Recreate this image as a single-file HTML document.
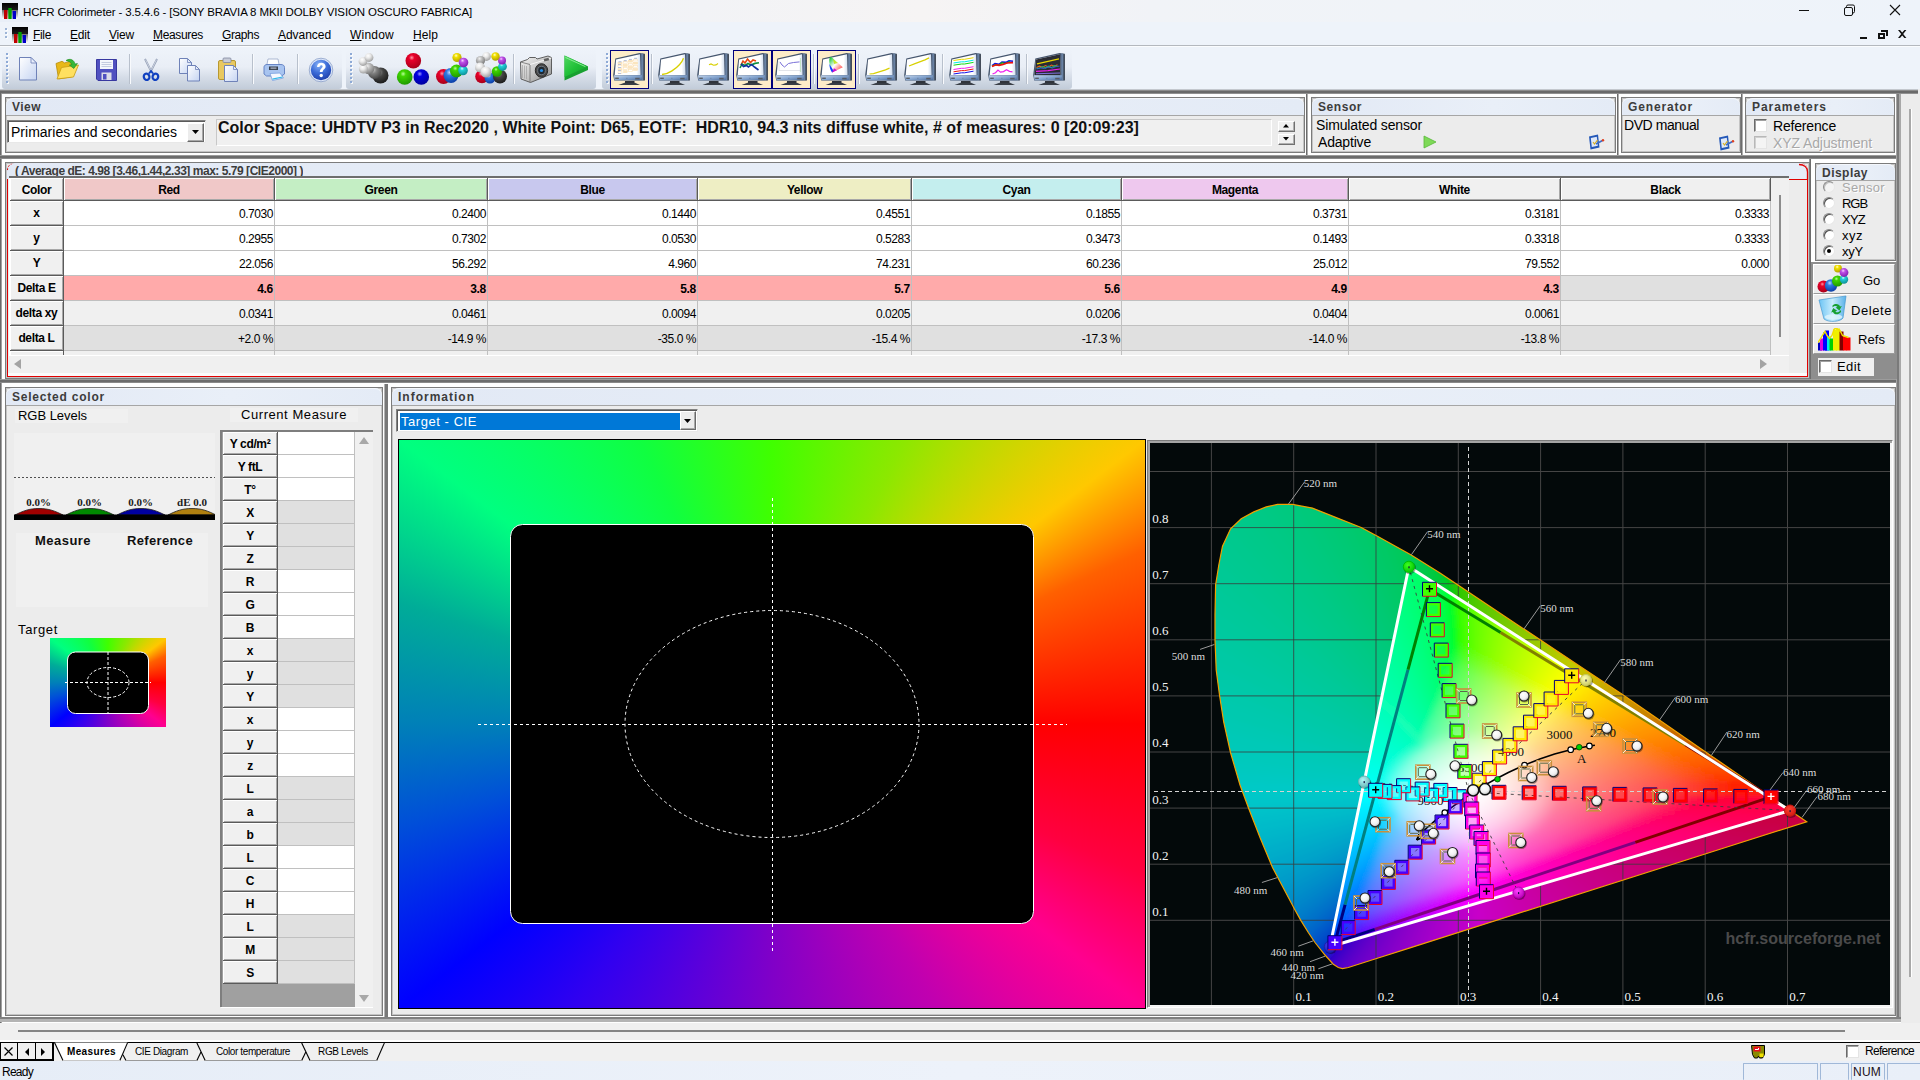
<!DOCTYPE html><html><head><meta charset="utf-8"><title>HCFR Colorimeter</title><style>
*{margin:0;padding:0;box-sizing:border-box}
html,body{width:1920px;height:1080px;overflow:hidden;background:#ececec;font-family:"Liberation Sans",sans-serif;font-size:12px;color:#000}
div,svg{position:absolute}
.t{white-space:nowrap;overflow:visible}
u{text-decoration:underline;text-underline-offset:1px}
</style></head><body><div style="left:0px;top:0px;width:1920px;height:22px;background:linear-gradient(90deg,#e9eff8 0%,#eef2f8 25%,#f6f4f4 48%,#f1f3f7 60%,#eef3fa 100%)"></div>
<svg style="left:2px;top:3px" width="16" height="16" viewBox="0 0 16 16"><defs><linearGradient id="ai2" x1="0" y1="0" x2="0" y2="1"><stop offset="0" stop-color="#000"/><stop offset="1" stop-color="#fff"/></linearGradient></defs><rect width="16" height="16" fill="url(#ai2)"/><rect x="0" y="0" width="16" height="7" fill="#000" opacity=".75"/><rect x="2" y="7" width="3.4" height="9" fill="#c00000"/><rect x="6.3" y="5" width="3.4" height="11" fill="#00a000"/><rect x="10.6" y="8" width="3.4" height="8" fill="#0000c8"/></svg>
<div class="t" style="left:23px;top:4px;height:16px;line-height:16px;font-size:11.5px;color:#000;letter-spacing:-0.136px;">HCFR Colorimeter - 3.5.4.6 - [SONY BRAVIA 8 MKII DOLBY VISION OSCURO FABRICA]</div>
<svg style="left:1790px;top:0" width="130" height="22" viewBox="0 0 130 22"><g stroke="#111" stroke-width="1" fill="none" shape-rendering="crispEdges"><path d="M9 10.5h10"/><rect x="54.5" y="7.5" width="8" height="8" rx="1.5" shape-rendering="auto"/><path d="M56.5 7.5v-1a1.5 1.5 0 0 1 1.5-1.5h5a1.5 1.5 0 0 1 1.5 1.5v5a1.5 1.5 0 0 1-1.5 1.5h-0.5" shape-rendering="auto"/></g><path d="M100 5l10 10M110 5l-10 10" stroke="#111" stroke-width="1.1" fill="none"/></svg>
<div style="left:0px;top:22px;width:1920px;height:24px;background:#eef3fa"></div>
<div style="left:0px;top:45px;width:1920px;height:1px;background:#b4b8be"></div>
<div style="left:0px;top:46px;width:1920px;height:1px;background:#fafcfe"></div>
<svg style="left:5px;top:28px" width="3" height="12"><rect x="0" y="0" width="2" height="2" fill="#9db4d6"/><rect x="1" y="1" width="2" height="2" fill="#fff" opacity=".8"/><rect x="0.5" y="0.5" width="1.5" height="1.5" fill="#9db4d6"/><rect x="0" y="4" width="2" height="2" fill="#9db4d6"/><rect x="1" y="5" width="2" height="2" fill="#fff" opacity=".8"/><rect x="0.5" y="4.5" width="1.5" height="1.5" fill="#9db4d6"/><rect x="0" y="8" width="2" height="2" fill="#9db4d6"/><rect x="1" y="9" width="2" height="2" fill="#fff" opacity=".8"/><rect x="0.5" y="8.5" width="1.5" height="1.5" fill="#9db4d6"/></svg>
<svg style="left:12px;top:27px" width="16" height="16" viewBox="0 0 16 16"><defs><linearGradient id="ai12" x1="0" y1="0" x2="0" y2="1"><stop offset="0" stop-color="#000"/><stop offset="1" stop-color="#fff"/></linearGradient></defs><rect width="16" height="16" fill="url(#ai12)"/><rect x="0" y="0" width="16" height="7" fill="#000" opacity=".75"/><rect x="2" y="7" width="3.4" height="9" fill="#c00000"/><rect x="6.3" y="5" width="3.4" height="11" fill="#00a000"/><rect x="10.6" y="8" width="3.4" height="8" fill="#0000c8"/></svg>
<div class="t" style="left:33px;top:27px;height:16px;line-height:16px;font-size:12px;color:#000;letter-spacing:-0.334px;"><u>F</u>ile</div>
<div class="t" style="left:70px;top:27px;height:16px;line-height:16px;font-size:12px;color:#000;letter-spacing:-0.17px;"><u>E</u>dit</div>
<div class="t" style="left:109px;top:27px;height:16px;line-height:16px;font-size:12px;color:#000;letter-spacing:-0.199px;"><u>V</u>iew</div>
<div class="t" style="left:153px;top:27px;height:16px;line-height:16px;font-size:12px;color:#000;letter-spacing:-0.336px;"><u>M</u>easures</div>
<div class="t" style="left:222px;top:27px;height:16px;line-height:16px;font-size:12px;color:#000;letter-spacing:-0.392px;"><u>G</u>raphs</div>
<div class="t" style="left:278px;top:27px;height:16px;line-height:16px;font-size:12px;color:#000;letter-spacing:-0.047px;"><u>A</u>dvanced</div>
<div class="t" style="left:350px;top:27px;height:16px;line-height:16px;font-size:12px;color:#000;letter-spacing:0.22px;"><u>W</u>indow</div>
<div class="t" style="left:413px;top:27px;height:16px;line-height:16px;font-size:12px;color:#000;letter-spacing:0.08px;"><u>H</u>elp</div>
<svg style="left:1855px;top:26px" width="60" height="18" viewBox="0 0 60 18"><g fill="#111"><rect x="5" y="11" width="7" height="2"/><path d="M26 4h7v6h-2v-4h-5z M23 7h7v6h-7z M25 9v2h3v-2z" fill-rule="evenodd"/><path d="M43 4l2-0 2.2 2.6 2.2-2.6h2l-3.2 4 3.2 4h-2l-2.2-2.6-2.2 2.6h-2l3.2-4z"/></g></svg>
<div style="left:0px;top:47px;width:1920px;height:43px;background:#eef3fa"></div>
<div style="left:2px;top:49px;width:340px;height:40px;background:linear-gradient(180deg,#eef3fa 0%,#e9eef6 45%,#d6dde8 70%,#c2ccd9 100%);border-radius:4px 4px 3px 3px"></div>
<div style="left:346px;top:49px;width:250px;height:40px;background:linear-gradient(180deg,#eef3fa 0%,#e9eef6 45%,#d6dde8 70%,#c2ccd9 100%);border-radius:4px 4px 3px 3px"></div>
<div style="left:602px;top:49px;width:470px;height:40px;background:linear-gradient(180deg,#eef3fa 0%,#e9eef6 45%,#d6dde8 70%,#c2ccd9 100%);border-radius:4px 4px 3px 3px"></div>
<svg style="left:6px;top:53px" width="3" height="32"><rect x="0" y="0" width="2" height="2" fill="#8eaad6"/><rect x="1" y="1" width="2" height="2" fill="#fff" opacity=".8"/><rect x="0.5" y="0.5" width="1.5" height="1.5" fill="#8eaad6"/><rect x="0" y="4" width="2" height="2" fill="#8eaad6"/><rect x="1" y="5" width="2" height="2" fill="#fff" opacity=".8"/><rect x="0.5" y="4.5" width="1.5" height="1.5" fill="#8eaad6"/><rect x="0" y="8" width="2" height="2" fill="#8eaad6"/><rect x="1" y="9" width="2" height="2" fill="#fff" opacity=".8"/><rect x="0.5" y="8.5" width="1.5" height="1.5" fill="#8eaad6"/><rect x="0" y="12" width="2" height="2" fill="#8eaad6"/><rect x="1" y="13" width="2" height="2" fill="#fff" opacity=".8"/><rect x="0.5" y="12.5" width="1.5" height="1.5" fill="#8eaad6"/><rect x="0" y="16" width="2" height="2" fill="#8eaad6"/><rect x="1" y="17" width="2" height="2" fill="#fff" opacity=".8"/><rect x="0.5" y="16.5" width="1.5" height="1.5" fill="#8eaad6"/><rect x="0" y="20" width="2" height="2" fill="#8eaad6"/><rect x="1" y="21" width="2" height="2" fill="#fff" opacity=".8"/><rect x="0.5" y="20.5" width="1.5" height="1.5" fill="#8eaad6"/><rect x="0" y="24" width="2" height="2" fill="#8eaad6"/><rect x="1" y="25" width="2" height="2" fill="#fff" opacity=".8"/><rect x="0.5" y="24.5" width="1.5" height="1.5" fill="#8eaad6"/><rect x="0" y="28" width="2" height="2" fill="#8eaad6"/><rect x="1" y="29" width="2" height="2" fill="#fff" opacity=".8"/><rect x="0.5" y="28.5" width="1.5" height="1.5" fill="#8eaad6"/></svg>
<svg style="left:350px;top:53px" width="3" height="32"><rect x="0" y="0" width="2" height="2" fill="#8eaad6"/><rect x="1" y="1" width="2" height="2" fill="#fff" opacity=".8"/><rect x="0.5" y="0.5" width="1.5" height="1.5" fill="#8eaad6"/><rect x="0" y="4" width="2" height="2" fill="#8eaad6"/><rect x="1" y="5" width="2" height="2" fill="#fff" opacity=".8"/><rect x="0.5" y="4.5" width="1.5" height="1.5" fill="#8eaad6"/><rect x="0" y="8" width="2" height="2" fill="#8eaad6"/><rect x="1" y="9" width="2" height="2" fill="#fff" opacity=".8"/><rect x="0.5" y="8.5" width="1.5" height="1.5" fill="#8eaad6"/><rect x="0" y="12" width="2" height="2" fill="#8eaad6"/><rect x="1" y="13" width="2" height="2" fill="#fff" opacity=".8"/><rect x="0.5" y="12.5" width="1.5" height="1.5" fill="#8eaad6"/><rect x="0" y="16" width="2" height="2" fill="#8eaad6"/><rect x="1" y="17" width="2" height="2" fill="#fff" opacity=".8"/><rect x="0.5" y="16.5" width="1.5" height="1.5" fill="#8eaad6"/><rect x="0" y="20" width="2" height="2" fill="#8eaad6"/><rect x="1" y="21" width="2" height="2" fill="#fff" opacity=".8"/><rect x="0.5" y="20.5" width="1.5" height="1.5" fill="#8eaad6"/><rect x="0" y="24" width="2" height="2" fill="#8eaad6"/><rect x="1" y="25" width="2" height="2" fill="#fff" opacity=".8"/><rect x="0.5" y="24.5" width="1.5" height="1.5" fill="#8eaad6"/><rect x="0" y="28" width="2" height="2" fill="#8eaad6"/><rect x="1" y="29" width="2" height="2" fill="#fff" opacity=".8"/><rect x="0.5" y="28.5" width="1.5" height="1.5" fill="#8eaad6"/></svg>
<svg style="left:606px;top:53px" width="3" height="32"><rect x="0" y="0" width="2" height="2" fill="#8eaad6"/><rect x="1" y="1" width="2" height="2" fill="#fff" opacity=".8"/><rect x="0.5" y="0.5" width="1.5" height="1.5" fill="#8eaad6"/><rect x="0" y="4" width="2" height="2" fill="#8eaad6"/><rect x="1" y="5" width="2" height="2" fill="#fff" opacity=".8"/><rect x="0.5" y="4.5" width="1.5" height="1.5" fill="#8eaad6"/><rect x="0" y="8" width="2" height="2" fill="#8eaad6"/><rect x="1" y="9" width="2" height="2" fill="#fff" opacity=".8"/><rect x="0.5" y="8.5" width="1.5" height="1.5" fill="#8eaad6"/><rect x="0" y="12" width="2" height="2" fill="#8eaad6"/><rect x="1" y="13" width="2" height="2" fill="#fff" opacity=".8"/><rect x="0.5" y="12.5" width="1.5" height="1.5" fill="#8eaad6"/><rect x="0" y="16" width="2" height="2" fill="#8eaad6"/><rect x="1" y="17" width="2" height="2" fill="#fff" opacity=".8"/><rect x="0.5" y="16.5" width="1.5" height="1.5" fill="#8eaad6"/><rect x="0" y="20" width="2" height="2" fill="#8eaad6"/><rect x="1" y="21" width="2" height="2" fill="#fff" opacity=".8"/><rect x="0.5" y="20.5" width="1.5" height="1.5" fill="#8eaad6"/><rect x="0" y="24" width="2" height="2" fill="#8eaad6"/><rect x="1" y="25" width="2" height="2" fill="#fff" opacity=".8"/><rect x="0.5" y="24.5" width="1.5" height="1.5" fill="#8eaad6"/><rect x="0" y="28" width="2" height="2" fill="#8eaad6"/><rect x="1" y="29" width="2" height="2" fill="#fff" opacity=".8"/><rect x="0.5" y="28.5" width="1.5" height="1.5" fill="#8eaad6"/></svg>
<svg width="0" height="0" style="left:0;top:0"><defs>
<linearGradient id="mside" x1="0" x2="1"><stop offset="0" stop-color="#86a6d0"/><stop offset=".45" stop-color="#5a6f8c"/><stop offset="1" stop-color="#2b2f36"/></linearGradient>
<linearGradient id="mbot" x1="0" x2="1" y1="0" y2="1"><stop offset="0" stop-color="#c9d9ee"/><stop offset=".5" stop-color="#86a6d0"/><stop offset="1" stop-color="#4f6d9a"/></linearGradient>
<linearGradient id="mscr" x1="0" x2="1"><stop offset="0" stop-color="#fff"/><stop offset=".85" stop-color="#fff"/><stop offset="1" stop-color="#cfdcee"/></linearGradient>
<radialGradient id="bRed" cx=".4" cy=".3" r=".7"><stop offset="0" stop-color="#ff9aa8"/><stop offset=".25" stop-color="#e8002a"/><stop offset="1" stop-color="#a8001a"/></radialGradient>
<radialGradient id="bGrn" cx=".4" cy=".3" r=".7"><stop offset="0" stop-color="#b8ff9a"/><stop offset=".25" stop-color="#3fd400"/><stop offset="1" stop-color="#1f9a00"/></radialGradient>
<radialGradient id="bBlu" cx=".4" cy=".3" r=".7"><stop offset="0" stop-color="#9a9aff"/><stop offset=".25" stop-color="#0000e0"/><stop offset="1" stop-color="#0000a0"/></radialGradient>
<radialGradient id="bBl2" cx=".4" cy=".3" r=".7"><stop offset="0" stop-color="#bcd8ff"/><stop offset=".3" stop-color="#2f7be0"/><stop offset="1" stop-color="#0a3ea8"/></radialGradient>
<radialGradient id="bYel" cx=".4" cy=".3" r=".7"><stop offset="0" stop-color="#ffffd0"/><stop offset=".3" stop-color="#f2e000"/><stop offset="1" stop-color="#b0a000"/></radialGradient>
<radialGradient id="bMag" cx=".4" cy=".3" r=".7"><stop offset="0" stop-color="#f6d0ff"/><stop offset=".3" stop-color="#c050e8"/><stop offset="1" stop-color="#8020b0"/></radialGradient>
<radialGradient id="bCya" cx=".4" cy=".3" r=".7"><stop offset="0" stop-color="#d0ffff"/><stop offset=".3" stop-color="#20d0d8"/><stop offset="1" stop-color="#109098"/></radialGradient>
<radialGradient id="bW" cx=".4" cy=".3" r=".7"><stop offset="0" stop-color="#fff"/><stop offset=".4" stop-color="#e8e8e8"/><stop offset="1" stop-color="#a0a0a0"/></radialGradient>
<radialGradient id="bG1" cx=".4" cy=".3" r=".7"><stop offset="0" stop-color="#f0f0f0"/><stop offset=".4" stop-color="#b8b8b8"/><stop offset="1" stop-color="#787878"/></radialGradient>
<radialGradient id="bG2" cx=".4" cy=".3" r=".7"><stop offset="0" stop-color="#c8c8c8"/><stop offset=".4" stop-color="#808080"/><stop offset="1" stop-color="#484848"/></radialGradient>
<radialGradient id="bG3" cx=".4" cy=".3" r=".7"><stop offset="0" stop-color="#909090"/><stop offset=".4" stop-color="#444"/><stop offset="1" stop-color="#1c1c1c"/></radialGradient>
<linearGradient id="docg" x1="0" y1="0" x2="1" y2="1"><stop offset="0" stop-color="#fff"/><stop offset="1" stop-color="#c5d4f2"/></linearGradient>
</defs></svg>
<div style="left:610px;top:50px;width:39px;height:39px;background:#fdecc8;border:1px solid #00007c"></div>
<svg style="left:613px;top:52px" width="33" height="34" viewBox="0 0 33 34">
<path d="M5.500 33L11.500 30.800h10.500l5 2.200z" fill="#3a3f47"/><rect x="12" y="29" width="9.5" height="2.2" fill="#30343b"/>
<path d="M2.3 6.6L26.5 0.9 31.8 1.8V28.6H1.2L0.2 23z" fill="#46566e"/>
<path d="M28.6 1.6l3 .6v26h-3z" fill="url(#mside)"/>
<path d="M1 23.2h27.8v5H1.6z" fill="url(#mbot)"/>
<path d="M3.1 7.6L27 2.2l.6 20.9H1.7z" fill="url(#mscr)"/>
<rect x="2.2" y="25.6" width="3.6" height="1.4" fill="#5a6068"/><rect x="22.2" y="25.8" width="4.4" height="1.6" fill="#565c66"/><rect x="13.2" y="25.8" width="1.3" height="1.2" fill="#7088a8"/>
<rect x="5.0" y="10.5" width="4" height="1.8" fill="#fbe6c0" stroke="#fbe0b4" stroke-width=".6"/><rect x="5.0" y="13.6" width="4" height="1.8" fill="#fff" stroke="#fbe0b4" stroke-width=".6"/><rect x="5.0" y="16.7" width="4" height="1.8" fill="#fbe6c0" stroke="#fbe0b4" stroke-width=".6"/><rect x="5.0" y="19.8" width="4" height="1.8" fill="#fff" stroke="#fbe0b4" stroke-width=".6"/><rect x="10.2" y="9.4" width="4" height="1.8" fill="#fff" stroke="#fbe0b4" stroke-width=".6"/><rect x="10.2" y="12.5" width="4" height="1.8" fill="#fbe6c0" stroke="#fbe0b4" stroke-width=".6"/><rect x="10.2" y="15.600000000000001" width="4" height="1.8" fill="#fff" stroke="#fbe0b4" stroke-width=".6"/><rect x="10.2" y="18.700000000000003" width="4" height="1.8" fill="#fbe6c0" stroke="#fbe0b4" stroke-width=".6"/><rect x="15.4" y="8.3" width="4" height="1.8" fill="#fbe6c0" stroke="#fbe0b4" stroke-width=".6"/><rect x="15.4" y="11.4" width="4" height="1.8" fill="#fff" stroke="#fbe0b4" stroke-width=".6"/><rect x="15.4" y="14.5" width="4" height="1.8" fill="#fbe6c0" stroke="#fbe0b4" stroke-width=".6"/><rect x="15.4" y="17.6" width="4" height="1.8" fill="#fff" stroke="#fbe0b4" stroke-width=".6"/><rect x="20.6" y="7.199999999999999" width="4" height="1.8" fill="#fff" stroke="#fbe0b4" stroke-width=".6"/><rect x="20.6" y="10.299999999999999" width="4" height="1.8" fill="#fbe6c0" stroke="#fbe0b4" stroke-width=".6"/><rect x="20.6" y="13.399999999999999" width="4" height="1.8" fill="#fff" stroke="#fbe0b4" stroke-width=".6"/><rect x="20.6" y="16.5" width="4" height="1.8" fill="#fbe6c0" stroke="#fbe0b4" stroke-width=".6"/><rect x="5.5" y="9.2" width="3" height="1.2" fill="#b9c0d6"/><rect x="10.7" y="8.049999999999999" width="3" height="1.2" fill="#b9c0d6"/><rect x="15.9" y="6.8999999999999995" width="3" height="1.2" fill="#b9c0d6"/><rect x="21.1" y="5.75" width="3" height="1.2" fill="#b9c0d6"/><rect x="5" y="12" width="3" height="1" fill="#b9c0d6"/><rect x="5" y="15" width="3" height="1" fill="#b9c0d6"/><rect x="5" y="18" width="3" height="1" fill="#b9c0d6"/><rect x="5" y="21" width="3" height="1" fill="#b9c0d6"/></svg>
<svg style="left:658px;top:52px" width="33" height="34" viewBox="0 0 33 34">
<path d="M5.500 33L11.500 30.800h10.500l5 2.200z" fill="#3a3f47"/><rect x="12" y="29" width="9.5" height="2.2" fill="#30343b"/>
<path d="M2.3 6.6L26.5 0.9 31.8 1.8V28.6H1.2L0.2 23z" fill="#46566e"/>
<path d="M28.6 1.6l3 .6v26h-3z" fill="url(#mside)"/>
<path d="M1 23.2h27.8v5H1.6z" fill="url(#mbot)"/>
<path d="M3.1 7.6L27 2.2l.6 20.9H1.7z" fill="url(#mscr)"/>
<rect x="2.2" y="25.6" width="3.6" height="1.4" fill="#5a6068"/><rect x="22.2" y="25.8" width="4.4" height="1.6" fill="#565c66"/><rect x="13.2" y="25.8" width="1.3" height="1.2" fill="#7088a8"/>
<path d="M4 22.5c3-.3 6.5-1.2 10-3.6 4.5-3 9.5-7 11.5-12.7" stroke="#d8d000" stroke-width="1.3" fill="none"/></svg>
<svg style="left:697px;top:52px" width="33" height="34" viewBox="0 0 33 34">
<path d="M5.500 33L11.500 30.800h10.500l5 2.200z" fill="#3a3f47"/><rect x="12" y="29" width="9.5" height="2.2" fill="#30343b"/>
<path d="M2.3 6.6L26.5 0.9 31.8 1.8V28.6H1.2L0.2 23z" fill="#46566e"/>
<path d="M28.6 1.6l3 .6v26h-3z" fill="url(#mside)"/>
<path d="M1 23.2h27.8v5H1.6z" fill="url(#mbot)"/>
<path d="M3.1 7.6L27 2.2l.6 20.9H1.7z" fill="url(#mscr)"/>
<rect x="2.2" y="25.6" width="3.6" height="1.4" fill="#5a6068"/><rect x="22.2" y="25.8" width="4.4" height="1.6" fill="#565c66"/><rect x="13.2" y="25.8" width="1.3" height="1.2" fill="#7088a8"/>
<path d="M12 12.8l2-.9 2.6 1.3 2.4-.3 2-1.4" stroke="#d8d000" stroke-width="1.1" fill="none"/></svg>
<div style="left:733px;top:50px;width:39px;height:39px;background:#fdecc8;border:1px solid #00007c"></div>
<svg style="left:736px;top:52px" width="33" height="34" viewBox="0 0 33 34">
<path d="M5.500 33L11.500 30.800h10.500l5 2.200z" fill="#3a3f47"/><rect x="12" y="29" width="9.5" height="2.2" fill="#30343b"/>
<path d="M2.3 6.6L26.5 0.9 31.8 1.8V28.6H1.2L0.2 23z" fill="#46566e"/>
<path d="M28.6 1.6l3 .6v26h-3z" fill="url(#mside)"/>
<path d="M1 23.2h27.8v5H1.6z" fill="url(#mbot)"/>
<path d="M3.1 7.6L27 2.2l.6 20.9H1.7z" fill="url(#mscr)"/>
<rect x="2.2" y="25.6" width="3.6" height="1.4" fill="#5a6068"/><rect x="22.2" y="25.8" width="4.4" height="1.6" fill="#565c66"/><rect x="13.2" y="25.8" width="1.3" height="1.2" fill="#7088a8"/>
<path d="M5 13l2-4 2 2 2.5-4 3 3.5 2.5-2.5 3 1" stroke="#e84810" stroke-width="1.6" fill="none"/><path d="M4 16l2-4 3 1.5 3-2 3 1.5 4-1.6 4-.6" stroke="#109040" stroke-width="1.6" fill="none"/><path d="M5 12l2.5 2.5 3-1 2 1.5 3-2.5 3 2.5 4 3" stroke="#1030a0" stroke-width="1.6" fill="none"/></svg>
<div style="left:772px;top:50px;width:39px;height:39px;background:#fdecc8;border:1px solid #00007c"></div>
<svg style="left:775px;top:52px" width="33" height="34" viewBox="0 0 33 34">
<path d="M5.500 33L11.500 30.800h10.500l5 2.200z" fill="#3a3f47"/><rect x="12" y="29" width="9.5" height="2.2" fill="#30343b"/>
<path d="M2.3 6.6L26.5 0.9 31.8 1.8V28.6H1.2L0.2 23z" fill="#46566e"/>
<path d="M28.6 1.6l3 .6v26h-3z" fill="url(#mside)"/>
<path d="M1 23.2h27.8v5H1.6z" fill="url(#mbot)"/>
<path d="M3.1 7.6L27 2.2l.6 20.9H1.7z" fill="url(#mscr)"/>
<rect x="2.2" y="25.6" width="3.6" height="1.4" fill="#5a6068"/><rect x="22.2" y="25.8" width="4.4" height="1.6" fill="#565c66"/><rect x="13.2" y="25.8" width="1.3" height="1.2" fill="#7088a8"/>
<path d="M5 10l2 3 2.5 2 4-3.5 5-1 6-.6" stroke="#7a70d8" stroke-width="1" fill="none"/><path d="M4 18.5h22M4 9v9.5" stroke="#d0d4dc" stroke-width=".6" fill="none"/><path d="M25.5 6v14" stroke="#b8e0b8" stroke-width=".8"/></svg>
<div style="left:817px;top:50px;width:39px;height:39px;background:#fdecc8;border:1px solid #00007c"></div>
<svg style="left:820px;top:52px" width="33" height="34" viewBox="0 0 33 34">
<path d="M5.500 33L11.500 30.800h10.500l5 2.200z" fill="#3a3f47"/><rect x="12" y="29" width="9.5" height="2.2" fill="#30343b"/>
<path d="M2.3 6.6L26.5 0.9 31.8 1.8V28.6H1.2L0.2 23z" fill="#46566e"/>
<path d="M28.6 1.6l3 .6v26h-3z" fill="url(#mside)"/>
<path d="M1 23.2h27.8v5H1.6z" fill="url(#mbot)"/>
<path d="M3.1 7.6L27 2.2l.6 20.9H1.7z" fill="url(#mscr)"/>
<rect x="2.2" y="25.6" width="3.6" height="1.4" fill="#5a6068"/><rect x="22.2" y="25.8" width="4.4" height="1.6" fill="#565c66"/><rect x="13.2" y="25.8" width="1.3" height="1.2" fill="#7088a8"/>
<defs><linearGradient id="cg1" x1="0" y1="0" x2="1" y2="1"><stop offset="0" stop-color="#00c020"/><stop offset=".45" stop-color="#fff"/><stop offset="1" stop-color="#ff1010"/></linearGradient></defs><path d="M9.8 5.6c1.2-.8 2.6 0 3.6 1.2L22.8 15.3 12 20.6C10.4 16 8.2 9 9.8 5.6z" fill="url(#cg1)"/><path d="M9.4 12c0 3 .9 6 2.6 8.6l2-1.2z" fill="#1040ff"/><path d="M12 20.6l5-2.4-3-2z" fill="#d010d0"/><path d="M13 7l5 4-4 1z" fill="#c0e000" opacity=".8"/></svg>
<svg style="left:865px;top:52px" width="33" height="34" viewBox="0 0 33 34">
<path d="M5.500 33L11.500 30.800h10.500l5 2.200z" fill="#3a3f47"/><rect x="12" y="29" width="9.5" height="2.2" fill="#30343b"/>
<path d="M2.3 6.6L26.5 0.9 31.8 1.8V28.6H1.2L0.2 23z" fill="#46566e"/>
<path d="M28.6 1.6l3 .6v26h-3z" fill="url(#mside)"/>
<path d="M1 23.2h27.8v5H1.6z" fill="url(#mbot)"/>
<path d="M3.1 7.6L27 2.2l.6 20.9H1.7z" fill="url(#mscr)"/>
<rect x="2.2" y="25.6" width="3.6" height="1.4" fill="#5a6068"/><rect x="22.2" y="25.8" width="4.4" height="1.6" fill="#565c66"/><rect x="13.2" y="25.8" width="1.3" height="1.2" fill="#7088a8"/>
<path d="M4.5 22l4-.4 12-3.7 4-1.8" stroke="#d8d000" stroke-width="1.2" fill="none"/></svg>
<svg style="left:904px;top:52px" width="33" height="34" viewBox="0 0 33 34">
<path d="M5.500 33L11.500 30.800h10.500l5 2.200z" fill="#3a3f47"/><rect x="12" y="29" width="9.5" height="2.2" fill="#30343b"/>
<path d="M2.3 6.6L26.5 0.9 31.8 1.8V28.6H1.2L0.2 23z" fill="#46566e"/>
<path d="M28.6 1.6l3 .6v26h-3z" fill="url(#mside)"/>
<path d="M1 23.2h27.8v5H1.6z" fill="url(#mbot)"/>
<path d="M3.1 7.6L27 2.2l.6 20.9H1.7z" fill="url(#mscr)"/>
<rect x="2.2" y="25.6" width="3.6" height="1.4" fill="#5a6068"/><rect x="22.2" y="25.8" width="4.4" height="1.6" fill="#565c66"/><rect x="13.2" y="25.8" width="1.3" height="1.2" fill="#7088a8"/>
<path d="M5 14l6-2.4 10-3.7 4-2" stroke="#d8d000" stroke-width="1.2" fill="none"/></svg>
<svg style="left:949px;top:52px" width="33" height="34" viewBox="0 0 33 34">
<path d="M5.500 33L11.500 30.800h10.500l5 2.200z" fill="#3a3f47"/><rect x="12" y="29" width="9.5" height="2.2" fill="#30343b"/>
<path d="M2.3 6.6L26.5 0.9 31.8 1.8V28.6H1.2L0.2 23z" fill="#46566e"/>
<path d="M28.6 1.6l3 .6v26h-3z" fill="url(#mside)"/>
<path d="M1 23.2h27.8v5H1.6z" fill="url(#mbot)"/>
<path d="M3.1 7.6L27 2.2l.6 20.9H1.7z" fill="url(#mscr)"/>
<rect x="2.2" y="25.6" width="3.6" height="1.4" fill="#5a6068"/><rect x="22.2" y="25.8" width="4.4" height="1.6" fill="#565c66"/><rect x="13.2" y="25.8" width="1.3" height="1.2" fill="#7088a8"/>
<path d="M4.5 8.5l8-1.2 h3 l9-1.6" stroke="#e8d800" stroke-width="1" fill="none"/><path d="M4.5 11l8-1.2 h3 l9-1.6" stroke="#00e8e8" stroke-width="1" fill="none"/><path d="M4.5 13.2l8-1.2 h3 l9-1.6" stroke="#10d810" stroke-width="1" fill="none"/><path d="M4.5 17.5l8-1.2 h3 l9-1.6" stroke="#f020f0" stroke-width="1" fill="none"/><path d="M4.5 19.8l8-1.2 h3 l9-1.6" stroke="#f01010" stroke-width="1" fill="none"/><path d="M4.5 22l8-1.2 h3 l9-1.6" stroke="#1010e8" stroke-width="1" fill="none"/></svg>
<svg style="left:988px;top:52px" width="33" height="34" viewBox="0 0 33 34">
<path d="M5.500 33L11.500 30.800h10.500l5 2.200z" fill="#3a3f47"/><rect x="12" y="29" width="9.5" height="2.2" fill="#30343b"/>
<path d="M2.3 6.6L26.5 0.9 31.8 1.8V28.6H1.2L0.2 23z" fill="#46566e"/>
<path d="M28.6 1.6l3 .6v26h-3z" fill="url(#mside)"/>
<path d="M1 23.2h27.8v5H1.6z" fill="url(#mbot)"/>
<path d="M3.1 7.6L27 2.2l.6 20.9H1.7z" fill="url(#mscr)"/>
<rect x="2.2" y="25.6" width="3.6" height="1.4" fill="#5a6068"/><rect x="22.2" y="25.8" width="4.4" height="1.6" fill="#565c66"/><rect x="13.2" y="25.8" width="1.3" height="1.2" fill="#7088a8"/>
<path d="M4 13.6l3-2 4 .8 3-2.4 4 .4 3-1.6 4 .4" stroke="#1010e0" stroke-width="1.6" fill="none"/><path d="M4 14l3-1 4 .2 3-2.4 3 .8 5-2" stroke="#10c010" stroke-width="1.3" fill="none"/><path d="M4 14.4l4-1.6 3 .6 4-1 4-1.4 6-.4" stroke="#f01010" stroke-width="1.6" fill="none"/><path d="M4.5 22l3-1.3 2.5-2.6 2.5 2 3-.5 3-1.8 3 1.6 3 .4" stroke="#f020f0" stroke-width="1.2" fill="none"/></svg>
<svg style="left:1033px;top:52px" width="33" height="34" viewBox="0 0 33 34">
<path d="M5.500 33L11.500 30.800h10.500l5 2.200z" fill="#3a3f47"/><rect x="12" y="29" width="9.5" height="2.2" fill="#30343b"/>
<path d="M2.3 6.6L26.5 0.9 31.8 1.8V28.6H1.2L0.2 23z" fill="#46566e"/>
<path d="M28.6 1.6l3 .6v26h-3z" fill="url(#mside)"/>
<path d="M1 23.2h27.8v5H1.6z" fill="url(#mbot)"/>
<path d="M3.1 7.6L27 2.2l.6 20.9H1.7z" fill="url(#mscr)"/>
<rect x="2.2" y="25.6" width="3.6" height="1.4" fill="#5a6068"/><rect x="22.2" y="25.8" width="4.4" height="1.6" fill="#565c66"/><rect x="13.2" y="25.8" width="1.3" height="1.2" fill="#7088a8"/>
<path d="M3.1 7.6L27 2.2l.6 20.9H1.7z" fill="#2a2c34"/><path d="M4 11.8l22-5" stroke="#e8d800" stroke-width="1.2"/><path d="M3.5 15.6l3-1.4 3 1 3-1.6 3 1.4 3-2 3 1.2 3-1.4" stroke="#e86020" stroke-width="1.1" fill="none"/><path d="M3.5 16.4l3-.4 3-1.4 3 1.2 3-1.6 3 1.4 3-2 3 .6" stroke="#20b060" stroke-width="1.1" fill="none"/><path d="M3.5 17l4-1 4 .6 4-1.6 4 1 4-1.6 3-.2" stroke="#3060e0" stroke-width=".9" fill="none"/><path d="M3 19.4l12-.8 12-1.6" stroke="#f020f0" stroke-width="1.1"/><path d="M3 21.8l24-.8" stroke="#8070e0" stroke-width="1.1"/></svg>
<div style="left:129px;top:54px;width:1px;height:30px;background:#b8c0cc"></div>
<div style="left:130px;top:54px;width:1px;height:30px;background:#f8fafd"></div>
<div style="left:252px;top:54px;width:1px;height:30px;background:#b8c0cc"></div>
<div style="left:253px;top:54px;width:1px;height:30px;background:#f8fafd"></div>
<div style="left:297px;top:54px;width:1px;height:30px;background:#b8c0cc"></div>
<div style="left:298px;top:54px;width:1px;height:30px;background:#f8fafd"></div>
<div style="left:513px;top:54px;width:1px;height:30px;background:#b8c0cc"></div>
<div style="left:514px;top:54px;width:1px;height:30px;background:#f8fafd"></div>
<div style="left:651px;top:54px;width:1px;height:30px;background:#b8c0cc"></div>
<div style="left:652px;top:54px;width:1px;height:30px;background:#f8fafd"></div>
<div style="left:813px;top:54px;width:1px;height:30px;background:#b8c0cc"></div>
<div style="left:814px;top:54px;width:1px;height:30px;background:#f8fafd"></div>
<div style="left:858px;top:54px;width:1px;height:30px;background:#b8c0cc"></div>
<div style="left:859px;top:54px;width:1px;height:30px;background:#f8fafd"></div>
<div style="left:942px;top:54px;width:1px;height:30px;background:#b8c0cc"></div>
<div style="left:943px;top:54px;width:1px;height:30px;background:#f8fafd"></div>
<div style="left:1026px;top:54px;width:1px;height:30px;background:#b8c0cc"></div>
<div style="left:1027px;top:54px;width:1px;height:30px;background:#f8fafd"></div>
<svg style="left:18px;top:56px" width="20" height="26" viewBox="0 0 20 26"><path d="M1.5 1.5h11.5l5.5 5.5v17h-17z" fill="url(#docg)" stroke="#6f82b8" stroke-width="1"/><path d="M13 1.5v5.5h5.5z" fill="#e8eefc" stroke="#6f82b8" stroke-width=".8"/></svg>
<svg style="left:54px;top:57px" width="27" height="25" viewBox="0 0 27 25"><path d="M2 6.5l6-2.2 2.6 1.6 7-2v16l-13 2z" fill="#e8b818" stroke="#b88c08" stroke-width=".8"/><path d="M3 22L7.5 10.5l17-2.5L19.5 20z" fill="#ffe060" stroke="#c89c10" stroke-width=".8"/><path d="M12 3.5c4-2.6 8.2-.6 9 3.6l2.4-.6-3.6 5-4.4-3.4 2.4-.5c-.8-2.2-2.8-3.4-5.8-4.100z" fill="#38b838" stroke="#1c8a1c" stroke-width=".6"/></svg>
<svg style="left:95px;top:58px" width="23" height="24" viewBox="0 0 23 24"><path d="M1.5 1.5h20v21h-18.500l-1.500-1.500z" fill="#5050c0" stroke="#3838a0" stroke-width="1"/><rect x="5" y="2" width="13" height="9" fill="#f4f6fc"/><path d="M6.500 4.500h10M6.500 6.500h10M6.500 8.500h10" stroke="#b8c0d8" stroke-width=".8"/><rect x="6.500" y="14.500" width="10" height="7.500" fill="#dcdce8"/><rect x="8" y="16" width="3.500" height="5.500" fill="#5050c0"/></svg>
<svg style="left:142px;top:58px" width="18" height="24" viewBox="0 0 18 24"><path d="M3 1l6.500 13M15 1L8.500 14" stroke="#8c98b0" stroke-width="1.800" fill="none"/><path d="M3.400 1.500l5.400 11M14.600 1.500L9.200 12.500" stroke="#e8ecf4" stroke-width=".7" fill="none"/><ellipse cx="4.600" cy="18.800" rx="2.800" ry="3.200" fill="none" stroke="#1040c0" stroke-width="2.200" transform="rotate(-18 4.600 18.800)"/><ellipse cx="13.400" cy="18.800" rx="2.800" ry="3.200" fill="none" stroke="#1040c0" stroke-width="2.200" transform="rotate(18 13.400 18.800)"/><path d="M7 15.500l2-2.500 2 2.500" stroke="#1040c0" stroke-width="2" fill="none"/></svg>
<svg style="left:178px;top:57px" width="24" height="26" viewBox="0 0 24 26"><path d="M1.500 1.500h8l4 4v11h-12z" fill="url(#docg)" stroke="#6f82b8"/><path d="M9.500 1.500v4h4" fill="none" stroke="#6f82b8" stroke-width=".8"/><path d="M9.500 8.500h8l4 4v11.500h-12z" fill="url(#docg)" stroke="#6f82b8"/><path d="M17.500 8.500v4h4" fill="none" stroke="#6f82b8" stroke-width=".8"/></svg>
<svg style="left:217px;top:57px" width="23" height="26" viewBox="0 0 23 26"><rect x="1.500" y="3.500" width="17" height="19" rx="1.500" fill="#e8c860" stroke="#b89830"/><rect x="6" y="1" width="8" height="4.500" rx="1" fill="#c8ccd8" stroke="#8088a0" stroke-width=".8"/><path d="M7.500 8.500h9l4 4v12h-13z" fill="url(#docg)" stroke="#6f82b8"/><path d="M16.500 8.500v4h4" fill="none" stroke="#6f82b8" stroke-width=".8"/></svg>
<svg style="left:262px;top:58px" width="25" height="24" viewBox="0 0 25 24"><path d="M6 1h10l1.500 8h-13z" fill="#fff" stroke="#9aa8c8" stroke-width=".8"/><path d="M2 9c0-1.500 1.500-2.500 3-2.500h14c2 0 3.500 1 3.500 3v6.500l-3 2h-15l-2.500-2z" fill="#a8c4f0" stroke="#5c7cc0" stroke-width=".9"/><path d="M7 8.500h9v3.500h-9z" fill="#38404c"/><path d="M8.500 9.300h6v1.800h-6z" fill="#9098a8"/><path d="M8 15.500l10-.5 3.500 5-11 2.500z" fill="#f4f8ff" stroke="#78a0e0" stroke-width=".8"/><path d="M10.500 21.200l10-2.200" stroke="#30b8e8" stroke-width="1.200"/></svg>
<svg style="left:308px;top:57px" width="26" height="26" viewBox="0 0 26 26"><defs><radialGradient id="hg" cx=".4" cy=".25" r=".8"><stop offset="0" stop-color="#8ab4f8"/><stop offset=".5" stop-color="#3c6cd8"/><stop offset="1" stop-color="#1c3ca8"/></radialGradient></defs><circle cx="13" cy="13" r="11.800" fill="#dce6f8" stroke="#8ca0c8" stroke-width=".8"/><circle cx="13" cy="13" r="10.200" fill="url(#hg)"/><path d="M9 10c0-2.800 2-4.300 4.300-4.300 2.500 0 4.300 1.500 4.300 3.800 0 2.600-3 3-3 5.500h-2.800c0-3.300 2.800-3.800 2.800-5.500 0-.8-.6-1.300-1.400-1.300-1 0-1.600.7-1.600 1.800z" fill="#fff"/><circle cx="13.200" cy="18.500" r="1.700" fill="#fff"/></svg>
<svg style="left:356px;top:51px" width="36" height="36" viewBox="0 0 36 36"><circle cx="24.5" cy="24.5" r="8" fill="url(#bG3)"/><circle cx="18.5" cy="21.5" r="6.5" fill="url(#bG2)"/><circle cx="12.5" cy="17.5" r="5.8" fill="url(#bG1)"/><circle cx="7.5" cy="18" r="4.6" fill="url(#bW)"/><circle cx="7" cy="10.5" r="4.4" fill="url(#bW)"/><circle cx="13" cy="6.5" r="4.4" fill="url(#bW)"/></svg>
<svg style="left:395px;top:51px" width="36" height="36" viewBox="0 0 36 36"><circle cx="18.3" cy="9.8" r="7.8" fill="url(#bRed)"/><circle cx="9.7" cy="26" r="7.8" fill="url(#bGrn)"/><circle cx="26.3" cy="26" r="7.8" fill="url(#bBlu)"/></svg>
<svg style="left:435px;top:51px" width="36" height="36" viewBox="0 0 36 36"><circle cx="8.5" cy="25.5" r="7.5" fill="url(#bRed)"/><circle cx="16" cy="24.5" r="7.5" fill="url(#bBl2)"/><circle cx="21.5" cy="20" r="6.5" fill="url(#bGrn)"/><circle cx="28" cy="19.5" r="4.8" fill="url(#bCya)"/><circle cx="22" cy="6.5" r="4.6" fill="url(#bYel)"/><circle cx="28.5" cy="11.5" r="4.8" fill="url(#bMag)"/></svg>
<svg style="left:474px;top:51px" width="36" height="36" viewBox="0 0 36 36"><circle cx="8" cy="25.5" r="6.8" fill="url(#bRed)"/><circle cx="16" cy="27" r="5.5" fill="url(#bBl2)"/><circle cx="26" cy="25.5" r="7" fill="url(#bG3)"/><circle cx="23" cy="20.5" r="5.2" fill="url(#bGrn)"/><circle cx="28.5" cy="15.5" r="4.4" fill="url(#bCya)"/><circle cx="28" cy="9.5" r="4" fill="url(#bMag)"/><circle cx="21.5" cy="5.5" r="4.2" fill="url(#bYel)"/><circle cx="12.5" cy="5.5" r="4.4" fill="url(#bW)"/><circle cx="6.5" cy="9.5" r="4.6" fill="url(#bG1)"/><circle cx="6" cy="16.5" r="5" fill="url(#bW)"/><circle cx="12" cy="21" r="5.6" fill="url(#bW)"/></svg>
<svg style="left:519px;top:53px" width="34" height="31" viewBox="0 0 34 31"><defs><linearGradient id="cam" x1="0" y1="0" x2="1" y2="1"><stop offset="0" stop-color="#f4f4f4"/><stop offset=".5" stop-color="#c8c8c8"/><stop offset="1" stop-color="#888"/></linearGradient></defs><path d="M1.500 9l7-2.500 2-2h6l1.500 1.500 11-3 3.500 1.500v16.500l-21 8.500-9.500-3.500z" fill="url(#cam)" stroke="#505050" stroke-width=".9"/><path d="M1.500 9l9.500 2.500v17.500" fill="none" stroke="#707070" stroke-width=".8"/><path d="M3.500 12v13M5.500 12.500v13M7.500 13v13" stroke="#a0a0a0" stroke-width=".7"/><path d="M11 11.500l21.500-6.500" stroke="#fff" stroke-width=".8"/><ellipse cx="22.500" cy="17.500" rx="6.200" ry="6.800" fill="#484848" stroke="#282828"/><ellipse cx="22.500" cy="17.500" rx="3.800" ry="4.200" fill="#202830" stroke="#808890" stroke-width=".8"/><circle cx="22.500" cy="17.500" r="1.600" fill="#2890e8"/><rect x="25" y="5.500" width="5" height="2.500" fill="#606060" transform="rotate(-15 27 7)"/></svg>
<svg style="left:563px;top:54px" width="27" height="28" viewBox="0 0 27 28"><defs><linearGradient id="pl" x1="0" y1="0" x2="1" y2="1"><stop offset="0" stop-color="#50d860"/><stop offset=".5" stop-color="#20c038"/><stop offset="1" stop-color="#109828"/></linearGradient></defs><path d="M1.500 1.500l23.500 11v3.500l-23.500 10.500z" fill="#18a030"/><path d="M1.500 1.500l23.500 11-23.500 10.500z" fill="url(#pl)"/><path d="M2.500 3.500l20 9.200" stroke="#a0f0a8" stroke-width="1" opacity=".8"/></svg>
<div style="left:0px;top:90px;width:1920px;height:952px;background:#fff"></div>
<div style="left:1901px;top:89px;width:19px;height:953px;background:#ececec"></div>
<div style="left:1909px;top:109px;width:2px;height:868px;background:#a8a8a8"></div>
<div style="left:1911px;top:109px;width:1px;height:868px;background:#fff"></div>
<div style="left:0px;top:89px;width:1918px;height:1px;background:#c4c8ce"></div>
<div style="left:0px;top:90px;width:1918px;height:1px;background:#8c8c8c"></div>
<div style="left:0px;top:91px;width:1918px;height:2px;background:#6a6a6a"></div>
<div style="left:0px;top:93px;width:1918px;height:1px;background:#909090"></div>
<div style="left:0px;top:91px;width:1px;height:951px;background:#6a6a6a"></div>
<div style="left:1px;top:94px;width:1px;height:948px;background:#a0a0a0"></div>
<div style="left:0px;top:155px;width:1901px;height:1px;background:#9c9c9c"></div>
<div style="left:0px;top:156px;width:1901px;height:2px;background:#6c6c6c"></div>
<div style="left:0px;top:158px;width:1901px;height:1px;background:#8a8a8a"></div>
<div style="left:0px;top:379px;width:1901px;height:1px;background:#9c9c9c"></div>
<div style="left:0px;top:380px;width:1901px;height:2px;background:#6c6c6c"></div>
<div style="left:0px;top:382px;width:1901px;height:1px;background:#8a8a8a"></div>
<div style="left:1896px;top:94px;width:1px;height:928px;background:#a4a4a4"></div>
<div style="left:1897px;top:94px;width:2px;height:928px;background:#7a7a7a"></div>
<div style="left:1899px;top:94px;width:2px;height:928px;background:#a8a8a8"></div>
<div style="left:1306px;top:94px;width:1px;height:61px;background:#6c6c6c"></div>
<div style="left:1307px;top:94px;width:1px;height:61px;background:#b0b0b0"></div>
<div style="left:1617px;top:94px;width:1px;height:61px;background:#6c6c6c"></div>
<div style="left:1618px;top:94px;width:1px;height:61px;background:#b0b0b0"></div>
<div style="left:1741px;top:94px;width:1px;height:61px;background:#6c6c6c"></div>
<div style="left:1742px;top:94px;width:1px;height:61px;background:#b0b0b0"></div>
<div style="left:5px;top:97px;width:1300px;height:56px;background:#ececec;border:1px solid #7c7c7c;box-shadow:inset 0 0 0 1px #c4c4c4"></div>
<div style="left:6px;top:98px;width:1298px;height:17px;background:linear-gradient(90deg,#e2e9f5,#e9eff8 60%,#e4ebf6);border-radius:7px 7px 0 0;box-shadow:inset 0 1px 0 #f4f7fc"></div>
<div style="left:6px;top:115px;width:1298px;height:1px;background:#a6a6a6"></div>
<div class="t" style="left:12px;top:100px;height:15px;line-height:15px;font-size:12px;color:#3c3c3c;font-weight:bold;letter-spacing:0.468px;">View</div>
<div style="left:7px;top:120px;width:199px;height:23px;background:#fff;border:1px solid #828282;border-right-color:#e8e8e8;border-bottom-color:#e8e8e8;box-shadow:inset 1px 1px 0 #5a5a5a"></div>
<div class="t" style="left:11px;top:124px;height:16px;line-height:16px;font-size:14px;color:#000;letter-spacing:0.01px;">Primaries and secondaries</div>
<div style="left:187px;top:123px;width:17px;height:19px;background:#ececec;border:1px solid #fff;border-right-color:#6a6a6a;border-bottom-color:#6a6a6a;box-shadow:inset -1px -1px 0 #a8a8a8"></div>
<svg style="left:192px;top:130px" width="8" height="4"><path d="M0 0h7l-3.500 4z" fill="#000"/></svg>
<div style="left:216px;top:119px;width:1056px;height:27px;background:#f0f0f0;border:1px solid #c8c8c8;border-right-color:#fff;border-bottom-color:#fff"></div>
<div class="t" style="left:218px;top:119px;height:18px;line-height:18px;font-size:16px;color:#101010;font-weight:bold;letter-spacing:0.021px;">Color Space: UHDTV P3 in Rec2020 , White Point: D65, EOTF:  HDR10, 94.3 nits diffuse white, # of measures: 0 [20:09:23]</div>
<div style="left:1278px;top:121px;width:17px;height:11px;background:#f0f0f0;border:1px solid #fff;border-right-color:#707070;border-bottom-color:#707070;box-shadow:inset -1px -1px 0 #b0b0b0"></div>
<svg style="left:1283px;top:124px" width="6" height="4"><path d="M0 3.500h6l-3-3.500z" fill="#000"/></svg>
<div style="left:1278px;top:134px;width:17px;height:11px;background:#f0f0f0;border:1px solid #fff;border-right-color:#707070;border-bottom-color:#707070;box-shadow:inset -1px -1px 0 #b0b0b0"></div>
<svg style="left:1283px;top:137px" width="6" height="4"><path d="M0 0h6l-3 3.500z" fill="#000"/></svg>
<div style="left:1311px;top:97px;width:305px;height:56px;background:#ececec;border:1px solid #7c7c7c;box-shadow:inset 0 0 0 1px #c4c4c4"></div>
<div style="left:1312px;top:98px;width:303px;height:17px;background:linear-gradient(90deg,#e2e9f5,#e9eff8 60%,#e4ebf6);border-radius:7px 7px 0 0;box-shadow:inset 0 1px 0 #f4f7fc"></div>
<div style="left:1312px;top:115px;width:303px;height:1px;background:#a6a6a6"></div>
<div class="t" style="left:1318px;top:100px;height:15px;line-height:15px;font-size:12px;color:#3c3c3c;font-weight:bold;letter-spacing:0.553px;">Sensor</div>
<div class="t" style="left:1316px;top:117px;height:16px;line-height:16px;font-size:14px;color:#000;letter-spacing:-0.136px;">Simulated sensor</div>
<div class="t" style="left:1318px;top:134px;height:16px;line-height:16px;font-size:14px;color:#000;letter-spacing:-0.186px;">Adaptive</div>
<svg style="left:1423px;top:135px" width="14" height="14"><path d="M1 1l12 6-12 6z" fill="#7ed957" stroke="#58b838" stroke-width=".8"/></svg>
<svg style="left:1587px;top:133px" width="18" height="18" viewBox="0 0 18 18"><path d="M2 3.500l9-2 1.500 13-9 2z" fill="#2458b8"/><path d="M3.800 5l6-1.300 1 9-6 1.300z" fill="#dfe8f8"/><path d="M6 9l1.500 2 3-4" stroke="#d8b020" stroke-width="1.200" fill="none"/><path d="M9 11l6.500-3.500" stroke="#3c6cc8" stroke-width="1.600"/><circle cx="16" cy="7.300" r="1.200" fill="#e04020"/></svg>
<div style="left:1621px;top:97px;width:120px;height:56px;background:#ececec;border:1px solid #7c7c7c;box-shadow:inset 0 0 0 1px #c4c4c4"></div>
<div style="left:1622px;top:98px;width:118px;height:17px;background:linear-gradient(90deg,#e2e9f5,#e9eff8 60%,#e4ebf6);border-radius:7px 7px 0 0;box-shadow:inset 0 1px 0 #f4f7fc"></div>
<div style="left:1622px;top:115px;width:118px;height:1px;background:#a6a6a6"></div>
<div class="t" style="left:1628px;top:100px;height:15px;line-height:15px;font-size:12px;color:#3c3c3c;font-weight:bold;letter-spacing:0.85px;">Generator</div>
<div class="t" style="left:1624px;top:117px;height:16px;line-height:16px;font-size:14px;color:#000;letter-spacing:-0.437px;">DVD manual</div>
<svg style="left:1717px;top:134px" width="18" height="18" viewBox="0 0 18 18"><path d="M2 3.500l9-2 1.500 13-9 2z" fill="#2458b8"/><path d="M3.800 5l6-1.300 1 9-6 1.300z" fill="#dfe8f8"/><path d="M6 9l1.500 2 3-4" stroke="#d8b020" stroke-width="1.200" fill="none"/><path d="M9 11l6.500-3.500" stroke="#3c6cc8" stroke-width="1.600"/><circle cx="16" cy="7.300" r="1.200" fill="#e04020"/></svg>
<div style="left:1745px;top:97px;width:150px;height:56px;background:#ececec;border:1px solid #7c7c7c;box-shadow:inset 0 0 0 1px #c4c4c4"></div>
<div style="left:1746px;top:98px;width:148px;height:17px;background:linear-gradient(90deg,#e2e9f5,#e9eff8 60%,#e4ebf6);border-radius:7px 7px 0 0;box-shadow:inset 0 1px 0 #f4f7fc"></div>
<div style="left:1746px;top:115px;width:148px;height:1px;background:#a6a6a6"></div>
<div class="t" style="left:1752px;top:100px;height:15px;line-height:15px;font-size:12px;color:#3c3c3c;font-weight:bold;letter-spacing:0.962px;">Parameters</div>
<div style="left:1754px;top:119px;width:13px;height:13px;background:#fff;border:1px solid #6a6a6a;border-right-color:#e4e4e4;border-bottom-color:#e4e4e4;box-shadow:inset 1px 1px 0 #a0a0a0"></div>
<div class="t" style="left:1773px;top:118px;height:16px;line-height:16px;font-size:14px;color:#000;letter-spacing:-0.177px;">Reference</div>
<div style="left:1754px;top:136px;width:13px;height:13px;background:#f4f4f4;border:1px solid #b8b8b8;border-right-color:#e4e4e4;border-bottom-color:#e4e4e4;box-shadow:inset 1px 1px 0 #d0d0d0"></div>
<div class="t" style="left:1773px;top:135px;height:16px;line-height:16px;font-size:14px;color:#a8a8a8;letter-spacing:-0.099px;text-shadow:1px 1px 0 #fff;">XYZ Adjustment</div>
<div style="left:1809px;top:159px;width:1px;height:220px;background:#9c9c9c"></div>
<div style="left:1810px;top:159px;width:1px;height:220px;background:#6c6c6c"></div>
<div style="left:5px;top:162px;width:1805px;height:217px;background:#ececec;border:1px solid #7c7c7c;box-shadow:inset 0 0 0 1px #c4c4c4"></div>
<div style="left:7px;top:163px;width:1801px;height:214px;border:1px solid #e00000;border-top-width:0;border-radius:8px 8px 0 0"></div>
<div style="left:7px;top:163px;width:1801px;height:16px;background:linear-gradient(90deg,#e2e9f5,#e9eff8 60%,#e6ecf7);border-radius:8px 8px 0 0"></div>
<div style="left:1789px;top:179px;width:18px;height:1px;background:#e00000"></div>
<svg style="left:1796px;top:162px" width="13" height="18"><path d="M3 2.500C8 2.500 11.500 5 11.500 10V18" stroke="#e00000" stroke-width="1.300" fill="none"/></svg>
<svg style="left:5px;top:162px" width="8" height="10"><path d="M2.500 8C2.500 5 4 3 6.500 2.500" stroke="#e00000" stroke-width="1" fill="none" stroke-dasharray="1.500 2"/></svg>
<div style="left:8px;top:373px;width:1799px;height:3px;background:#fbfbfb"></div>
<div class="t" style="left:15px;top:164px;height:15px;line-height:15px;font-size:12px;color:#3c3c3c;font-weight:bold;letter-spacing:-0.467px;clip-path:inset(0 0 2.5px 0);">( Average dE: 4.98 [3.46,1.44,2.33] max: 5.79 [CIE2000] )</div>
<div style="left:9px;top:176px;width:1780px;height:2px;background:#6e6e6e"></div>
<div style="left:9px;top:178px;width:1px;height:178px;background:#fff"></div>
<div style="left:10px;top:178px;width:1779px;height:178px;background:#f0f0f0"></div>
<div style="left:10px;top:178px;width:54px;height:23px;background:#f0f0f0;border-right:1px solid #5a5a5a;border-bottom:1px solid #5a5a5a;box-shadow:inset 1px 1px 0 #fff,inset -1px -1px 0 #a8a8a8;"></div>
<div class="t" style="left:10px;top:182px;height:16px;line-height:16px;font-size:12px;color:#000;font-weight:bold;width:53px;text-align:center;letter-spacing:-0.35px;">Color</div>
<div style="left:64px;top:178px;width:211px;height:23px;background:#f0c8c8;border-right:1px solid #5a5a5a;border-bottom:1px solid #5a5a5a;box-shadow:inset 1px 1px 0 #fff,inset -1px -1px 0 #a8a8a8;"></div>
<div class="t" style="left:64px;top:182px;height:16px;line-height:16px;font-size:12px;color:#000;font-weight:bold;width:210px;text-align:center;letter-spacing:-0.35px;">Red</div>
<div style="left:275px;top:178px;width:213px;height:23px;background:#c4eec4;border-right:1px solid #5a5a5a;border-bottom:1px solid #5a5a5a;box-shadow:inset 1px 1px 0 #fff,inset -1px -1px 0 #a8a8a8;"></div>
<div class="t" style="left:275px;top:182px;height:16px;line-height:16px;font-size:12px;color:#000;font-weight:bold;width:212px;text-align:center;letter-spacing:-0.35px;">Green</div>
<div style="left:488px;top:178px;width:210px;height:23px;background:#c8c8ee;border-right:1px solid #5a5a5a;border-bottom:1px solid #5a5a5a;box-shadow:inset 1px 1px 0 #fff,inset -1px -1px 0 #a8a8a8;"></div>
<div class="t" style="left:488px;top:182px;height:16px;line-height:16px;font-size:12px;color:#000;font-weight:bold;width:209px;text-align:center;letter-spacing:-0.35px;">Blue</div>
<div style="left:698px;top:178px;width:214px;height:23px;background:#eeeec4;border-right:1px solid #5a5a5a;border-bottom:1px solid #5a5a5a;box-shadow:inset 1px 1px 0 #fff,inset -1px -1px 0 #a8a8a8;"></div>
<div class="t" style="left:698px;top:182px;height:16px;line-height:16px;font-size:12px;color:#000;font-weight:bold;width:213px;text-align:center;letter-spacing:-0.35px;">Yellow</div>
<div style="left:912px;top:178px;width:210px;height:23px;background:#c4eeee;border-right:1px solid #5a5a5a;border-bottom:1px solid #5a5a5a;box-shadow:inset 1px 1px 0 #fff,inset -1px -1px 0 #a8a8a8;"></div>
<div class="t" style="left:912px;top:182px;height:16px;line-height:16px;font-size:12px;color:#000;font-weight:bold;width:209px;text-align:center;letter-spacing:-0.35px;">Cyan</div>
<div style="left:1122px;top:178px;width:227px;height:23px;background:#eec8ee;border-right:1px solid #5a5a5a;border-bottom:1px solid #5a5a5a;box-shadow:inset 1px 1px 0 #fff,inset -1px -1px 0 #a8a8a8;"></div>
<div class="t" style="left:1122px;top:182px;height:16px;line-height:16px;font-size:12px;color:#000;font-weight:bold;width:226px;text-align:center;letter-spacing:-0.35px;">Magenta</div>
<div style="left:1349px;top:178px;width:212px;height:23px;background:#f0f0f0;border-right:1px solid #5a5a5a;border-bottom:1px solid #5a5a5a;box-shadow:inset 1px 1px 0 #fff,inset -1px -1px 0 #a8a8a8;"></div>
<div class="t" style="left:1349px;top:182px;height:16px;line-height:16px;font-size:12px;color:#000;font-weight:bold;width:211px;text-align:center;letter-spacing:-0.35px;">White</div>
<div style="left:1561px;top:178px;width:210px;height:23px;background:#f0f0f0;border-right:1px solid #5a5a5a;border-bottom:1px solid #5a5a5a;box-shadow:inset 1px 1px 0 #fff,inset -1px -1px 0 #a8a8a8;"></div>
<div class="t" style="left:1561px;top:182px;height:16px;line-height:16px;font-size:12px;color:#000;font-weight:bold;width:209px;text-align:center;letter-spacing:-0.35px;">Black</div>
<div style="left:10px;top:201px;width:54px;height:25px;background:#f0f0f0;border-right:1px solid #5a5a5a;border-bottom:1px solid #5a5a5a;box-shadow:inset 1px 1px 0 #fff,inset -1px -1px 0 #a8a8a8;"></div>
<div class="t" style="left:10px;top:205px;height:16px;line-height:16px;font-size:12px;color:#000;font-weight:bold;width:53px;text-align:center;letter-spacing:-0.35px;">x</div>
<div style="left:64px;top:201px;width:211px;height:25px;background:#fff;border-right:1px solid #c0c0c0;border-bottom:1px solid #c0c0c0"></div>
<div class="t" style="left:64px;top:206px;height:16px;line-height:16px;font-size:12px;color:#000;width:209px;text-align:right;letter-spacing:-0.45px;">0.7030</div>
<div style="left:275px;top:201px;width:213px;height:25px;background:#fff;border-right:1px solid #c0c0c0;border-bottom:1px solid #c0c0c0"></div>
<div class="t" style="left:275px;top:206px;height:16px;line-height:16px;font-size:12px;color:#000;width:211px;text-align:right;letter-spacing:-0.45px;">0.2400</div>
<div style="left:488px;top:201px;width:210px;height:25px;background:#fff;border-right:1px solid #c0c0c0;border-bottom:1px solid #c0c0c0"></div>
<div class="t" style="left:488px;top:206px;height:16px;line-height:16px;font-size:12px;color:#000;width:208px;text-align:right;letter-spacing:-0.45px;">0.1440</div>
<div style="left:698px;top:201px;width:214px;height:25px;background:#fff;border-right:1px solid #c0c0c0;border-bottom:1px solid #c0c0c0"></div>
<div class="t" style="left:698px;top:206px;height:16px;line-height:16px;font-size:12px;color:#000;width:212px;text-align:right;letter-spacing:-0.45px;">0.4551</div>
<div style="left:912px;top:201px;width:210px;height:25px;background:#fff;border-right:1px solid #c0c0c0;border-bottom:1px solid #c0c0c0"></div>
<div class="t" style="left:912px;top:206px;height:16px;line-height:16px;font-size:12px;color:#000;width:208px;text-align:right;letter-spacing:-0.45px;">0.1855</div>
<div style="left:1122px;top:201px;width:227px;height:25px;background:#fff;border-right:1px solid #c0c0c0;border-bottom:1px solid #c0c0c0"></div>
<div class="t" style="left:1122px;top:206px;height:16px;line-height:16px;font-size:12px;color:#000;width:225px;text-align:right;letter-spacing:-0.45px;">0.3731</div>
<div style="left:1349px;top:201px;width:212px;height:25px;background:#fff;border-right:1px solid #c0c0c0;border-bottom:1px solid #c0c0c0"></div>
<div class="t" style="left:1349px;top:206px;height:16px;line-height:16px;font-size:12px;color:#000;width:210px;text-align:right;letter-spacing:-0.45px;">0.3181</div>
<div style="left:1561px;top:201px;width:210px;height:25px;background:#fff;border-right:1px solid #c0c0c0;border-bottom:1px solid #c0c0c0"></div>
<div class="t" style="left:1561px;top:206px;height:16px;line-height:16px;font-size:12px;color:#000;width:208px;text-align:right;letter-spacing:-0.45px;">0.3333</div>
<div style="left:10px;top:226px;width:54px;height:25px;background:#f0f0f0;border-right:1px solid #5a5a5a;border-bottom:1px solid #5a5a5a;box-shadow:inset 1px 1px 0 #fff,inset -1px -1px 0 #a8a8a8;"></div>
<div class="t" style="left:10px;top:230px;height:16px;line-height:16px;font-size:12px;color:#000;font-weight:bold;width:53px;text-align:center;letter-spacing:-0.35px;">y</div>
<div style="left:64px;top:226px;width:211px;height:25px;background:#fff;border-right:1px solid #c0c0c0;border-bottom:1px solid #c0c0c0"></div>
<div class="t" style="left:64px;top:231px;height:16px;line-height:16px;font-size:12px;color:#000;width:209px;text-align:right;letter-spacing:-0.45px;">0.2955</div>
<div style="left:275px;top:226px;width:213px;height:25px;background:#fff;border-right:1px solid #c0c0c0;border-bottom:1px solid #c0c0c0"></div>
<div class="t" style="left:275px;top:231px;height:16px;line-height:16px;font-size:12px;color:#000;width:211px;text-align:right;letter-spacing:-0.45px;">0.7302</div>
<div style="left:488px;top:226px;width:210px;height:25px;background:#fff;border-right:1px solid #c0c0c0;border-bottom:1px solid #c0c0c0"></div>
<div class="t" style="left:488px;top:231px;height:16px;line-height:16px;font-size:12px;color:#000;width:208px;text-align:right;letter-spacing:-0.45px;">0.0530</div>
<div style="left:698px;top:226px;width:214px;height:25px;background:#fff;border-right:1px solid #c0c0c0;border-bottom:1px solid #c0c0c0"></div>
<div class="t" style="left:698px;top:231px;height:16px;line-height:16px;font-size:12px;color:#000;width:212px;text-align:right;letter-spacing:-0.45px;">0.5283</div>
<div style="left:912px;top:226px;width:210px;height:25px;background:#fff;border-right:1px solid #c0c0c0;border-bottom:1px solid #c0c0c0"></div>
<div class="t" style="left:912px;top:231px;height:16px;line-height:16px;font-size:12px;color:#000;width:208px;text-align:right;letter-spacing:-0.45px;">0.3473</div>
<div style="left:1122px;top:226px;width:227px;height:25px;background:#fff;border-right:1px solid #c0c0c0;border-bottom:1px solid #c0c0c0"></div>
<div class="t" style="left:1122px;top:231px;height:16px;line-height:16px;font-size:12px;color:#000;width:225px;text-align:right;letter-spacing:-0.45px;">0.1493</div>
<div style="left:1349px;top:226px;width:212px;height:25px;background:#fff;border-right:1px solid #c0c0c0;border-bottom:1px solid #c0c0c0"></div>
<div class="t" style="left:1349px;top:231px;height:16px;line-height:16px;font-size:12px;color:#000;width:210px;text-align:right;letter-spacing:-0.45px;">0.3318</div>
<div style="left:1561px;top:226px;width:210px;height:25px;background:#fff;border-right:1px solid #c0c0c0;border-bottom:1px solid #c0c0c0"></div>
<div class="t" style="left:1561px;top:231px;height:16px;line-height:16px;font-size:12px;color:#000;width:208px;text-align:right;letter-spacing:-0.45px;">0.3333</div>
<div style="left:10px;top:251px;width:54px;height:25px;background:#f0f0f0;border-right:1px solid #5a5a5a;border-bottom:1px solid #5a5a5a;box-shadow:inset 1px 1px 0 #fff,inset -1px -1px 0 #a8a8a8;"></div>
<div class="t" style="left:10px;top:255px;height:16px;line-height:16px;font-size:12px;color:#000;font-weight:bold;width:53px;text-align:center;letter-spacing:-0.35px;">Y</div>
<div style="left:64px;top:251px;width:211px;height:25px;background:#fff;border-right:1px solid #c0c0c0;border-bottom:1px solid #c0c0c0"></div>
<div class="t" style="left:64px;top:256px;height:16px;line-height:16px;font-size:12px;color:#000;width:209px;text-align:right;letter-spacing:-0.45px;">22.056</div>
<div style="left:275px;top:251px;width:213px;height:25px;background:#fff;border-right:1px solid #c0c0c0;border-bottom:1px solid #c0c0c0"></div>
<div class="t" style="left:275px;top:256px;height:16px;line-height:16px;font-size:12px;color:#000;width:211px;text-align:right;letter-spacing:-0.45px;">56.292</div>
<div style="left:488px;top:251px;width:210px;height:25px;background:#fff;border-right:1px solid #c0c0c0;border-bottom:1px solid #c0c0c0"></div>
<div class="t" style="left:488px;top:256px;height:16px;line-height:16px;font-size:12px;color:#000;width:208px;text-align:right;letter-spacing:-0.45px;">4.960</div>
<div style="left:698px;top:251px;width:214px;height:25px;background:#fff;border-right:1px solid #c0c0c0;border-bottom:1px solid #c0c0c0"></div>
<div class="t" style="left:698px;top:256px;height:16px;line-height:16px;font-size:12px;color:#000;width:212px;text-align:right;letter-spacing:-0.45px;">74.231</div>
<div style="left:912px;top:251px;width:210px;height:25px;background:#fff;border-right:1px solid #c0c0c0;border-bottom:1px solid #c0c0c0"></div>
<div class="t" style="left:912px;top:256px;height:16px;line-height:16px;font-size:12px;color:#000;width:208px;text-align:right;letter-spacing:-0.45px;">60.236</div>
<div style="left:1122px;top:251px;width:227px;height:25px;background:#fff;border-right:1px solid #c0c0c0;border-bottom:1px solid #c0c0c0"></div>
<div class="t" style="left:1122px;top:256px;height:16px;line-height:16px;font-size:12px;color:#000;width:225px;text-align:right;letter-spacing:-0.45px;">25.012</div>
<div style="left:1349px;top:251px;width:212px;height:25px;background:#fff;border-right:1px solid #c0c0c0;border-bottom:1px solid #c0c0c0"></div>
<div class="t" style="left:1349px;top:256px;height:16px;line-height:16px;font-size:12px;color:#000;width:210px;text-align:right;letter-spacing:-0.45px;">79.552</div>
<div style="left:1561px;top:251px;width:210px;height:25px;background:#fff;border-right:1px solid #c0c0c0;border-bottom:1px solid #c0c0c0"></div>
<div class="t" style="left:1561px;top:256px;height:16px;line-height:16px;font-size:12px;color:#000;width:208px;text-align:right;letter-spacing:-0.45px;">0.000</div>
<div style="left:10px;top:276px;width:54px;height:25px;background:#f0f0f0;border-right:1px solid #5a5a5a;border-bottom:1px solid #5a5a5a;box-shadow:inset 1px 1px 0 #fff,inset -1px -1px 0 #a8a8a8;"></div>
<div class="t" style="left:10px;top:280px;height:16px;line-height:16px;font-size:12px;color:#000;font-weight:bold;width:53px;text-align:center;letter-spacing:-0.35px;">Delta E</div>
<div style="left:64px;top:276px;width:211px;height:25px;background:#ffaaaa;border-right:1px solid #c0c0c0;border-bottom:1px solid #c0c0c0"></div>
<div class="t" style="left:64px;top:281px;height:16px;line-height:16px;font-size:12px;color:#000;font-weight:bold;width:209px;text-align:right;letter-spacing:-0.3px;">4.6</div>
<div style="left:275px;top:276px;width:213px;height:25px;background:#ffaaaa;border-right:1px solid #c0c0c0;border-bottom:1px solid #c0c0c0"></div>
<div class="t" style="left:275px;top:281px;height:16px;line-height:16px;font-size:12px;color:#000;font-weight:bold;width:211px;text-align:right;letter-spacing:-0.3px;">3.8</div>
<div style="left:488px;top:276px;width:210px;height:25px;background:#ffaaaa;border-right:1px solid #c0c0c0;border-bottom:1px solid #c0c0c0"></div>
<div class="t" style="left:488px;top:281px;height:16px;line-height:16px;font-size:12px;color:#000;font-weight:bold;width:208px;text-align:right;letter-spacing:-0.3px;">5.8</div>
<div style="left:698px;top:276px;width:214px;height:25px;background:#ffaaaa;border-right:1px solid #c0c0c0;border-bottom:1px solid #c0c0c0"></div>
<div class="t" style="left:698px;top:281px;height:16px;line-height:16px;font-size:12px;color:#000;font-weight:bold;width:212px;text-align:right;letter-spacing:-0.3px;">5.7</div>
<div style="left:912px;top:276px;width:210px;height:25px;background:#ffaaaa;border-right:1px solid #c0c0c0;border-bottom:1px solid #c0c0c0"></div>
<div class="t" style="left:912px;top:281px;height:16px;line-height:16px;font-size:12px;color:#000;font-weight:bold;width:208px;text-align:right;letter-spacing:-0.3px;">5.6</div>
<div style="left:1122px;top:276px;width:227px;height:25px;background:#ffaaaa;border-right:1px solid #c0c0c0;border-bottom:1px solid #c0c0c0"></div>
<div class="t" style="left:1122px;top:281px;height:16px;line-height:16px;font-size:12px;color:#000;font-weight:bold;width:225px;text-align:right;letter-spacing:-0.3px;">4.9</div>
<div style="left:1349px;top:276px;width:212px;height:25px;background:#ffaaaa;border-right:1px solid #c0c0c0;border-bottom:1px solid #c0c0c0"></div>
<div class="t" style="left:1349px;top:281px;height:16px;line-height:16px;font-size:12px;color:#000;font-weight:bold;width:210px;text-align:right;letter-spacing:-0.3px;">4.3</div>
<div style="left:1561px;top:276px;width:210px;height:25px;background:#e0e0e0;border-right:1px solid #c0c0c0;border-bottom:1px solid #c0c0c0"></div>
<div style="left:10px;top:301px;width:54px;height:25px;background:#f0f0f0;border-right:1px solid #5a5a5a;border-bottom:1px solid #5a5a5a;box-shadow:inset 1px 1px 0 #fff,inset -1px -1px 0 #a8a8a8;"></div>
<div class="t" style="left:10px;top:305px;height:16px;line-height:16px;font-size:12px;color:#000;font-weight:bold;width:53px;text-align:center;letter-spacing:-0.35px;">delta xy</div>
<div style="left:64px;top:301px;width:211px;height:25px;background:#f0f0f0;border-right:1px solid #c0c0c0;border-bottom:1px solid #c0c0c0"></div>
<div class="t" style="left:64px;top:306px;height:16px;line-height:16px;font-size:12px;color:#000;width:209px;text-align:right;letter-spacing:-0.45px;">0.0341</div>
<div style="left:275px;top:301px;width:213px;height:25px;background:#f0f0f0;border-right:1px solid #c0c0c0;border-bottom:1px solid #c0c0c0"></div>
<div class="t" style="left:275px;top:306px;height:16px;line-height:16px;font-size:12px;color:#000;width:211px;text-align:right;letter-spacing:-0.45px;">0.0461</div>
<div style="left:488px;top:301px;width:210px;height:25px;background:#f0f0f0;border-right:1px solid #c0c0c0;border-bottom:1px solid #c0c0c0"></div>
<div class="t" style="left:488px;top:306px;height:16px;line-height:16px;font-size:12px;color:#000;width:208px;text-align:right;letter-spacing:-0.45px;">0.0094</div>
<div style="left:698px;top:301px;width:214px;height:25px;background:#f0f0f0;border-right:1px solid #c0c0c0;border-bottom:1px solid #c0c0c0"></div>
<div class="t" style="left:698px;top:306px;height:16px;line-height:16px;font-size:12px;color:#000;width:212px;text-align:right;letter-spacing:-0.45px;">0.0205</div>
<div style="left:912px;top:301px;width:210px;height:25px;background:#f0f0f0;border-right:1px solid #c0c0c0;border-bottom:1px solid #c0c0c0"></div>
<div class="t" style="left:912px;top:306px;height:16px;line-height:16px;font-size:12px;color:#000;width:208px;text-align:right;letter-spacing:-0.45px;">0.0206</div>
<div style="left:1122px;top:301px;width:227px;height:25px;background:#f0f0f0;border-right:1px solid #c0c0c0;border-bottom:1px solid #c0c0c0"></div>
<div class="t" style="left:1122px;top:306px;height:16px;line-height:16px;font-size:12px;color:#000;width:225px;text-align:right;letter-spacing:-0.45px;">0.0404</div>
<div style="left:1349px;top:301px;width:212px;height:25px;background:#f0f0f0;border-right:1px solid #c0c0c0;border-bottom:1px solid #c0c0c0"></div>
<div class="t" style="left:1349px;top:306px;height:16px;line-height:16px;font-size:12px;color:#000;width:210px;text-align:right;letter-spacing:-0.45px;">0.0061</div>
<div style="left:1561px;top:301px;width:210px;height:25px;background:#f0f0f0;border-right:1px solid #c0c0c0;border-bottom:1px solid #c0c0c0"></div>
<div style="left:10px;top:326px;width:54px;height:25px;background:#f0f0f0;border-right:1px solid #5a5a5a;border-bottom:1px solid #5a5a5a;box-shadow:inset 1px 1px 0 #fff,inset -1px -1px 0 #a8a8a8;"></div>
<div class="t" style="left:10px;top:330px;height:16px;line-height:16px;font-size:12px;color:#000;font-weight:bold;width:53px;text-align:center;letter-spacing:-0.35px;">delta L</div>
<div style="left:64px;top:326px;width:211px;height:25px;background:#e0e0e0;border-right:1px solid #c0c0c0;border-bottom:1px solid #c0c0c0"></div>
<div class="t" style="left:64px;top:331px;height:16px;line-height:16px;font-size:12px;color:#000;width:209px;text-align:right;letter-spacing:-0.45px;">+2.0 %</div>
<div style="left:275px;top:326px;width:213px;height:25px;background:#e0e0e0;border-right:1px solid #c0c0c0;border-bottom:1px solid #c0c0c0"></div>
<div class="t" style="left:275px;top:331px;height:16px;line-height:16px;font-size:12px;color:#000;width:211px;text-align:right;letter-spacing:-0.45px;">-14.9 %</div>
<div style="left:488px;top:326px;width:210px;height:25px;background:#e0e0e0;border-right:1px solid #c0c0c0;border-bottom:1px solid #c0c0c0"></div>
<div class="t" style="left:488px;top:331px;height:16px;line-height:16px;font-size:12px;color:#000;width:208px;text-align:right;letter-spacing:-0.45px;">-35.0 %</div>
<div style="left:698px;top:326px;width:214px;height:25px;background:#e0e0e0;border-right:1px solid #c0c0c0;border-bottom:1px solid #c0c0c0"></div>
<div class="t" style="left:698px;top:331px;height:16px;line-height:16px;font-size:12px;color:#000;width:212px;text-align:right;letter-spacing:-0.45px;">-15.4 %</div>
<div style="left:912px;top:326px;width:210px;height:25px;background:#e0e0e0;border-right:1px solid #c0c0c0;border-bottom:1px solid #c0c0c0"></div>
<div class="t" style="left:912px;top:331px;height:16px;line-height:16px;font-size:12px;color:#000;width:208px;text-align:right;letter-spacing:-0.45px;">-17.3 %</div>
<div style="left:1122px;top:326px;width:227px;height:25px;background:#e0e0e0;border-right:1px solid #c0c0c0;border-bottom:1px solid #c0c0c0"></div>
<div class="t" style="left:1122px;top:331px;height:16px;line-height:16px;font-size:12px;color:#000;width:225px;text-align:right;letter-spacing:-0.45px;">-14.0 %</div>
<div style="left:1349px;top:326px;width:212px;height:25px;background:#e0e0e0;border-right:1px solid #c0c0c0;border-bottom:1px solid #c0c0c0"></div>
<div class="t" style="left:1349px;top:331px;height:16px;line-height:16px;font-size:12px;color:#000;width:210px;text-align:right;letter-spacing:-0.45px;">-13.8 %</div>
<div style="left:1561px;top:326px;width:210px;height:25px;background:#e0e0e0;border-right:1px solid #c0c0c0;border-bottom:1px solid #c0c0c0"></div>
<div style="left:10px;top:351px;width:54px;height:5px;background:#f0f0f0;border-right:1px solid #5a5a5a;box-shadow:inset 1px 1px 0 #fff"></div>
<div style="left:64px;top:351px;width:211px;height:5px;background:#f0f0f0;border-right:1px solid #c0c0c0"></div>
<div style="left:275px;top:351px;width:213px;height:5px;background:#f0f0f0;border-right:1px solid #c0c0c0"></div>
<div style="left:488px;top:351px;width:210px;height:5px;background:#f0f0f0;border-right:1px solid #c0c0c0"></div>
<div style="left:698px;top:351px;width:214px;height:5px;background:#f0f0f0;border-right:1px solid #c0c0c0"></div>
<div style="left:912px;top:351px;width:210px;height:5px;background:#f0f0f0;border-right:1px solid #c0c0c0"></div>
<div style="left:1122px;top:351px;width:227px;height:5px;background:#f0f0f0;border-right:1px solid #c0c0c0"></div>
<div style="left:1349px;top:351px;width:212px;height:5px;background:#f0f0f0;border-right:1px solid #c0c0c0"></div>
<div style="left:1561px;top:351px;width:210px;height:5px;background:#f0f0f0;border-right:1px solid #c0c0c0"></div>
<div style="left:1771px;top:178px;width:18px;height:178px;background:#f0f0f0"></div>
<div style="left:1779px;top:195px;width:2px;height:142px;background:#8c8c8c"></div>
<div style="left:10px;top:355px;width:1779px;height:1px;background:#fff"></div>
<div style="left:10px;top:356px;width:1779px;height:17px;background:#f0f0f0"></div>
<svg style="left:14px;top:359px" width="8" height="10"><path d="M7 0v10l-7-5z" fill="#a3a3a3"/></svg>
<svg style="left:1760px;top:359px" width="8" height="10"><path d="M0 0v10l7-5z" fill="#a3a3a3"/></svg>
<div style="left:1815px;top:163px;width:81px;height:98px;background:#ececec;border:1px solid #7c7c7c;box-shadow:inset 0 0 0 1px #c4c4c4"></div>
<div style="left:1816px;top:164px;width:79px;height:16px;background:linear-gradient(90deg,#e2e9f5,#e9eff8 60%,#e4ebf6);border-radius:7px 7px 0 0;box-shadow:inset 0 1px 0 #f4f7fc"></div>
<div style="left:1816px;top:180px;width:79px;height:1px;background:#a6a6a6"></div>
<div class="t" style="left:1822px;top:166px;height:15px;line-height:15px;font-size:12px;color:#3c3c3c;font-weight:bold;letter-spacing:0.473px;">Display</div>
<div style="left:1823px;top:181px;width:12px;height:12px;border-radius:50%;background:#f4f4f4;border:1px solid #8a8a8a;border-right-color:#e8e8e8;border-bottom-color:#e8e8e8;box-shadow:inset 1px 1px 0 #c0c0c0"></div>
<div class="t" style="left:1842px;top:180px;height:16px;line-height:16px;font-size:13px;color:#a8a8a8;letter-spacing:0.301px;text-shadow:1px 1px 0 #fff;">Sensor</div>
<div style="left:1823px;top:197px;width:12px;height:12px;border-radius:50%;background:#fff;border:1px solid #8a8a8a;border-right-color:#e8e8e8;border-bottom-color:#e8e8e8;box-shadow:inset 1px 1px 0 #505050"></div>
<div class="t" style="left:1842px;top:196px;height:16px;line-height:16px;font-size:13px;color:#000;letter-spacing:-1.057px;">RGB</div>
<div style="left:1823px;top:213px;width:12px;height:12px;border-radius:50%;background:#fff;border:1px solid #8a8a8a;border-right-color:#e8e8e8;border-bottom-color:#e8e8e8;box-shadow:inset 1px 1px 0 #505050"></div>
<div class="t" style="left:1842px;top:212px;height:16px;line-height:16px;font-size:13px;color:#000;letter-spacing:-0.761px;">XYZ</div>
<div style="left:1823px;top:229px;width:12px;height:12px;border-radius:50%;background:#fff;border:1px solid #8a8a8a;border-right-color:#e8e8e8;border-bottom-color:#e8e8e8;box-shadow:inset 1px 1px 0 #505050"></div>
<div class="t" style="left:1842px;top:228px;height:16px;line-height:16px;font-size:13px;color:#000;letter-spacing:0.5px;">xyz</div>
<div style="left:1823px;top:245px;width:12px;height:12px;border-radius:50%;background:#fff;border:1px solid #8a8a8a;border-right-color:#e8e8e8;border-bottom-color:#e8e8e8;box-shadow:inset 1px 1px 0 #505050"></div>
<div style="left:1827px;top:249px;width:4px;height:4px;border-radius:50%;background:#000"></div>
<div class="t" style="left:1842px;top:244px;height:16px;line-height:16px;font-size:13px;color:#000;letter-spacing:-0.224px;">xyY</div>
<div style="left:1811px;top:262px;width:86px;height:117px;background:#8e8e8e"></div>
<div style="left:1813px;top:264px;width:82px;height:30px;background:#ececec;border:1px solid #fff;border-right-color:#9a9a9a;border-bottom-color:#9a9a9a;"></div>
<div style="left:1813px;top:294px;width:82px;height:30px;background:#ececec;border:1px solid #fff;border-right-color:#9a9a9a;border-bottom-color:#9a9a9a;"></div>
<div style="left:1813px;top:324px;width:82px;height:30px;background:#ececec;border:1px solid #fff;border-right-color:#9a9a9a;border-bottom-color:#9a9a9a;"></div>
<div class="t" style="left:1863px;top:273px;height:16px;line-height:16px;font-size:13px;color:#000;letter-spacing:-0.171px;">Go</div>
<div class="t" style="left:1851px;top:303px;height:16px;line-height:16px;font-size:13px;color:#000;letter-spacing:0.57px;">Delete</div>
<div class="t" style="left:1858px;top:332px;height:16px;line-height:16px;font-size:13px;color:#000;letter-spacing:0.067px;">Refs</div>
<svg style="left:1817px;top:265px" width="34" height="28" viewBox="0 0 34 28"><circle cx="6.5" cy="21.5" r="6" fill="url(#bRed)"/><circle cx="14" cy="20.5" r="6.2" fill="url(#bBl2)"/><circle cx="20.5" cy="16" r="5.5" fill="url(#bGrn)"/><circle cx="27" cy="14.5" r="4.2" fill="url(#bCya)"/><circle cx="21" cy="3.5" r="4" fill="url(#bYel)"/><circle cx="27" cy="7.5" r="4.4" fill="url(#bMag)"/></svg>
<svg style="left:1818px;top:295px" width="30" height="28" viewBox="0 0 30 28"><defs><linearGradient id="bin" x1="0" x2="1"><stop offset="0" stop-color="#6cc4f4"/><stop offset=".5" stop-color="#c8ecfc"/><stop offset="1" stop-color="#58b0e8"/></linearGradient></defs><path d="M1 5l27-4-3 22c-2 3.500-14 5-19 1z" fill="url(#bin)" stroke="#4898d0" stroke-width=".7"/><ellipse cx="15.500" cy="22" rx="9" ry="2.800" fill="#e0f4fc" opacity=".8"/><path d="M14.500 10.500c3.500-3 7-1 7.500 1l1.800-.4-2.400 4.400-3.800-3 1.800-.4c-.8-1.200-2.600-1.600-4.900.4zM23 17c-3 3.500-7 2.600-8 0l-1.800.6 2-4.600 4 2.800-1.800.6c1 1.400 3.200 1.400 5.600-1.400z" fill="#18a030"/></svg>
<svg style="left:1818px;top:328px" width="33" height="23" viewBox="0 0 33 22"><rect x="0" y="14" width="4" height="8" fill="#0000c0"/><rect x="2" y="10" width="4" height="12" fill="#e000e0"/><rect x="5" y="4" width="4" height="18" fill="#0000ff"/><rect x="7" y="2" width="4" height="20" fill="#0000ff"/><rect x="9" y="8" width="4" height="14" fill="#00e8e8"/><rect x="11.5" y="10" width="4" height="12" fill="#00d000"/><rect x="15" y="1" width="4" height="21" fill="#f0f000"/><rect x="18" y="0" width="4" height="22" fill="#f0f000"/><rect x="21.5" y="3" width="4" height="19" fill="#800000"/><rect x="25" y="8" width="4" height="14" fill="#ff0000"/><rect x="28.5" y="9" width="4" height="13" fill="#ff0000"/><path d="M0 14l2-3 3-5 2-3 2 4 2.500 3 2.500-3 2-6 2-2 3 3 1 0 2.500 5 3 1 3 1" stroke="#f0e000" stroke-width="1.400" fill="none"/></svg>
<div style="left:1818px;top:358px;width:56px;height:18px;background:#f0f0f0"></div>
<div style="left:1819px;top:360px;width:13px;height:13px;background:#fff;border:1px solid #6a6a6a;border-right-color:#e4e4e4;border-bottom-color:#e4e4e4;box-shadow:inset 1px 1px 0 #a0a0a0"></div>
<div class="t" style="left:1837px;top:359px;height:16px;line-height:16px;font-size:13px;color:#000;letter-spacing:0.4px;">Edit</div>
<div style="left:384px;top:384px;width:1px;height:634px;background:#b4b4b4"></div>
<div style="left:385px;top:384px;width:3px;height:634px;background:#787878"></div>
<div style="left:0px;top:1017px;width:1901px;height:2px;background:#808080"></div>
<div style="left:0px;top:1019px;width:1901px;height:3px;background:#b4b4b4"></div>
<div style="left:0px;top:1023px;width:1920px;height:19px;background:#f0f0f0"></div>
<div style="left:18px;top:1030px;width:1827px;height:2px;background:#858585"></div>
<div style="left:0px;top:1040px;width:1920px;height:2px;background:#fff"></div>
<div style="left:5px;top:387px;width:378px;height:629px;background:#ececec;border:1px solid #7c7c7c;box-shadow:inset 0 0 0 1px #c4c4c4"></div>
<div style="left:6px;top:388px;width:376px;height:17px;background:linear-gradient(90deg,#e2e9f5,#e9eff8 60%,#e4ebf6);border-radius:7px 7px 0 0;box-shadow:inset 0 1px 0 #f4f7fc"></div>
<div style="left:6px;top:405px;width:376px;height:1px;background:#a6a6a6"></div>
<div class="t" style="left:12px;top:390px;height:15px;line-height:15px;font-size:12px;color:#3c3c3c;font-weight:bold;letter-spacing:0.783px;">Selected color</div>
<div style="left:15px;top:409px;width:113px;height:14px;background:#f0f0f0"></div>
<div class="t" style="left:18px;top:408px;height:16px;line-height:16px;font-size:13px;color:#000;letter-spacing:-0.036px;">RGB Levels</div>
<div style="left:230px;top:408px;width:128px;height:14px;background:#f0f0f0"></div>
<div class="t" style="left:241px;top:407px;height:16px;line-height:16px;font-size:13px;color:#000;letter-spacing:0.564px;">Current Measure</div>
<div style="left:14px;top:433px;width:201px;height:87px;background:#f0f0f0"></div>
<svg style="left:14px;top:433px" width="201" height="87" viewBox="0 0 201 87"><path d="M0 44.500h201" stroke="#505050" stroke-width="1" stroke-dasharray="2 2"/><path d="M1 82C9 78 15 75.500 25 75.500S41 78 49 82z" fill="#a00000" stroke="#202020" stroke-width=".8"/><path d="M52 82C60 78 66 75.500 76 75.500S92 78 100 82z" fill="#008800" stroke="#202020" stroke-width=".8"/><path d="M103 82C111 78 117 75.500 127 75.500S143 78 151 82z" fill="#0000a0" stroke="#202020" stroke-width=".8"/><path d="M154 82C162 78 168 75.500 178 75.500S194 78 202 82z" fill="#b08010" stroke="#202020" stroke-width=".8"/><rect x="0" y="81.500" width="201" height="5.500" fill="#000"/></svg>
<div class="t" style="left:13.5px;top:495px;height:14px;line-height:14px;font-size:11px;color:#202020;font-weight:bold;width:50px;text-align:center;font-family:'Liberation Serif',serif;">0.0%</div>
<div class="t" style="left:64.5px;top:495px;height:14px;line-height:14px;font-size:11px;color:#202020;font-weight:bold;width:50px;text-align:center;font-family:'Liberation Serif',serif;">0.0%</div>
<div class="t" style="left:115.5px;top:495px;height:14px;line-height:14px;font-size:11px;color:#202020;font-weight:bold;width:50px;text-align:center;font-family:'Liberation Serif',serif;">0.0%</div>
<div class="t" style="left:167px;top:495px;height:14px;line-height:14px;font-size:11px;color:#202020;font-weight:bold;width:50px;text-align:center;font-family:'Liberation Serif',serif;">dE 0.0</div>
<div style="left:16px;top:533px;width:192px;height:74px;background:#f0f0f0"></div>
<div class="t" style="left:35px;top:533px;height:16px;line-height:16px;font-size:13px;color:#101010;font-weight:bold;letter-spacing:0.464px;">Measure</div>
<div class="t" style="left:127px;top:533px;height:16px;line-height:16px;font-size:13px;color:#101010;font-weight:bold;letter-spacing:0.348px;">Reference</div>
<div class="t" style="left:18px;top:622px;height:16px;line-height:16px;font-size:13px;color:#000;letter-spacing:0.645px;">Target</div>
<div style="left:50px;top:638px;width:116px;height:89px;background:conic-gradient(from 0deg at 50% 50%,#40ff00 0deg,#8ce800 25deg,#ffc800 52.700deg,#ff6000 65deg,#ff0000 90deg,#ff0040 112deg,#ff0090 127.300deg,#c000b0 150deg,#8000c8 180deg,#3000f0 215deg,#0000ff 232.700deg,#0050d8 255deg,#0080b8 270deg,#00ac98 288deg,#00ff80 307.300deg,#10ff40 335deg,#40ff00 360deg)"></div>
<svg style="left:50px;top:638px" width="116" height="89" viewBox="0 0 116 89"><rect x="17.500" y="14" width="81" height="61.500" rx="8" fill="#000" stroke="#fff" stroke-width="1"/><g stroke="#fff" stroke-width="1" stroke-dasharray="3 2" fill="none"><path d="M58 14v61M15 44.500h86"/><ellipse cx="58" cy="44.500" rx="21" ry="15"/></g></svg>
<div style="left:221px;top:431px;width:135px;height:576px;background:#a0a0a0;border:1px solid #707070;border-right:none;border-bottom:none"></div>
<div style="left:355px;top:432px;width:18px;height:575px;background:#f0f0f0"></div>
<svg style="left:359px;top:437px" width="10" height="8"><path d="M0 7h10l-5-7z" fill="#a8a8a8"/></svg>
<svg style="left:359px;top:995px" width="10" height="8"><path d="M0 0h10l-5 7z" fill="#a8a8a8"/></svg>
<div style="left:221px;top:1007px;width:152px;height:1px;background:#fff"></div>
<div style="left:220px;top:430px;width:153px;height:2px;background:#7e7e7e"></div>
<div style="left:220px;top:430px;width:2px;height:577px;background:#7e7e7e"></div>
<div style="left:223px;top:432px;width:55px;height:23px;background:#f0f0f0;border-right:1px solid #5a5a5a;border-bottom:1px solid #5a5a5a;box-shadow:inset 1px 1px 0 #fff,inset -1px -1px 0 #a8a8a8;"></div>
<div class="t" style="left:223px;top:436px;height:16px;line-height:16px;font-size:12px;color:#000;font-weight:bold;width:54px;text-align:center;letter-spacing:-0.35px;">Y cd/m²</div>
<div style="left:278px;top:432px;width:77px;height:23px;background:#fff;border-right:1px solid #c0c0c0;border-bottom:1px solid #c0c0c0"></div>
<div style="left:223px;top:455px;width:55px;height:23px;background:#f0f0f0;border-right:1px solid #5a5a5a;border-bottom:1px solid #5a5a5a;box-shadow:inset 1px 1px 0 #fff,inset -1px -1px 0 #a8a8a8;"></div>
<div class="t" style="left:223px;top:459px;height:16px;line-height:16px;font-size:12px;color:#000;font-weight:bold;width:54px;text-align:center;letter-spacing:-0.35px;">Y ftL</div>
<div style="left:278px;top:455px;width:77px;height:23px;background:#fff;border-right:1px solid #c0c0c0;border-bottom:1px solid #c0c0c0"></div>
<div style="left:223px;top:478px;width:55px;height:23px;background:#f0f0f0;border-right:1px solid #5a5a5a;border-bottom:1px solid #5a5a5a;box-shadow:inset 1px 1px 0 #fff,inset -1px -1px 0 #a8a8a8;"></div>
<div class="t" style="left:223px;top:482px;height:16px;line-height:16px;font-size:12px;color:#000;font-weight:bold;width:54px;text-align:center;letter-spacing:-0.35px;">T°</div>
<div style="left:278px;top:478px;width:77px;height:23px;background:#fff;border-right:1px solid #c0c0c0;border-bottom:1px solid #c0c0c0"></div>
<div style="left:223px;top:501px;width:55px;height:23px;background:#f0f0f0;border-right:1px solid #5a5a5a;border-bottom:1px solid #5a5a5a;box-shadow:inset 1px 1px 0 #fff,inset -1px -1px 0 #a8a8a8;"></div>
<div class="t" style="left:223px;top:505px;height:16px;line-height:16px;font-size:12px;color:#000;font-weight:bold;width:54px;text-align:center;letter-spacing:-0.35px;">X</div>
<div style="left:278px;top:501px;width:77px;height:23px;background:#e0e0e0;border-right:1px solid #c0c0c0;border-bottom:1px solid #c0c0c0"></div>
<div style="left:223px;top:524px;width:55px;height:23px;background:#f0f0f0;border-right:1px solid #5a5a5a;border-bottom:1px solid #5a5a5a;box-shadow:inset 1px 1px 0 #fff,inset -1px -1px 0 #a8a8a8;"></div>
<div class="t" style="left:223px;top:528px;height:16px;line-height:16px;font-size:12px;color:#000;font-weight:bold;width:54px;text-align:center;letter-spacing:-0.35px;">Y</div>
<div style="left:278px;top:524px;width:77px;height:23px;background:#e0e0e0;border-right:1px solid #c0c0c0;border-bottom:1px solid #c0c0c0"></div>
<div style="left:223px;top:547px;width:55px;height:23px;background:#f0f0f0;border-right:1px solid #5a5a5a;border-bottom:1px solid #5a5a5a;box-shadow:inset 1px 1px 0 #fff,inset -1px -1px 0 #a8a8a8;"></div>
<div class="t" style="left:223px;top:551px;height:16px;line-height:16px;font-size:12px;color:#000;font-weight:bold;width:54px;text-align:center;letter-spacing:-0.35px;">Z</div>
<div style="left:278px;top:547px;width:77px;height:23px;background:#e0e0e0;border-right:1px solid #c0c0c0;border-bottom:1px solid #c0c0c0"></div>
<div style="left:223px;top:570px;width:55px;height:23px;background:#f0f0f0;border-right:1px solid #5a5a5a;border-bottom:1px solid #5a5a5a;box-shadow:inset 1px 1px 0 #fff,inset -1px -1px 0 #a8a8a8;"></div>
<div class="t" style="left:223px;top:574px;height:16px;line-height:16px;font-size:12px;color:#000;font-weight:bold;width:54px;text-align:center;letter-spacing:-0.35px;">R</div>
<div style="left:278px;top:570px;width:77px;height:23px;background:#fff;border-right:1px solid #c0c0c0;border-bottom:1px solid #c0c0c0"></div>
<div style="left:223px;top:593px;width:55px;height:23px;background:#f0f0f0;border-right:1px solid #5a5a5a;border-bottom:1px solid #5a5a5a;box-shadow:inset 1px 1px 0 #fff,inset -1px -1px 0 #a8a8a8;"></div>
<div class="t" style="left:223px;top:597px;height:16px;line-height:16px;font-size:12px;color:#000;font-weight:bold;width:54px;text-align:center;letter-spacing:-0.35px;">G</div>
<div style="left:278px;top:593px;width:77px;height:23px;background:#fff;border-right:1px solid #c0c0c0;border-bottom:1px solid #c0c0c0"></div>
<div style="left:223px;top:616px;width:55px;height:23px;background:#f0f0f0;border-right:1px solid #5a5a5a;border-bottom:1px solid #5a5a5a;box-shadow:inset 1px 1px 0 #fff,inset -1px -1px 0 #a8a8a8;"></div>
<div class="t" style="left:223px;top:620px;height:16px;line-height:16px;font-size:12px;color:#000;font-weight:bold;width:54px;text-align:center;letter-spacing:-0.35px;">B</div>
<div style="left:278px;top:616px;width:77px;height:23px;background:#fff;border-right:1px solid #c0c0c0;border-bottom:1px solid #c0c0c0"></div>
<div style="left:223px;top:639px;width:55px;height:23px;background:#f0f0f0;border-right:1px solid #5a5a5a;border-bottom:1px solid #5a5a5a;box-shadow:inset 1px 1px 0 #fff,inset -1px -1px 0 #a8a8a8;"></div>
<div class="t" style="left:223px;top:643px;height:16px;line-height:16px;font-size:12px;color:#000;font-weight:bold;width:54px;text-align:center;letter-spacing:-0.35px;">x</div>
<div style="left:278px;top:639px;width:77px;height:23px;background:#e0e0e0;border-right:1px solid #c0c0c0;border-bottom:1px solid #c0c0c0"></div>
<div style="left:223px;top:662px;width:55px;height:23px;background:#f0f0f0;border-right:1px solid #5a5a5a;border-bottom:1px solid #5a5a5a;box-shadow:inset 1px 1px 0 #fff,inset -1px -1px 0 #a8a8a8;"></div>
<div class="t" style="left:223px;top:666px;height:16px;line-height:16px;font-size:12px;color:#000;font-weight:bold;width:54px;text-align:center;letter-spacing:-0.35px;">y</div>
<div style="left:278px;top:662px;width:77px;height:23px;background:#e0e0e0;border-right:1px solid #c0c0c0;border-bottom:1px solid #c0c0c0"></div>
<div style="left:223px;top:685px;width:55px;height:23px;background:#f0f0f0;border-right:1px solid #5a5a5a;border-bottom:1px solid #5a5a5a;box-shadow:inset 1px 1px 0 #fff,inset -1px -1px 0 #a8a8a8;"></div>
<div class="t" style="left:223px;top:689px;height:16px;line-height:16px;font-size:12px;color:#000;font-weight:bold;width:54px;text-align:center;letter-spacing:-0.35px;">Y</div>
<div style="left:278px;top:685px;width:77px;height:23px;background:#e0e0e0;border-right:1px solid #c0c0c0;border-bottom:1px solid #c0c0c0"></div>
<div style="left:223px;top:708px;width:55px;height:23px;background:#f0f0f0;border-right:1px solid #5a5a5a;border-bottom:1px solid #5a5a5a;box-shadow:inset 1px 1px 0 #fff,inset -1px -1px 0 #a8a8a8;"></div>
<div class="t" style="left:223px;top:712px;height:16px;line-height:16px;font-size:12px;color:#000;font-weight:bold;width:54px;text-align:center;letter-spacing:-0.35px;">x</div>
<div style="left:278px;top:708px;width:77px;height:23px;background:#fff;border-right:1px solid #c0c0c0;border-bottom:1px solid #c0c0c0"></div>
<div style="left:223px;top:731px;width:55px;height:23px;background:#f0f0f0;border-right:1px solid #5a5a5a;border-bottom:1px solid #5a5a5a;box-shadow:inset 1px 1px 0 #fff,inset -1px -1px 0 #a8a8a8;"></div>
<div class="t" style="left:223px;top:735px;height:16px;line-height:16px;font-size:12px;color:#000;font-weight:bold;width:54px;text-align:center;letter-spacing:-0.35px;">y</div>
<div style="left:278px;top:731px;width:77px;height:23px;background:#fff;border-right:1px solid #c0c0c0;border-bottom:1px solid #c0c0c0"></div>
<div style="left:223px;top:754px;width:55px;height:23px;background:#f0f0f0;border-right:1px solid #5a5a5a;border-bottom:1px solid #5a5a5a;box-shadow:inset 1px 1px 0 #fff,inset -1px -1px 0 #a8a8a8;"></div>
<div class="t" style="left:223px;top:758px;height:16px;line-height:16px;font-size:12px;color:#000;font-weight:bold;width:54px;text-align:center;letter-spacing:-0.35px;">z</div>
<div style="left:278px;top:754px;width:77px;height:23px;background:#fff;border-right:1px solid #c0c0c0;border-bottom:1px solid #c0c0c0"></div>
<div style="left:223px;top:777px;width:55px;height:23px;background:#f0f0f0;border-right:1px solid #5a5a5a;border-bottom:1px solid #5a5a5a;box-shadow:inset 1px 1px 0 #fff,inset -1px -1px 0 #a8a8a8;"></div>
<div class="t" style="left:223px;top:781px;height:16px;line-height:16px;font-size:12px;color:#000;font-weight:bold;width:54px;text-align:center;letter-spacing:-0.35px;">L</div>
<div style="left:278px;top:777px;width:77px;height:23px;background:#e0e0e0;border-right:1px solid #c0c0c0;border-bottom:1px solid #c0c0c0"></div>
<div style="left:223px;top:800px;width:55px;height:23px;background:#f0f0f0;border-right:1px solid #5a5a5a;border-bottom:1px solid #5a5a5a;box-shadow:inset 1px 1px 0 #fff,inset -1px -1px 0 #a8a8a8;"></div>
<div class="t" style="left:223px;top:804px;height:16px;line-height:16px;font-size:12px;color:#000;font-weight:bold;width:54px;text-align:center;letter-spacing:-0.35px;">a</div>
<div style="left:278px;top:800px;width:77px;height:23px;background:#e0e0e0;border-right:1px solid #c0c0c0;border-bottom:1px solid #c0c0c0"></div>
<div style="left:223px;top:823px;width:55px;height:23px;background:#f0f0f0;border-right:1px solid #5a5a5a;border-bottom:1px solid #5a5a5a;box-shadow:inset 1px 1px 0 #fff,inset -1px -1px 0 #a8a8a8;"></div>
<div class="t" style="left:223px;top:827px;height:16px;line-height:16px;font-size:12px;color:#000;font-weight:bold;width:54px;text-align:center;letter-spacing:-0.35px;">b</div>
<div style="left:278px;top:823px;width:77px;height:23px;background:#e0e0e0;border-right:1px solid #c0c0c0;border-bottom:1px solid #c0c0c0"></div>
<div style="left:223px;top:846px;width:55px;height:23px;background:#f0f0f0;border-right:1px solid #5a5a5a;border-bottom:1px solid #5a5a5a;box-shadow:inset 1px 1px 0 #fff,inset -1px -1px 0 #a8a8a8;"></div>
<div class="t" style="left:223px;top:850px;height:16px;line-height:16px;font-size:12px;color:#000;font-weight:bold;width:54px;text-align:center;letter-spacing:-0.35px;">L</div>
<div style="left:278px;top:846px;width:77px;height:23px;background:#fff;border-right:1px solid #c0c0c0;border-bottom:1px solid #c0c0c0"></div>
<div style="left:223px;top:869px;width:55px;height:23px;background:#f0f0f0;border-right:1px solid #5a5a5a;border-bottom:1px solid #5a5a5a;box-shadow:inset 1px 1px 0 #fff,inset -1px -1px 0 #a8a8a8;"></div>
<div class="t" style="left:223px;top:873px;height:16px;line-height:16px;font-size:12px;color:#000;font-weight:bold;width:54px;text-align:center;letter-spacing:-0.35px;">C</div>
<div style="left:278px;top:869px;width:77px;height:23px;background:#fff;border-right:1px solid #c0c0c0;border-bottom:1px solid #c0c0c0"></div>
<div style="left:223px;top:892px;width:55px;height:23px;background:#f0f0f0;border-right:1px solid #5a5a5a;border-bottom:1px solid #5a5a5a;box-shadow:inset 1px 1px 0 #fff,inset -1px -1px 0 #a8a8a8;"></div>
<div class="t" style="left:223px;top:896px;height:16px;line-height:16px;font-size:12px;color:#000;font-weight:bold;width:54px;text-align:center;letter-spacing:-0.35px;">H</div>
<div style="left:278px;top:892px;width:77px;height:23px;background:#fff;border-right:1px solid #c0c0c0;border-bottom:1px solid #c0c0c0"></div>
<div style="left:223px;top:915px;width:55px;height:23px;background:#f0f0f0;border-right:1px solid #5a5a5a;border-bottom:1px solid #5a5a5a;box-shadow:inset 1px 1px 0 #fff,inset -1px -1px 0 #a8a8a8;"></div>
<div class="t" style="left:223px;top:919px;height:16px;line-height:16px;font-size:12px;color:#000;font-weight:bold;width:54px;text-align:center;letter-spacing:-0.35px;">L</div>
<div style="left:278px;top:915px;width:77px;height:23px;background:#e0e0e0;border-right:1px solid #c0c0c0;border-bottom:1px solid #c0c0c0"></div>
<div style="left:223px;top:938px;width:55px;height:23px;background:#f0f0f0;border-right:1px solid #5a5a5a;border-bottom:1px solid #5a5a5a;box-shadow:inset 1px 1px 0 #fff,inset -1px -1px 0 #a8a8a8;"></div>
<div class="t" style="left:223px;top:942px;height:16px;line-height:16px;font-size:12px;color:#000;font-weight:bold;width:54px;text-align:center;letter-spacing:-0.35px;">M</div>
<div style="left:278px;top:938px;width:77px;height:23px;background:#e0e0e0;border-right:1px solid #c0c0c0;border-bottom:1px solid #c0c0c0"></div>
<div style="left:223px;top:961px;width:55px;height:23px;background:#f0f0f0;border-right:1px solid #5a5a5a;border-bottom:1px solid #5a5a5a;box-shadow:inset 1px 1px 0 #fff,inset -1px -1px 0 #a8a8a8;"></div>
<div class="t" style="left:223px;top:965px;height:16px;line-height:16px;font-size:12px;color:#000;font-weight:bold;width:54px;text-align:center;letter-spacing:-0.35px;">S</div>
<div style="left:278px;top:961px;width:77px;height:23px;background:#e0e0e0;border-right:1px solid #c0c0c0;border-bottom:1px solid #c0c0c0"></div>
<div style="left:391px;top:387px;width:1505px;height:629px;background:#ececec;border:1px solid #7c7c7c;box-shadow:inset 0 0 0 1px #c4c4c4"></div>
<div style="left:392px;top:388px;width:1503px;height:17px;background:linear-gradient(90deg,#e2e9f5,#e9eff8 60%,#e4ebf6);border-radius:7px 7px 0 0;box-shadow:inset 0 1px 0 #f4f7fc"></div>
<div style="left:392px;top:405px;width:1503px;height:1px;background:#a6a6a6"></div>
<div class="t" style="left:398px;top:390px;height:15px;line-height:15px;font-size:12px;color:#3c3c3c;font-weight:bold;letter-spacing:1.0px;">Information</div>
<div style="left:396px;top:409px;width:302px;height:23px;background:#fff;border:1px solid #828282;border-right-color:#e8e8e8;border-bottom-color:#e8e8e8;box-shadow:inset 1px 1px 0 #5a5a5a"></div>
<div style="left:400px;top:413px;width:280px;height:17px;background:#0078d7"></div>
<div class="t" style="left:401px;top:414px;height:16px;line-height:16px;font-size:13px;color:#fff;letter-spacing:0.554px;">Target - CIE</div>
<div style="left:680px;top:411px;width:16px;height:19px;background:#ececec;border:1px solid #fff;border-right-color:#6a6a6a;border-bottom-color:#6a6a6a;box-shadow:inset -1px -1px 0 #a8a8a8"></div>
<svg style="left:684px;top:419px" width="8" height="4"><path d="M0 0h7l-3.500 4z" fill="#000"/></svg>
<div style="left:398px;top:439px;width:748px;height:570px;background:#000"></div>
<div style="left:399px;top:440px;width:746px;height:568px;background:conic-gradient(from 0deg at 50% 50%,#40ff00 0deg,#8ce800 25deg,#ffc800 52.700deg,#ff6000 65deg,#ff0000 90deg,#ff0040 112deg,#ff0090 127.300deg,#c000b0 150deg,#8000c8 180deg,#3000f0 215deg,#0000ff 232.700deg,#0050d8 255deg,#0080b8 270deg,#00ac98 288deg,#00ff80 307.300deg,#10ff40 335deg,#40ff00 360deg)"></div>
<svg style="left:399px;top:440px" width="746" height="568" viewBox="399 440 746 568"><rect x="510.500" y="524.500" width="523" height="399" rx="12" fill="#000" stroke="#fff" stroke-width="1"/><g stroke="#fff" stroke-width="1" stroke-dasharray="3 3" fill="none"><path d="M772.500 498v454M478 724.500h589"/><ellipse cx="772" cy="724" rx="147" ry="113.500"/></g></svg>
<div style="left:1147px;top:440px;width:746px;height:568px;background:#a4a4a4;border-top:1px solid #7a7a7a;border-left:1px solid #7a7a7a;border-right:1px solid #fff;border-bottom:1px solid #fff"></div>
<div style="left:1890px;top:443px;width:2px;height:564px;background:#f4f4f4"></div>
<div style="left:1150px;top:1005px;width:742px;height:2px;background:#f4f4f4"></div>
<div style="left:0px;top:1042px;width:1920px;height:1px;background:#000"></div>
<div style="left:0px;top:1043px;width:1920px;height:18px;background:#f0f0f0"></div>
<div style="left:0px;top:1043px;width:54px;height:18px;background:#f0f0f0;border:1px solid #000;border-top:none;border-right-width:2px;border-bottom-width:2px"></div>
<div style="left:17px;top:1043px;width:1px;height:17px;background:#000"></div>
<div style="left:35px;top:1043px;width:1px;height:17px;background:#000"></div>
<svg style="left:0;top:1043px" width="54" height="18" viewBox="0 0 54 18"><path d="M4.500 4.500l8 8M12.500 4.500l-8 8" stroke="#000" stroke-width="1.200"/><path d="M29 5v8l-4-4zM41 5v8l4-4z" fill="#000"/></svg>
<svg style="left:50px;top:1042px" width="345" height="20" viewBox="50 1042 345 20"><path d="M54.500 1042.500L63 1060.500H119.800L127.500 1042.500z" fill="#fff"/><g stroke="#000" stroke-width="1.100" fill="none"><path d="M54.500 1042.500L63 1060.500"/><path d="M127.500 1042.900L119.800 1060.500"/><path d="M122.900 1054.800L126 1060.500"/><path d="M196.900 1042.900L205.200 1060.500"/><path d="M196.900 1060.500L201 1052"/><path d="M301.700 1042.900L310 1060.500"/><path d="M301.700 1060.500L305.800 1052"/><path d="M384.400 1042.900L376.700 1060.500"/></g><path d="M126 1060.500H197M205 1060.500H302M310 1060.500H377" stroke="#9a9a9a" stroke-width="1"/><path d="M63 1060.500H120" stroke="#c8c8c8" stroke-width="1"/></svg>
<div class="t" style="left:67px;top:1046px;height:12px;line-height:12px;font-size:10px;color:#000;font-weight:bold;letter-spacing:0.358px;">Measures</div>
<div class="t" style="left:135px;top:1046px;height:12px;line-height:12px;font-size:10px;color:#000;letter-spacing:-0.385px;">CIE Diagram</div>
<div class="t" style="left:216px;top:1046px;height:12px;line-height:12px;font-size:10px;color:#000;letter-spacing:-0.388px;">Color temperature</div>
<div class="t" style="left:318px;top:1046px;height:12px;line-height:12px;font-size:10px;color:#000;letter-spacing:-0.336px;">RGB Levels</div>
<svg style="left:1751px;top:1044px" width="15" height="15" viewBox="0 0 15 15"><path d="M0.5 1.5h13v9l-2 3.500h-3l-1-2-1 2h-3l-2-3.500z" fill="#8a8a00" stroke="#000" stroke-width="1"/><rect x="2.500" y="2.500" width="7" height="5" fill="#e81020"/><path d="M4 5.500h3.500v-1.500" stroke="#fff" stroke-width="1" fill="none"/><rect x="8.500" y="9.500" width="4" height="3.500" fill="#f0e000"/></svg>
<div style="left:1846px;top:1045px;width:13px;height:13px;background:#fff;border:1px solid #6a6a6a;border-right-color:#e4e4e4;border-bottom-color:#e4e4e4;box-shadow:inset 1px 1px 0 #a0a0a0"></div>
<div class="t" style="left:1865px;top:1044px;height:14px;line-height:14px;font-size:12px;color:#000;letter-spacing:-0.707px;">Reference</div>
<div style="left:0px;top:1061px;width:1920px;height:19px;background:linear-gradient(90deg,#e6edf7,#edf2fa 50%,#e9eff8)"></div>
<div class="t" style="left:2px;top:1064px;height:16px;line-height:16px;font-size:12px;color:#000;letter-spacing:-0.738px;">Ready</div>
<div style="left:1743px;top:1063px;width:75px;height:17px;border:1px solid #a0b8d8;border-bottom:none;border-radius:1px"></div>
<div style="left:1820px;top:1063px;width:29px;height:17px;border:1px solid #a0b8d8;border-bottom:none;border-radius:1px"></div>
<div style="left:1851px;top:1063px;width:34px;height:17px;border:1px solid #a0b8d8;border-bottom:none;border-radius:1px"></div>
<div style="left:1887px;top:1063px;width:40px;height:17px;border:1px solid #a0b8d8;border-bottom:none;border-radius:1px"></div>
<div class="t" style="left:1853px;top:1065px;height:15px;line-height:15px;font-size:12px;color:#201018;letter-spacing:0.224px;">NUM</div>
<svg style="left:1150px;top:443px" width="740" height="562" viewBox="1150 443 740 562"><defs><linearGradient id="w0" gradientUnits="userSpaceOnUse" x1="1468.8" y1="791.8" x2="1782.1" y2="796.8"><stop offset="0" stop-color="#ffffff"/><stop offset=".058" stop-color="#fff9f9"/><stop offset=".117" stop-color="#ffeaea"/><stop offset=".175" stop-color="#ffd4d5"/><stop offset=".233" stop-color="#ffb7b9"/><stop offset=".291" stop-color="#ff9093"/><stop offset=".466" stop-color="#ff696e"/><stop offset=".646" stop-color="#ff454d"/><stop offset=".82" stop-color="#ff0428"/><stop offset=".865" stop-color="#ff0028"/><stop offset=".91" stop-color="#ff0028"/><stop offset=".955" stop-color="#ff0028"/><stop offset="1" stop-color="#ff0028"/></linearGradient><linearGradient id="w1" gradientUnits="userSpaceOnUse" x1="1468.8" y1="791.8" x2="1796.7" y2="807.3"><stop offset="0" stop-color="#ffffff"/><stop offset=".056" stop-color="#fff9f9"/><stop offset=".111" stop-color="#ffeaeb"/><stop offset=".167" stop-color="#ffd3d6"/><stop offset=".222" stop-color="#ffb6ba"/><stop offset=".278" stop-color="#ff8d94"/><stop offset=".426" stop-color="#ff6874"/><stop offset=".578" stop-color="#ff4559"/><stop offset=".726" stop-color="#ff043e"/><stop offset=".794" stop-color="#ff003e"/><stop offset=".863" stop-color="#ff003e"/><stop offset=".931" stop-color="#ff003e"/><stop offset="1" stop-color="#ff003e"/></linearGradient><linearGradient id="w2" gradientUnits="userSpaceOnUse" x1="1468.8" y1="791.8" x2="1813.1" y2="818.9"><stop offset="0" stop-color="#ffffff"/><stop offset=".053" stop-color="#fff9f9"/><stop offset=".105" stop-color="#ffe9eb"/><stop offset=".158" stop-color="#ffd2d6"/><stop offset=".211" stop-color="#ffb4bb"/><stop offset=".264" stop-color="#ff8a96"/><stop offset=".389" stop-color="#ff677a"/><stop offset=".518" stop-color="#ff4462"/><stop offset=".643" stop-color="#ff044d"/><stop offset=".732" stop-color="#ff004d"/><stop offset=".822" stop-color="#ff004d"/><stop offset=".911" stop-color="#ff004d"/><stop offset="1" stop-color="#ff004d"/></linearGradient><linearGradient id="w3" gradientUnits="userSpaceOnUse" x1="1468.8" y1="791.8" x2="1801.2" y2="828.5"><stop offset="0" stop-color="#ffffff"/><stop offset=".054" stop-color="#fff9f9"/><stop offset=".108" stop-color="#ffe9eb"/><stop offset=".163" stop-color="#ffd1d6"/><stop offset=".217" stop-color="#ffb2bc"/><stop offset=".271" stop-color="#ff8798"/><stop offset=".387" stop-color="#ff667f"/><stop offset=".507" stop-color="#ff446b"/><stop offset=".623" stop-color="#ff0459"/><stop offset=".717" stop-color="#ff0059"/><stop offset=".811" stop-color="#ff0059"/><stop offset=".906" stop-color="#ff0059"/><stop offset="1" stop-color="#ff0059"/></linearGradient><linearGradient id="w4" gradientUnits="userSpaceOnUse" x1="1468.8" y1="791.8" x2="1778.9" y2="836.0"><stop offset="0" stop-color="#ffffff"/><stop offset=".058" stop-color="#fff8f9"/><stop offset=".115" stop-color="#ffe8eb"/><stop offset=".173" stop-color="#ffd1d7"/><stop offset=".231" stop-color="#ffb1bd"/><stop offset=".288" stop-color="#ff849a"/><stop offset=".4" stop-color="#ff6484"/><stop offset=".515" stop-color="#ff4372"/><stop offset=".626" stop-color="#ff0462"/><stop offset=".72" stop-color="#ff0062"/><stop offset=".813" stop-color="#ff0062"/><stop offset=".907" stop-color="#ff0062"/><stop offset="1" stop-color="#ff0062"/></linearGradient><linearGradient id="w5" gradientUnits="userSpaceOnUse" x1="1468.8" y1="791.8" x2="1759.3" y2="842.5"><stop offset="0" stop-color="#ffffff"/><stop offset=".061" stop-color="#fff8f9"/><stop offset=".122" stop-color="#ffe8eb"/><stop offset=".183" stop-color="#ffd0d8"/><stop offset=".244" stop-color="#ffb0be"/><stop offset=".305" stop-color="#ff819c"/><stop offset=".412" stop-color="#ff6388"/><stop offset=".522" stop-color="#ff4378"/><stop offset=".629" stop-color="#ff046a"/><stop offset=".722" stop-color="#ff006a"/><stop offset=".815" stop-color="#ff006a"/><stop offset=".907" stop-color="#ff006a"/><stop offset="1" stop-color="#ff006a"/></linearGradient><linearGradient id="w6" gradientUnits="userSpaceOnUse" x1="1468.8" y1="791.8" x2="1741.9" y2="848.4"><stop offset="0" stop-color="#ffffff"/><stop offset=".064" stop-color="#fff8f9"/><stop offset=".128" stop-color="#ffe8ec"/><stop offset=".192" stop-color="#ffcfd8"/><stop offset=".256" stop-color="#ffaebf"/><stop offset=".32" stop-color="#ff7f9e"/><stop offset=".423" stop-color="#ff628d"/><stop offset=".529" stop-color="#ff427e"/><stop offset=".632" stop-color="#ff0472"/><stop offset=".724" stop-color="#ff0072"/><stop offset=".816" stop-color="#ff0072"/><stop offset=".908" stop-color="#ff0072"/><stop offset="1" stop-color="#ff0072"/></linearGradient><linearGradient id="w7" gradientUnits="userSpaceOnUse" x1="1468.8" y1="791.8" x2="1726.4" y2="853.7"><stop offset="0" stop-color="#ffffff"/><stop offset=".067" stop-color="#fff8f9"/><stop offset=".134" stop-color="#ffe7ec"/><stop offset=".201" stop-color="#ffcfd9"/><stop offset=".268" stop-color="#ffadc0"/><stop offset=".334" stop-color="#ff7ca0"/><stop offset=".433" stop-color="#ff6090"/><stop offset=".535" stop-color="#ff4283"/><stop offset=".634" stop-color="#ff0478"/><stop offset=".726" stop-color="#ff0078"/><stop offset=".817" stop-color="#ff0078"/><stop offset=".909" stop-color="#ff0078"/><stop offset="1" stop-color="#ff0078"/></linearGradient><linearGradient id="w8" gradientUnits="userSpaceOnUse" x1="1468.8" y1="791.8" x2="1712.4" y2="858.5"><stop offset="0" stop-color="#ffffff"/><stop offset=".07" stop-color="#fff8fa"/><stop offset=".139" stop-color="#ffe7ec"/><stop offset=".209" stop-color="#ffceda"/><stop offset=".278" stop-color="#ffacc1"/><stop offset=".348" stop-color="#ff7aa2"/><stop offset=".443" stop-color="#ff5f94"/><stop offset=".541" stop-color="#ff4188"/><stop offset=".636" stop-color="#ff047e"/><stop offset=".727" stop-color="#ff007e"/><stop offset=".818" stop-color="#ff007e"/><stop offset=".909" stop-color="#ff007e"/><stop offset="1" stop-color="#ff007e"/></linearGradient><linearGradient id="w9" gradientUnits="userSpaceOnUse" x1="1468.8" y1="791.8" x2="1699.6" y2="862.9"><stop offset="0" stop-color="#ffffff"/><stop offset=".072" stop-color="#fff8fa"/><stop offset=".144" stop-color="#ffe7ed"/><stop offset=".216" stop-color="#ffceda"/><stop offset=".288" stop-color="#ffabc3"/><stop offset=".361" stop-color="#ff78a4"/><stop offset=".452" stop-color="#ff5e97"/><stop offset=".546" stop-color="#ff408d"/><stop offset=".638" stop-color="#ff0483"/><stop offset=".728" stop-color="#ff0083"/><stop offset=".819" stop-color="#ff0083"/><stop offset=".909" stop-color="#ff0083"/><stop offset="1" stop-color="#ff0083"/></linearGradient><linearGradient id="w10" gradientUnits="userSpaceOnUse" x1="1468.8" y1="791.8" x2="1688.0" y2="866.9"><stop offset="0" stop-color="#ffffff"/><stop offset=".074" stop-color="#fff8fa"/><stop offset=".149" stop-color="#ffe7ed"/><stop offset=".223" stop-color="#ffcddb"/><stop offset=".298" stop-color="#ffaac4"/><stop offset=".372" stop-color="#ff76a6"/><stop offset=".46" stop-color="#ff5d9b"/><stop offset=".551" stop-color="#ff4091"/><stop offset=".639" stop-color="#ff0488"/><stop offset=".729" stop-color="#ff0088"/><stop offset=".82" stop-color="#ff0088"/><stop offset=".91" stop-color="#ff0088"/><stop offset="1" stop-color="#ff0088"/></linearGradient><linearGradient id="w11" gradientUnits="userSpaceOnUse" x1="1468.8" y1="791.8" x2="1677.3" y2="870.6"><stop offset="0" stop-color="#ffffff"/><stop offset=".077" stop-color="#fff8fa"/><stop offset=".153" stop-color="#ffe7ee"/><stop offset=".23" stop-color="#ffcddc"/><stop offset=".307" stop-color="#ffa9c5"/><stop offset=".383" stop-color="#ff74a8"/><stop offset=".468" stop-color="#ff5c9e"/><stop offset=".556" stop-color="#ff3f95"/><stop offset=".64" stop-color="#ff048d"/><stop offset=".73" stop-color="#ff008d"/><stop offset=".82" stop-color="#ff008d"/><stop offset=".91" stop-color="#ff008d"/><stop offset="1" stop-color="#ff008d"/></linearGradient><linearGradient id="w12" gradientUnits="userSpaceOnUse" x1="1468.8" y1="791.8" x2="1667.3" y2="874.1"><stop offset="0" stop-color="#ffffff"/><stop offset=".079" stop-color="#fff8fa"/><stop offset=".157" stop-color="#ffe7ee"/><stop offset=".236" stop-color="#ffcddd"/><stop offset=".314" stop-color="#ffa9c7"/><stop offset=".393" stop-color="#ff72ab"/><stop offset=".475" stop-color="#ff5ba1"/><stop offset=".56" stop-color="#ff3f99"/><stop offset=".642" stop-color="#ff0492"/><stop offset=".731" stop-color="#ff0091"/><stop offset=".821" stop-color="#ff0091"/><stop offset=".91" stop-color="#ff0091"/><stop offset="1" stop-color="#ff0091"/></linearGradient><linearGradient id="w13" gradientUnits="userSpaceOnUse" x1="1468.8" y1="791.8" x2="1658.1" y2="877.3"><stop offset="0" stop-color="#ffffff"/><stop offset=".08" stop-color="#fff8fa"/><stop offset=".161" stop-color="#ffe6ee"/><stop offset=".241" stop-color="#ffccde"/><stop offset=".322" stop-color="#ffa8c8"/><stop offset=".402" stop-color="#ff71ad"/><stop offset=".481" stop-color="#ff5aa4"/><stop offset=".563" stop-color="#ff3e9c"/><stop offset=".642" stop-color="#ff0496"/><stop offset=".732" stop-color="#ff0096"/><stop offset=".821" stop-color="#ff0096"/><stop offset=".911" stop-color="#ff0096"/><stop offset="1" stop-color="#ff0096"/></linearGradient><linearGradient id="w14" gradientUnits="userSpaceOnUse" x1="1468.8" y1="791.8" x2="1649.5" y2="880.4"><stop offset="0" stop-color="#ffffff"/><stop offset=".082" stop-color="#fff8fa"/><stop offset=".164" stop-color="#ffe6ef"/><stop offset=".246" stop-color="#ffccde"/><stop offset=".328" stop-color="#ffa8c9"/><stop offset=".411" stop-color="#ff70af"/><stop offset=".487" stop-color="#ff59a7"/><stop offset=".566" stop-color="#ff3ea0"/><stop offset=".643" stop-color="#ff049a"/><stop offset=".732" stop-color="#ff009a"/><stop offset=".822" stop-color="#ff009a"/><stop offset=".911" stop-color="#ff009a"/><stop offset="1" stop-color="#ff009a"/></linearGradient><linearGradient id="w15" gradientUnits="userSpaceOnUse" x1="1468.8" y1="791.8" x2="1641.4" y2="883.2"><stop offset="0" stop-color="#ffffff"/><stop offset=".084" stop-color="#fff8fa"/><stop offset=".167" stop-color="#ffe6ef"/><stop offset=".251" stop-color="#ffccdf"/><stop offset=".334" stop-color="#ffa7cb"/><stop offset=".418" stop-color="#ff6fb1"/><stop offset=".493" stop-color="#ff58aa"/><stop offset=".569" stop-color="#ff3ea3"/><stop offset=".644" stop-color="#ff049d"/><stop offset=".733" stop-color="#ff009d"/><stop offset=".822" stop-color="#ff009d"/><stop offset=".911" stop-color="#ff009d"/><stop offset="1" stop-color="#ff009d"/></linearGradient><linearGradient id="w16" gradientUnits="userSpaceOnUse" x1="1468.8" y1="791.8" x2="1633.7" y2="885.9"><stop offset="0" stop-color="#ffffff"/><stop offset=".085" stop-color="#fff8fb"/><stop offset=".17" stop-color="#ffe6f0"/><stop offset=".255" stop-color="#ffcce0"/><stop offset=".34" stop-color="#ffa7cc"/><stop offset=".425" stop-color="#ff6eb4"/><stop offset=".497" stop-color="#ff58ad"/><stop offset=".572" stop-color="#ff3da6"/><stop offset=".645" stop-color="#ff04a1"/><stop offset=".733" stop-color="#ff00a1"/><stop offset=".822" stop-color="#ff00a1"/><stop offset=".911" stop-color="#ff00a1"/><stop offset="1" stop-color="#ff00a1"/></linearGradient><linearGradient id="w17" gradientUnits="userSpaceOnUse" x1="1468.8" y1="791.8" x2="1626.5" y2="888.5"><stop offset="0" stop-color="#ffffff"/><stop offset=".086" stop-color="#fff8fb"/><stop offset=".172" stop-color="#ffe6f0"/><stop offset=".258" stop-color="#ffcce1"/><stop offset=".345" stop-color="#ffa7ce"/><stop offset=".431" stop-color="#ff6db6"/><stop offset=".501" stop-color="#ff57af"/><stop offset=".574" stop-color="#ff3daa"/><stop offset=".645" stop-color="#ff04a4"/><stop offset=".734" stop-color="#ff00a4"/><stop offset=".823" stop-color="#ff00a4"/><stop offset=".911" stop-color="#ff00a4"/><stop offset="1" stop-color="#ff00a4"/></linearGradient><linearGradient id="w18" gradientUnits="userSpaceOnUse" x1="1468.8" y1="791.8" x2="1619.6" y2="890.9"><stop offset="0" stop-color="#ffffff"/><stop offset=".087" stop-color="#fff8fb"/><stop offset=".174" stop-color="#ffe6f1"/><stop offset=".262" stop-color="#ffcce2"/><stop offset=".349" stop-color="#ffa7cf"/><stop offset=".436" stop-color="#ff6cb8"/><stop offset=".505" stop-color="#ff57b2"/><stop offset=".577" stop-color="#ff3dad"/><stop offset=".646" stop-color="#ff04a8"/><stop offset=".734" stop-color="#ff00a8"/><stop offset=".823" stop-color="#ff00a8"/><stop offset=".911" stop-color="#ff00a8"/><stop offset="1" stop-color="#ff00a8"/></linearGradient><linearGradient id="w19" gradientUnits="userSpaceOnUse" x1="1468.8" y1="791.8" x2="1613.1" y2="893.3"><stop offset="0" stop-color="#ffffff"/><stop offset=".088" stop-color="#fff8fb"/><stop offset=".176" stop-color="#ffe6f1"/><stop offset=".264" stop-color="#ffcce3"/><stop offset=".353" stop-color="#ffa6d1"/><stop offset=".441" stop-color="#ff6cbb"/><stop offset=".509" stop-color="#ff56b5"/><stop offset=".579" stop-color="#ff3db0"/><stop offset=".646" stop-color="#ff04ab"/><stop offset=".735" stop-color="#ff00ab"/><stop offset=".823" stop-color="#ff00ab"/><stop offset=".912" stop-color="#ff00ab"/><stop offset="1" stop-color="#ff00ab"/></linearGradient><linearGradient id="w20" gradientUnits="userSpaceOnUse" x1="1468.8" y1="791.8" x2="1606.8" y2="895.5"><stop offset="0" stop-color="#ffffff"/><stop offset=".089" stop-color="#fff8fb"/><stop offset=".178" stop-color="#ffe7f1"/><stop offset=".267" stop-color="#ffcce4"/><stop offset=".356" stop-color="#ffa6d2"/><stop offset=".445" stop-color="#ff6bbd"/><stop offset=".511" stop-color="#ff56b7"/><stop offset=".58" stop-color="#ff3db2"/><stop offset=".647" stop-color="#ff04ae"/><stop offset=".735" stop-color="#ff00ae"/><stop offset=".823" stop-color="#ff00ae"/><stop offset=".912" stop-color="#ff00ae"/><stop offset="1" stop-color="#ff00ae"/></linearGradient><linearGradient id="w21" gradientUnits="userSpaceOnUse" x1="1468.8" y1="791.8" x2="1600.8" y2="897.6"><stop offset="0" stop-color="#ffffff"/><stop offset=".09" stop-color="#fff8fb"/><stop offset=".179" stop-color="#ffe7f2"/><stop offset=".269" stop-color="#ffcce5"/><stop offset=".359" stop-color="#ffa6d4"/><stop offset=".448" stop-color="#ff6bbf"/><stop offset=".514" stop-color="#ff56ba"/><stop offset=".582" stop-color="#ff3db5"/><stop offset=".647" stop-color="#ff04b1"/><stop offset=".736" stop-color="#ff00b1"/><stop offset=".824" stop-color="#ff00b1"/><stop offset=".912" stop-color="#ff00b1"/><stop offset="1" stop-color="#ff00b1"/></linearGradient><linearGradient id="w22" gradientUnits="userSpaceOnUse" x1="1468.8" y1="791.8" x2="1595.0" y2="899.7"><stop offset="0" stop-color="#ffffff"/><stop offset=".09" stop-color="#fff8fb"/><stop offset=".181" stop-color="#ffe7f2"/><stop offset=".271" stop-color="#ffcce6"/><stop offset=".361" stop-color="#ffa7d5"/><stop offset=".451" stop-color="#ff6bc1"/><stop offset=".516" stop-color="#ff56bd"/><stop offset=".583" stop-color="#ff3db8"/><stop offset=".648" stop-color="#ff04b4"/><stop offset=".736" stop-color="#ff00b4"/><stop offset=".824" stop-color="#ff00b4"/><stop offset=".912" stop-color="#ff00b4"/><stop offset="1" stop-color="#ff00b4"/></linearGradient><linearGradient id="w23" gradientUnits="userSpaceOnUse" x1="1468.8" y1="791.8" x2="1589.5" y2="901.7"><stop offset="0" stop-color="#ffffff"/><stop offset=".091" stop-color="#fff8fc"/><stop offset=".181" stop-color="#ffe7f3"/><stop offset=".272" stop-color="#ffcce6"/><stop offset=".363" stop-color="#ffa7d7"/><stop offset=".454" stop-color="#ff6bc4"/><stop offset=".518" stop-color="#ff56bf"/><stop offset=".584" stop-color="#ff3dbb"/><stop offset=".648" stop-color="#ff04b7"/><stop offset=".736" stop-color="#ff00b7"/><stop offset=".824" stop-color="#ff00b7"/><stop offset=".912" stop-color="#ff00b7"/><stop offset="1" stop-color="#ff00b7"/></linearGradient><linearGradient id="w24" gradientUnits="userSpaceOnUse" x1="1468.8" y1="791.8" x2="1584.1" y2="903.6"><stop offset="0" stop-color="#ffffff"/><stop offset=".091" stop-color="#fff8fc"/><stop offset=".182" stop-color="#ffe7f3"/><stop offset=".273" stop-color="#ffcde7"/><stop offset=".365" stop-color="#ffa7d8"/><stop offset=".456" stop-color="#ff6bc6"/><stop offset=".52" stop-color="#ff56c2"/><stop offset=".585" stop-color="#ff3dbe"/><stop offset=".649" stop-color="#ff04ba"/><stop offset=".737" stop-color="#ff00ba"/><stop offset=".824" stop-color="#ff00ba"/><stop offset=".912" stop-color="#ff00ba"/><stop offset="1" stop-color="#ff00ba"/></linearGradient><linearGradient id="w25" gradientUnits="userSpaceOnUse" x1="1468.8" y1="791.8" x2="1578.8" y2="905.4"><stop offset="0" stop-color="#ffffff"/><stop offset=".091" stop-color="#fff8fc"/><stop offset=".183" stop-color="#ffe7f4"/><stop offset=".274" stop-color="#ffcde8"/><stop offset=".366" stop-color="#ffa7da"/><stop offset=".457" stop-color="#ff6bc8"/><stop offset=".521" stop-color="#ff57c4"/><stop offset=".586" stop-color="#ff3dc0"/><stop offset=".649" stop-color="#ff04bd"/><stop offset=".737" stop-color="#ff00bd"/><stop offset=".825" stop-color="#ff00bd"/><stop offset=".912" stop-color="#ff00bd"/><stop offset="1" stop-color="#ff00bd"/></linearGradient><linearGradient id="w26" gradientUnits="userSpaceOnUse" x1="1468.8" y1="791.8" x2="1573.7" y2="907.2"><stop offset="0" stop-color="#ffffff"/><stop offset=".092" stop-color="#fff8fc"/><stop offset=".183" stop-color="#ffe7f4"/><stop offset=".275" stop-color="#ffcde9"/><stop offset=".367" stop-color="#ffa8db"/><stop offset=".459" stop-color="#ff6ccb"/><stop offset=".522" stop-color="#ff57c7"/><stop offset=".587" stop-color="#ff3dc3"/><stop offset=".65" stop-color="#ff04c0"/><stop offset=".737" stop-color="#ff00c0"/><stop offset=".825" stop-color="#ff00c0"/><stop offset=".912" stop-color="#ff00c0"/><stop offset="1" stop-color="#ff00c0"/></linearGradient><linearGradient id="w27" gradientUnits="userSpaceOnUse" x1="1468.8" y1="791.8" x2="1568.8" y2="909.0"><stop offset="0" stop-color="#ffffff"/><stop offset=".092" stop-color="#fff8fc"/><stop offset=".184" stop-color="#ffe8f5"/><stop offset=".276" stop-color="#ffcdea"/><stop offset=".368" stop-color="#ffa8dd"/><stop offset=".459" stop-color="#ff6ccd"/><stop offset=".523" stop-color="#ff58c9"/><stop offset=".587" stop-color="#ff3ec5"/><stop offset=".65" stop-color="#ff04c2"/><stop offset=".738" stop-color="#ff00c2"/><stop offset=".825" stop-color="#ff00c2"/><stop offset=".913" stop-color="#ff00c2"/><stop offset="1" stop-color="#ff00c2"/></linearGradient><linearGradient id="w28" gradientUnits="userSpaceOnUse" x1="1468.8" y1="791.8" x2="1563.9" y2="910.6"><stop offset="0" stop-color="#ffffff"/><stop offset=".092" stop-color="#fff9fc"/><stop offset=".184" stop-color="#ffe8f5"/><stop offset=".276" stop-color="#ffceeb"/><stop offset=".368" stop-color="#ffa8de"/><stop offset=".46" stop-color="#ff6dcf"/><stop offset=".523" stop-color="#ff58cc"/><stop offset=".588" stop-color="#ff3ec8"/><stop offset=".651" stop-color="#ff04c5"/><stop offset=".738" stop-color="#ff00c5"/><stop offset=".825" stop-color="#ff00c5"/><stop offset=".913" stop-color="#ff00c5"/><stop offset="1" stop-color="#ff00c5"/></linearGradient><linearGradient id="w29" gradientUnits="userSpaceOnUse" x1="1468.8" y1="791.8" x2="1559.2" y2="912.3"><stop offset="0" stop-color="#ffffff"/><stop offset=".092" stop-color="#fff9fc"/><stop offset=".184" stop-color="#ffe8f6"/><stop offset=".276" stop-color="#ffceec"/><stop offset=".368" stop-color="#ffa9e0"/><stop offset=".46" stop-color="#ff6ed2"/><stop offset=".523" stop-color="#ff59ce"/><stop offset=".588" stop-color="#ff3fcb"/><stop offset=".652" stop-color="#ff04c8"/><stop offset=".739" stop-color="#ff00c8"/><stop offset=".826" stop-color="#ff00c8"/><stop offset=".913" stop-color="#ff00c8"/><stop offset="1" stop-color="#ff00c8"/></linearGradient><linearGradient id="w30" gradientUnits="userSpaceOnUse" x1="1468.8" y1="791.8" x2="1554.5" y2="913.9"><stop offset="0" stop-color="#ffffff"/><stop offset=".092" stop-color="#fff9fd"/><stop offset=".184" stop-color="#ffe8f6"/><stop offset=".276" stop-color="#ffceed"/><stop offset=".368" stop-color="#ffa9e2"/><stop offset=".46" stop-color="#ff6ed4"/><stop offset=".523" stop-color="#ff59d0"/><stop offset=".589" stop-color="#ff3fcd"/><stop offset=".652" stop-color="#ff04ca"/><stop offset=".739" stop-color="#ff00ca"/><stop offset=".826" stop-color="#ff00ca"/><stop offset=".913" stop-color="#ff00ca"/><stop offset="1" stop-color="#ff00ca"/></linearGradient><linearGradient id="w31" gradientUnits="userSpaceOnUse" x1="1468.8" y1="791.8" x2="1550.0" y2="915.5"><stop offset="0" stop-color="#ffffff"/><stop offset=".092" stop-color="#fff9fd"/><stop offset=".184" stop-color="#ffe8f7"/><stop offset=".276" stop-color="#ffcfee"/><stop offset=".368" stop-color="#ffaae3"/><stop offset=".46" stop-color="#ff6fd6"/><stop offset=".523" stop-color="#ff5ad3"/><stop offset=".589" stop-color="#ff40d0"/><stop offset=".653" stop-color="#ff04cd"/><stop offset=".74" stop-color="#ff00cd"/><stop offset=".826" stop-color="#ff00cd"/><stop offset=".913" stop-color="#ff00cd"/><stop offset="1" stop-color="#ff00cd"/></linearGradient><linearGradient id="w32" gradientUnits="userSpaceOnUse" x1="1468.8" y1="791.8" x2="1545.5" y2="917.0"><stop offset="0" stop-color="#ffffff"/><stop offset=".092" stop-color="#fff9fd"/><stop offset=".184" stop-color="#ffe9f7"/><stop offset=".275" stop-color="#ffcfef"/><stop offset=".367" stop-color="#ffabe5"/><stop offset=".459" stop-color="#ff70d9"/><stop offset=".523" stop-color="#ff5bd5"/><stop offset=".589" stop-color="#ff40d2"/><stop offset=".653" stop-color="#ff04d0"/><stop offset=".74" stop-color="#ff00d0"/><stop offset=".827" stop-color="#ff00d0"/><stop offset=".913" stop-color="#ff00d0"/><stop offset="1" stop-color="#ff00d0"/></linearGradient><linearGradient id="w33" gradientUnits="userSpaceOnUse" x1="1468.8" y1="791.8" x2="1541.0" y2="918.5"><stop offset="0" stop-color="#ffffff"/><stop offset=".092" stop-color="#fff9fd"/><stop offset=".183" stop-color="#ffe9f8"/><stop offset=".275" stop-color="#ffd0f0"/><stop offset=".367" stop-color="#ffabe6"/><stop offset=".458" stop-color="#ff71db"/><stop offset=".523" stop-color="#ff5cd8"/><stop offset=".589" stop-color="#ff41d5"/><stop offset=".654" stop-color="#ff04d3"/><stop offset=".741" stop-color="#ff00d3"/><stop offset=".827" stop-color="#ff00d3"/><stop offset=".914" stop-color="#ff00d3"/><stop offset="1" stop-color="#ff00d3"/></linearGradient><linearGradient id="w34" gradientUnits="userSpaceOnUse" x1="1468.8" y1="791.8" x2="1536.6" y2="920.0"><stop offset="0" stop-color="#ffffff"/><stop offset=".091" stop-color="#fff9fd"/><stop offset=".183" stop-color="#ffe9f8"/><stop offset=".274" stop-color="#ffd0f1"/><stop offset=".366" stop-color="#fface8"/><stop offset=".457" stop-color="#ff73dd"/><stop offset=".522" stop-color="#ff5dda"/><stop offset=".59" stop-color="#ff42d8"/><stop offset=".655" stop-color="#ff04d5"/><stop offset=".741" stop-color="#ff00d5"/><stop offset=".827" stop-color="#ff00d5"/><stop offset=".914" stop-color="#ff00d5"/><stop offset="1" stop-color="#ff00d5"/></linearGradient><linearGradient id="w35" gradientUnits="userSpaceOnUse" x1="1468.8" y1="791.8" x2="1532.2" y2="921.4"><stop offset="0" stop-color="#ffffff"/><stop offset=".091" stop-color="#fff9fd"/><stop offset=".182" stop-color="#ffe9f9"/><stop offset=".273" stop-color="#ffd1f2"/><stop offset=".365" stop-color="#ffadea"/><stop offset=".456" stop-color="#ff74e0"/><stop offset=".522" stop-color="#ff5edd"/><stop offset=".59" stop-color="#ff42da"/><stop offset=".656" stop-color="#ff04d8"/><stop offset=".742" stop-color="#ff00d8"/><stop offset=".828" stop-color="#ff00d8"/><stop offset=".914" stop-color="#ff00d8"/><stop offset="1" stop-color="#ff00d8"/></linearGradient><linearGradient id="w36" gradientUnits="userSpaceOnUse" x1="1468.8" y1="791.8" x2="1527.9" y2="922.9"><stop offset="0" stop-color="#ffffff"/><stop offset=".091" stop-color="#fff9fd"/><stop offset=".182" stop-color="#ffeaf9"/><stop offset=".273" stop-color="#ffd1f3"/><stop offset=".363" stop-color="#ffadeb"/><stop offset=".454" stop-color="#ff75e2"/><stop offset=".521" stop-color="#ff5fdf"/><stop offset=".59" stop-color="#ff43dd"/><stop offset=".657" stop-color="#ff04db"/><stop offset=".742" stop-color="#ff00db"/><stop offset=".828" stop-color="#ff00db"/><stop offset=".914" stop-color="#ff00db"/><stop offset="1" stop-color="#ff00db"/></linearGradient><linearGradient id="w37" gradientUnits="userSpaceOnUse" x1="1468.8" y1="791.8" x2="1523.6" y2="924.3"><stop offset="0" stop-color="#ffffff"/><stop offset=".09" stop-color="#fff9fe"/><stop offset=".181" stop-color="#ffeafa"/><stop offset=".271" stop-color="#ffd2f4"/><stop offset=".362" stop-color="#ffaeed"/><stop offset=".453" stop-color="#ff77e4"/><stop offset=".52" stop-color="#ff60e2"/><stop offset=".59" stop-color="#ff44e0"/><stop offset=".657" stop-color="#ff04de"/><stop offset=".743" stop-color="#ff00de"/><stop offset=".829" stop-color="#ff00de"/><stop offset=".914" stop-color="#ff00de"/><stop offset="1" stop-color="#ff00de"/></linearGradient><linearGradient id="w38" gradientUnits="userSpaceOnUse" x1="1468.8" y1="791.8" x2="1519.3" y2="925.7"><stop offset="0" stop-color="#ffffff"/><stop offset=".09" stop-color="#fff9fe"/><stop offset=".18" stop-color="#ffeafa"/><stop offset=".27" stop-color="#ffd2f5"/><stop offset=".36" stop-color="#ffafee"/><stop offset=".451" stop-color="#ff78e7"/><stop offset=".519" stop-color="#ff62e5"/><stop offset=".59" stop-color="#ff45e2"/><stop offset=".658" stop-color="#ff04e1"/><stop offset=".744" stop-color="#ff00e1"/><stop offset=".829" stop-color="#ff00e1"/><stop offset=".915" stop-color="#ff00e1"/><stop offset="1" stop-color="#ff00e1"/></linearGradient><linearGradient id="w39" gradientUnits="userSpaceOnUse" x1="1468.8" y1="791.8" x2="1515.0" y2="927.0"><stop offset="0" stop-color="#ffffff"/><stop offset=".09" stop-color="#fffafe"/><stop offset=".179" stop-color="#ffebfb"/><stop offset=".269" stop-color="#ffd3f6"/><stop offset=".359" stop-color="#ffb0f0"/><stop offset=".449" stop-color="#ff7ae9"/><stop offset=".518" stop-color="#ff63e7"/><stop offset=".59" stop-color="#ff46e5"/><stop offset=".659" stop-color="#ff04e4"/><stop offset=".744" stop-color="#ff00e4"/><stop offset=".83" stop-color="#ff00e4"/><stop offset=".915" stop-color="#ff00e4"/><stop offset="1" stop-color="#ff00e4"/></linearGradient><linearGradient id="w40" gradientUnits="userSpaceOnUse" x1="1468.8" y1="791.8" x2="1510.8" y2="928.4"><stop offset="0" stop-color="#ffffff"/><stop offset=".089" stop-color="#fffafe"/><stop offset=".179" stop-color="#ffebfb"/><stop offset=".268" stop-color="#ffd3f7"/><stop offset=".357" stop-color="#ffb1f2"/><stop offset=".446" stop-color="#ff7bec"/><stop offset=".517" stop-color="#ff64ea"/><stop offset=".59" stop-color="#ff47e8"/><stop offset=".66" stop-color="#ff04e6"/><stop offset=".745" stop-color="#ff00e6"/><stop offset=".83" stop-color="#ff00e6"/><stop offset=".915" stop-color="#ff00e6"/><stop offset="1" stop-color="#ff00e6"/></linearGradient><linearGradient id="w41" gradientUnits="userSpaceOnUse" x1="1468.8" y1="791.8" x2="1506.5" y2="929.8"><stop offset="0" stop-color="#ffffff"/><stop offset=".089" stop-color="#fffafe"/><stop offset=".178" stop-color="#ffebfc"/><stop offset=".266" stop-color="#ffd4f8"/><stop offset=".355" stop-color="#ffb2f4"/><stop offset=".444" stop-color="#ff7dee"/><stop offset=".516" stop-color="#ff66ed"/><stop offset=".59" stop-color="#ff48eb"/><stop offset=".661" stop-color="#ff04ea"/><stop offset=".746" stop-color="#ff00ea"/><stop offset=".831" stop-color="#ff00ea"/><stop offset=".915" stop-color="#ff00ea"/><stop offset="1" stop-color="#ff00ea"/></linearGradient><linearGradient id="w42" gradientUnits="userSpaceOnUse" x1="1468.8" y1="791.8" x2="1502.2" y2="931.1"><stop offset="0" stop-color="#ffffff"/><stop offset=".088" stop-color="#fffafe"/><stop offset=".176" stop-color="#ffecfc"/><stop offset=".265" stop-color="#ffd5f9"/><stop offset=".353" stop-color="#ffb3f5"/><stop offset=".441" stop-color="#ff7ff1"/><stop offset=".514" stop-color="#ff67ef"/><stop offset=".59" stop-color="#ff49ee"/><stop offset=".663" stop-color="#ff04ed"/><stop offset=".747" stop-color="#ff00ed"/><stop offset=".831" stop-color="#ff00ed"/><stop offset=".916" stop-color="#ff00ed"/><stop offset="1" stop-color="#ff00ed"/></linearGradient><linearGradient id="w43" gradientUnits="userSpaceOnUse" x1="1468.8" y1="791.8" x2="1497.9" y2="932.4"><stop offset="0" stop-color="#ffffff"/><stop offset=".088" stop-color="#fffafe"/><stop offset=".175" stop-color="#ffecfd"/><stop offset=".263" stop-color="#ffd5fa"/><stop offset=".351" stop-color="#ffb4f7"/><stop offset=".439" stop-color="#ff81f3"/><stop offset=".513" stop-color="#ff69f2"/><stop offset=".589" stop-color="#ff4af1"/><stop offset=".664" stop-color="#ff04f0"/><stop offset=".748" stop-color="#ff00f0"/><stop offset=".832" stop-color="#ff00f0"/><stop offset=".916" stop-color="#ff00f0"/><stop offset="1" stop-color="#ff00f0"/></linearGradient><linearGradient id="w44" gradientUnits="userSpaceOnUse" x1="1468.8" y1="791.8" x2="1493.5" y2="933.8"><stop offset="0" stop-color="#ffffff"/><stop offset=".087" stop-color="#fffaff"/><stop offset=".174" stop-color="#ffecfd"/><stop offset=".261" stop-color="#ffd6fb"/><stop offset=".349" stop-color="#ffb5f9"/><stop offset=".436" stop-color="#ff83f6"/><stop offset=".511" stop-color="#ff6af5"/><stop offset=".589" stop-color="#ff4bf4"/><stop offset=".665" stop-color="#ff04f3"/><stop offset=".749" stop-color="#ff00f3"/><stop offset=".833" stop-color="#ff00f3"/><stop offset=".916" stop-color="#ff00f3"/><stop offset="1" stop-color="#ff00f3"/></linearGradient><linearGradient id="w45" gradientUnits="userSpaceOnUse" x1="1468.8" y1="791.8" x2="1489.1" y2="935.1"><stop offset="0" stop-color="#ffffff"/><stop offset=".087" stop-color="#fffaff"/><stop offset=".173" stop-color="#ffedfe"/><stop offset=".26" stop-color="#ffd7fc"/><stop offset=".346" stop-color="#ffb7fb"/><stop offset=".433" stop-color="#ff85f9"/><stop offset=".51" stop-color="#ff6cf8"/><stop offset=".589" stop-color="#ff4cf7"/><stop offset=".667" stop-color="#ff04f7"/><stop offset=".75" stop-color="#ff00f7"/><stop offset=".833" stop-color="#ff00f7"/><stop offset=".917" stop-color="#ff00f7"/><stop offset="1" stop-color="#ff00f7"/></linearGradient><linearGradient id="w46" gradientUnits="userSpaceOnUse" x1="1468.8" y1="791.8" x2="1484.7" y2="936.5"><stop offset="0" stop-color="#ffffff"/><stop offset=".086" stop-color="#fffaff"/><stop offset=".172" stop-color="#ffedfe"/><stop offset=".258" stop-color="#ffd8fe"/><stop offset=".343" stop-color="#ffb8fd"/><stop offset=".429" stop-color="#ff87fb"/><stop offset=".508" stop-color="#ff6efb"/><stop offset=".589" stop-color="#ff4efb"/><stop offset=".668" stop-color="#ff03fa"/><stop offset=".751" stop-color="#ff00fa"/><stop offset=".834" stop-color="#ff00fa"/><stop offset=".917" stop-color="#ff00fa"/><stop offset="1" stop-color="#ff00fa"/></linearGradient><linearGradient id="w47" gradientUnits="userSpaceOnUse" x1="1468.8" y1="791.8" x2="1480.2" y2="937.8"><stop offset="0" stop-color="#ffffff"/><stop offset=".085" stop-color="#fffaff"/><stop offset=".17" stop-color="#ffeeff"/><stop offset=".256" stop-color="#ffd8ff"/><stop offset=".341" stop-color="#ffb9fe"/><stop offset=".426" stop-color="#ff89fe"/><stop offset=".506" stop-color="#ff70fe"/><stop offset=".589" stop-color="#ff4ffe"/><stop offset=".67" stop-color="#ff04fe"/><stop offset=".752" stop-color="#ff00fe"/><stop offset=".835" stop-color="#ff00fe"/><stop offset=".917" stop-color="#ff00fe"/><stop offset="1" stop-color="#ff00fe"/></linearGradient><linearGradient id="w48" gradientUnits="userSpaceOnUse" x1="1468.8" y1="791.8" x2="1475.7" y2="939.1"><stop offset="0" stop-color="#ffffff"/><stop offset=".084" stop-color="#fffaff"/><stop offset=".169" stop-color="#ffeeff"/><stop offset=".253" stop-color="#fed9ff"/><stop offset=".338" stop-color="#febaff"/><stop offset=".422" stop-color="#fd8bff"/><stop offset=".505" stop-color="#fd71ff"/><stop offset=".589" stop-color="#fd50ff"/><stop offset=".671" stop-color="#fc04ff"/><stop offset=".753" stop-color="#fc00ff"/><stop offset=".836" stop-color="#fc00ff"/><stop offset=".918" stop-color="#fc00ff"/><stop offset="1" stop-color="#fc00ff"/></linearGradient><linearGradient id="w49" gradientUnits="userSpaceOnUse" x1="1468.8" y1="791.8" x2="1471.1" y2="940.5"><stop offset="0" stop-color="#ffffff"/><stop offset=".084" stop-color="#fffaff"/><stop offset=".168" stop-color="#feeeff"/><stop offset=".251" stop-color="#fdd9ff"/><stop offset=".335" stop-color="#fcbaff"/><stop offset=".419" stop-color="#fa8cff"/><stop offset=".503" stop-color="#fa71ff"/><stop offset=".589" stop-color="#f950ff"/><stop offset=".673" stop-color="#f803ff"/><stop offset=".755" stop-color="#f800ff"/><stop offset=".836" stop-color="#f800ff"/><stop offset=".918" stop-color="#f800ff"/><stop offset="1" stop-color="#f800ff"/></linearGradient><linearGradient id="w50" gradientUnits="userSpaceOnUse" x1="1468.8" y1="791.8" x2="1466.4" y2="941.9"><stop offset="0" stop-color="#ffffff"/><stop offset=".083" stop-color="#fffaff"/><stop offset=".166" stop-color="#feeeff"/><stop offset=".249" stop-color="#fcd9ff"/><stop offset=".332" stop-color="#fabbff"/><stop offset=".415" stop-color="#f78cff"/><stop offset=".501" stop-color="#f672ff"/><stop offset=".589" stop-color="#f550ff"/><stop offset=".674" stop-color="#f404ff"/><stop offset=".756" stop-color="#f400ff"/><stop offset=".837" stop-color="#f400ff"/><stop offset=".919" stop-color="#f500ff"/><stop offset="1" stop-color="#f500ff"/></linearGradient><linearGradient id="w51" gradientUnits="userSpaceOnUse" x1="1468.8" y1="791.8" x2="1461.6" y2="943.3"><stop offset="0" stop-color="#ffffff"/><stop offset=".082" stop-color="#fefbff"/><stop offset=".164" stop-color="#fdeeff"/><stop offset=".247" stop-color="#fbd9ff"/><stop offset=".329" stop-color="#f8bbff"/><stop offset=".411" stop-color="#f58dff"/><stop offset=".499" stop-color="#f373ff"/><stop offset=".589" stop-color="#f251ff"/><stop offset=".676" stop-color="#f004ff"/><stop offset=".757" stop-color="#f000ff"/><stop offset=".838" stop-color="#f000ff"/><stop offset=".919" stop-color="#f000ff"/><stop offset="1" stop-color="#f000ff"/></linearGradient><linearGradient id="w52" gradientUnits="userSpaceOnUse" x1="1468.8" y1="791.8" x2="1456.7" y2="944.7"><stop offset="0" stop-color="#ffffff"/><stop offset=".081" stop-color="#fefbff"/><stop offset=".163" stop-color="#fceeff"/><stop offset=".244" stop-color="#fad9ff"/><stop offset=".325" stop-color="#f6bbff"/><stop offset=".407" stop-color="#f28eff"/><stop offset=".496" stop-color="#f073ff"/><stop offset=".589" stop-color="#ee51ff"/><stop offset=".678" stop-color="#ec04ff"/><stop offset=".759" stop-color="#ec00ff"/><stop offset=".839" stop-color="#ec00ff"/><stop offset=".92" stop-color="#ec00ff"/><stop offset="1" stop-color="#ec00ff"/></linearGradient><linearGradient id="w53" gradientUnits="userSpaceOnUse" x1="1468.8" y1="791.8" x2="1451.7" y2="946.1"><stop offset="0" stop-color="#ffffff"/><stop offset=".08" stop-color="#fefbff"/><stop offset=".161" stop-color="#fceeff"/><stop offset=".241" stop-color="#f8daff"/><stop offset=".322" stop-color="#f4bcff"/><stop offset=".402" stop-color="#ef8fff"/><stop offset=".494" stop-color="#ec74ff"/><stop offset=".589" stop-color="#ea52ff"/><stop offset=".68" stop-color="#e803ff"/><stop offset=".76" stop-color="#e800ff"/><stop offset=".84" stop-color="#e800ff"/><stop offset=".92" stop-color="#e800ff"/><stop offset="1" stop-color="#e800ff"/></linearGradient><linearGradient id="w54" gradientUnits="userSpaceOnUse" x1="1468.8" y1="791.8" x2="1446.6" y2="947.6"><stop offset="0" stop-color="#ffffff"/><stop offset=".08" stop-color="#fefbff"/><stop offset=".159" stop-color="#fbeeff"/><stop offset=".239" stop-color="#f7daff"/><stop offset=".318" stop-color="#f2bcff"/><stop offset=".398" stop-color="#ec90ff"/><stop offset=".492" stop-color="#e975ff"/><stop offset=".589" stop-color="#e652ff"/><stop offset=".682" stop-color="#e403ff"/><stop offset=".762" stop-color="#e400ff"/><stop offset=".841" stop-color="#e400ff"/><stop offset=".921" stop-color="#e400ff"/><stop offset="1" stop-color="#e400ff"/></linearGradient><linearGradient id="w55" gradientUnits="userSpaceOnUse" x1="1468.8" y1="791.8" x2="1441.3" y2="949.1"><stop offset="0" stop-color="#ffffff"/><stop offset=".079" stop-color="#fefbff"/><stop offset=".157" stop-color="#fbeeff"/><stop offset=".236" stop-color="#f6daff"/><stop offset=".315" stop-color="#f0bdff"/><stop offset=".393" stop-color="#e992ff"/><stop offset=".489" stop-color="#e575ff"/><stop offset=".588" stop-color="#e252ff"/><stop offset=".685" stop-color="#df03ff"/><stop offset=".764" stop-color="#df00ff"/><stop offset=".842" stop-color="#df00ff"/><stop offset=".921" stop-color="#df00ff"/><stop offset="1" stop-color="#df00ff"/></linearGradient><linearGradient id="w56" gradientUnits="userSpaceOnUse" x1="1468.8" y1="791.8" x2="1435.9" y2="950.6"><stop offset="0" stop-color="#ffffff"/><stop offset=".078" stop-color="#fefbff"/><stop offset=".155" stop-color="#faeeff"/><stop offset=".233" stop-color="#f5daff"/><stop offset=".311" stop-color="#eebdff"/><stop offset=".388" stop-color="#e693ff"/><stop offset=".487" stop-color="#e276ff"/><stop offset=".588" stop-color="#de53ff"/><stop offset=".687" stop-color="#da03ff"/><stop offset=".765" stop-color="#da00ff"/><stop offset=".844" stop-color="#da00ff"/><stop offset=".922" stop-color="#da00ff"/><stop offset="1" stop-color="#da00ff"/></linearGradient><linearGradient id="w57" gradientUnits="userSpaceOnUse" x1="1468.8" y1="791.8" x2="1430.2" y2="952.2"><stop offset="0" stop-color="#ffffff"/><stop offset=".077" stop-color="#fefbff"/><stop offset=".153" stop-color="#faeeff"/><stop offset=".23" stop-color="#f4daff"/><stop offset=".307" stop-color="#ecbeff"/><stop offset=".383" stop-color="#e394ff"/><stop offset=".484" stop-color="#de77ff"/><stop offset=".588" stop-color="#d953ff"/><stop offset=".689" stop-color="#d603ff"/><stop offset=".767" stop-color="#d600ff"/><stop offset=".845" stop-color="#d600ff"/><stop offset=".922" stop-color="#d600ff"/><stop offset="1" stop-color="#d600ff"/></linearGradient><linearGradient id="w58" gradientUnits="userSpaceOnUse" x1="1468.8" y1="791.8" x2="1424.4" y2="953.9"><stop offset="0" stop-color="#ffffff"/><stop offset=".076" stop-color="#fdfbff"/><stop offset=".151" stop-color="#f9eeff"/><stop offset=".227" stop-color="#f3dbff"/><stop offset=".302" stop-color="#eabeff"/><stop offset=".378" stop-color="#e095ff"/><stop offset=".481" stop-color="#da78ff"/><stop offset=".588" stop-color="#d554ff"/><stop offset=".692" stop-color="#d103ff"/><stop offset=".769" stop-color="#d100ff"/><stop offset=".846" stop-color="#d100ff"/><stop offset=".923" stop-color="#d100ff"/><stop offset="1" stop-color="#d100ff"/></linearGradient><linearGradient id="w59" gradientUnits="userSpaceOnUse" x1="1468.8" y1="791.8" x2="1418.4" y2="955.6"><stop offset="0" stop-color="#ffffff"/><stop offset=".074" stop-color="#fdfbff"/><stop offset=".149" stop-color="#f9eeff"/><stop offset=".223" stop-color="#f2dbff"/><stop offset=".298" stop-color="#e8bfff"/><stop offset=".372" stop-color="#dd96ff"/><stop offset=".479" stop-color="#d678ff"/><stop offset=".588" stop-color="#d054ff"/><stop offset=".695" stop-color="#cb03ff"/><stop offset=".771" stop-color="#cb00ff"/><stop offset=".847" stop-color="#cb00ff"/><stop offset=".924" stop-color="#cb00ff"/><stop offset="1" stop-color="#cb00ff"/></linearGradient><linearGradient id="w60" gradientUnits="userSpaceOnUse" x1="1468.8" y1="791.8" x2="1412.1" y2="957.4"><stop offset="0" stop-color="#ffffff"/><stop offset=".073" stop-color="#fdfbff"/><stop offset=".147" stop-color="#f8efff"/><stop offset=".22" stop-color="#f0dbff"/><stop offset=".293" stop-color="#e6c0ff"/><stop offset=".366" stop-color="#da98ff"/><stop offset=".476" stop-color="#d279ff"/><stop offset=".588" stop-color="#cb54ff"/><stop offset=".698" stop-color="#c603ff"/><stop offset=".773" stop-color="#c600ff"/><stop offset=".849" stop-color="#c600ff"/><stop offset=".924" stop-color="#c600ff"/><stop offset="1" stop-color="#c600ff"/></linearGradient><linearGradient id="w61" gradientUnits="userSpaceOnUse" x1="1468.8" y1="791.8" x2="1405.5" y2="959.2"><stop offset="0" stop-color="#ffffff"/><stop offset=".072" stop-color="#fdfbff"/><stop offset=".144" stop-color="#f8efff"/><stop offset=".216" stop-color="#efdcff"/><stop offset=".288" stop-color="#e4c0ff"/><stop offset=".36" stop-color="#d799ff"/><stop offset=".473" stop-color="#ce7aff"/><stop offset=".588" stop-color="#c655ff"/><stop offset=".701" stop-color="#c003ff"/><stop offset=".775" stop-color="#c000ff"/><stop offset=".85" stop-color="#c000ff"/><stop offset=".925" stop-color="#c000ff"/><stop offset="1" stop-color="#c000ff"/></linearGradient><linearGradient id="w62" gradientUnits="userSpaceOnUse" x1="1468.8" y1="791.8" x2="1398.6" y2="961.1"><stop offset="0" stop-color="#ffffff"/><stop offset=".071" stop-color="#fdfbff"/><stop offset=".142" stop-color="#f7efff"/><stop offset=".212" stop-color="#eedcff"/><stop offset=".283" stop-color="#e2c1ff"/><stop offset=".354" stop-color="#d39aff"/><stop offset=".469" stop-color="#ca7bff"/><stop offset=".588" stop-color="#c155ff"/><stop offset=".704" stop-color="#b903ff"/><stop offset=".778" stop-color="#b900ff"/><stop offset=".852" stop-color="#b900ff"/><stop offset=".926" stop-color="#b900ff"/><stop offset="1" stop-color="#b900ff"/></linearGradient><linearGradient id="w63" gradientUnits="userSpaceOnUse" x1="1468.8" y1="791.8" x2="1391.4" y2="963.2"><stop offset="0" stop-color="#ffffff"/><stop offset=".069" stop-color="#fdfbff"/><stop offset=".139" stop-color="#f6efff"/><stop offset=".208" stop-color="#eddcff"/><stop offset=".278" stop-color="#e0c2ff"/><stop offset=".347" stop-color="#d09cff"/><stop offset=".466" stop-color="#c57cff"/><stop offset=".588" stop-color="#bb56ff"/><stop offset=".707" stop-color="#b203ff"/><stop offset=".78" stop-color="#b200ff"/><stop offset=".854" stop-color="#b200ff"/><stop offset=".927" stop-color="#b200ff"/><stop offset="1" stop-color="#b200ff"/></linearGradient><linearGradient id="w64" gradientUnits="userSpaceOnUse" x1="1468.8" y1="791.8" x2="1383.8" y2="965.3"><stop offset="0" stop-color="#ffffff"/><stop offset=".068" stop-color="#fdfbff"/><stop offset=".136" stop-color="#f6efff"/><stop offset=".204" stop-color="#ecddff"/><stop offset=".272" stop-color="#dec2ff"/><stop offset=".34" stop-color="#cd9dff"/><stop offset=".463" stop-color="#c07cff"/><stop offset=".589" stop-color="#b556ff"/><stop offset=".711" stop-color="#ab03ff"/><stop offset=".783" stop-color="#ab00ff"/><stop offset=".855" stop-color="#ab00ff"/><stop offset=".928" stop-color="#ab00ff"/><stop offset="1" stop-color="#ab00ff"/></linearGradient><linearGradient id="w65" gradientUnits="userSpaceOnUse" x1="1468.8" y1="791.8" x2="1375.7" y2="967.6"><stop offset="0" stop-color="#ffffff"/><stop offset=".067" stop-color="#fcfbff"/><stop offset=".133" stop-color="#f5efff"/><stop offset=".2" stop-color="#eaddff"/><stop offset=".267" stop-color="#dcc3ff"/><stop offset=".333" stop-color="#c99fff"/><stop offset=".459" stop-color="#bb7dff"/><stop offset=".589" stop-color="#ae56ff"/><stop offset=".714" stop-color="#a302ff"/><stop offset=".786" stop-color="#a300ff"/><stop offset=".857" stop-color="#a300ff"/><stop offset=".929" stop-color="#a300ff"/><stop offset="1" stop-color="#a300ff"/></linearGradient><linearGradient id="w66" gradientUnits="userSpaceOnUse" x1="1468.8" y1="791.8" x2="1367.1" y2="970.0"><stop offset="0" stop-color="#ffffff"/><stop offset=".065" stop-color="#fcfbff"/><stop offset=".13" stop-color="#f5f0ff"/><stop offset=".195" stop-color="#e9ddff"/><stop offset=".261" stop-color="#dac4ff"/><stop offset=".326" stop-color="#c6a0ff"/><stop offset=".455" stop-color="#b67eff"/><stop offset=".589" stop-color="#a757ff"/><stop offset=".718" stop-color="#9a03ff"/><stop offset=".789" stop-color="#9a00ff"/><stop offset=".859" stop-color="#9a00ff"/><stop offset=".93" stop-color="#9a00ff"/><stop offset="1" stop-color="#9a00ff"/></linearGradient><linearGradient id="w67" gradientUnits="userSpaceOnUse" x1="1468.8" y1="791.8" x2="1357.9" y2="972.7"><stop offset="0" stop-color="#ffffff"/><stop offset=".064" stop-color="#fcfbff"/><stop offset=".127" stop-color="#f4f0ff"/><stop offset=".191" stop-color="#e8deff"/><stop offset=".254" stop-color="#d7c5ff"/><stop offset=".318" stop-color="#c2a2ff"/><stop offset=".451" stop-color="#b07fff"/><stop offset=".589" stop-color="#9f57ff"/><stop offset=".723" stop-color="#9102ff"/><stop offset=".792" stop-color="#9100ff"/><stop offset=".861" stop-color="#9100ff"/><stop offset=".931" stop-color="#9100ff"/><stop offset="1" stop-color="#9100ff"/></linearGradient><linearGradient id="w68" gradientUnits="userSpaceOnUse" x1="1468.8" y1="791.8" x2="1348.1" y2="975.5"><stop offset="0" stop-color="#ffffff"/><stop offset=".062" stop-color="#fcfbff"/><stop offset=".124" stop-color="#f4f0ff"/><stop offset=".186" stop-color="#e7deff"/><stop offset=".248" stop-color="#d5c6ff"/><stop offset=".309" stop-color="#bfa4ff"/><stop offset=".447" stop-color="#a980ff"/><stop offset=".589" stop-color="#9657ff"/><stop offset=".727" stop-color="#8602ff"/><stop offset=".795" stop-color="#8600ff"/><stop offset=".864" stop-color="#8600ff"/><stop offset=".932" stop-color="#8600ff"/><stop offset="1" stop-color="#8600ff"/></linearGradient><linearGradient id="w69" gradientUnits="userSpaceOnUse" x1="1468.8" y1="791.8" x2="1337.9" y2="978.0"><stop offset="0" stop-color="#ffffff"/><stop offset=".06" stop-color="#fcfbff"/><stop offset=".121" stop-color="#f3f0ff"/><stop offset=".181" stop-color="#e5dfff"/><stop offset=".241" stop-color="#d3c7ff"/><stop offset=".302" stop-color="#bba5ff"/><stop offset=".444" stop-color="#a381ff"/><stop offset=".592" stop-color="#8d58ff"/><stop offset=".734" stop-color="#7901ff"/><stop offset=".801" stop-color="#7900ff"/><stop offset=".867" stop-color="#7900ff"/><stop offset=".934" stop-color="#7900ff"/><stop offset="1" stop-color="#7700ff"/></linearGradient><linearGradient id="w70" gradientUnits="userSpaceOnUse" x1="1468.8" y1="791.8" x2="1330.1" y2="976.5"><stop offset="0" stop-color="#ffffff"/><stop offset=".06" stop-color="#fcfbff"/><stop offset=".12" stop-color="#f2f0ff"/><stop offset=".18" stop-color="#e4dfff"/><stop offset=".24" stop-color="#d1c8ff"/><stop offset=".3" stop-color="#b7a7ff"/><stop offset=".452" stop-color="#9b81ff"/><stop offset=".608" stop-color="#8158ff"/><stop offset=".759" stop-color="#6901ff"/><stop offset=".819" stop-color="#6900ff"/><stop offset=".88" stop-color="#6900ff"/><stop offset=".94" stop-color="#6900ff"/><stop offset="1" stop-color="#6900ff"/></linearGradient><linearGradient id="w71" gradientUnits="userSpaceOnUse" x1="1468.8" y1="791.8" x2="1324.4" y2="972.0"><stop offset="0" stop-color="#ffffff"/><stop offset=".061" stop-color="#fbfbff"/><stop offset=".121" stop-color="#f2f1ff"/><stop offset=".182" stop-color="#e3e0ff"/><stop offset=".243" stop-color="#cec9ff"/><stop offset=".303" stop-color="#b3a9ff"/><stop offset=".467" stop-color="#9382ff"/><stop offset=".635" stop-color="#7458ff"/><stop offset=".799" stop-color="#5500ff"/><stop offset=".849" stop-color="#5500ff"/><stop offset=".899" stop-color="#5500ff"/><stop offset=".95" stop-color="#5500ff"/><stop offset="1" stop-color="#5500ff"/></linearGradient><linearGradient id="w72" gradientUnits="userSpaceOnUse" x1="1468.8" y1="791.8" x2="1319.5" y2="966.6"><stop offset="0" stop-color="#ffffff"/><stop offset=".062" stop-color="#fbfbff"/><stop offset=".123" stop-color="#f1f1ff"/><stop offset=".185" stop-color="#e2e0ff"/><stop offset=".246" stop-color="#cccaff"/><stop offset=".308" stop-color="#afabff"/><stop offset=".486" stop-color="#8a83ff"/><stop offset=".669" stop-color="#6458ff"/><stop offset=".847" stop-color="#3701ff"/><stop offset=".886" stop-color="#3700ff"/><stop offset=".924" stop-color="#3700ff"/><stop offset=".962" stop-color="#3700ff"/><stop offset="1" stop-color="#3700ff"/></linearGradient><linearGradient id="w73" gradientUnits="userSpaceOnUse" x1="1468.8" y1="791.8" x2="1314.7" y2="961.1"><stop offset="0" stop-color="#ffffff"/><stop offset=".063" stop-color="#fbfbff"/><stop offset=".125" stop-color="#f1f1ff"/><stop offset=".188" stop-color="#e0e1ff"/><stop offset=".25" stop-color="#c9cbff"/><stop offset=".313" stop-color="#aaadff"/><stop offset=".49" stop-color="#8387ff"/><stop offset=".674" stop-color="#5860ff"/><stop offset=".851" stop-color="#002eff"/><stop offset=".888" stop-color="#002eff"/><stop offset=".926" stop-color="#002eff"/><stop offset=".963" stop-color="#002eff"/><stop offset="1" stop-color="#002eff"/></linearGradient><linearGradient id="w74" gradientUnits="userSpaceOnUse" x1="1468.8" y1="791.8" x2="1310.2" y2="955.5"><stop offset="0" stop-color="#ffffff"/><stop offset=".063" stop-color="#fbfbff"/><stop offset=".127" stop-color="#f0f1ff"/><stop offset=".19" stop-color="#dfe2ff"/><stop offset=".254" stop-color="#c7ccff"/><stop offset=".317" stop-color="#a6afff"/><stop offset=".473" stop-color="#8190ff"/><stop offset=".633" stop-color="#5771ff"/><stop offset=".788" stop-color="#0050ff"/><stop offset=".841" stop-color="#0050ff"/><stop offset=".894" stop-color="#0050ff"/><stop offset=".947" stop-color="#0050ff"/><stop offset="1" stop-color="#0050ff"/></linearGradient><linearGradient id="w75" gradientUnits="userSpaceOnUse" x1="1468.8" y1="791.8" x2="1305.7" y2="949.8"><stop offset="0" stop-color="#ffffff"/><stop offset=".064" stop-color="#fbfbff"/><stop offset=".129" stop-color="#eff2ff"/><stop offset=".193" stop-color="#dde2ff"/><stop offset=".258" stop-color="#c4cdff"/><stop offset=".322" stop-color="#a1b1ff"/><stop offset=".458" stop-color="#7e97ff"/><stop offset=".598" stop-color="#567eff"/><stop offset=".734" stop-color="#0065ff"/><stop offset=".8" stop-color="#0065ff"/><stop offset=".867" stop-color="#0065ff"/><stop offset=".933" stop-color="#0065ff"/><stop offset="1" stop-color="#0065ff"/></linearGradient><linearGradient id="w76" gradientUnits="userSpaceOnUse" x1="1468.8" y1="791.8" x2="1301.6" y2="943.9"><stop offset="0" stop-color="#ffffff"/><stop offset=".066" stop-color="#fbfbff"/><stop offset=".131" stop-color="#eff2ff"/><stop offset=".197" stop-color="#dce3ff"/><stop offset=".262" stop-color="#c2ceff"/><stop offset=".328" stop-color="#9cb3ff"/><stop offset=".447" stop-color="#7b9eff"/><stop offset=".57" stop-color="#5589ff"/><stop offset=".689" stop-color="#0075ff"/><stop offset=".766" stop-color="#0075ff"/><stop offset=".844" stop-color="#0075ff"/><stop offset=".922" stop-color="#0075ff"/><stop offset="1" stop-color="#0075ff"/></linearGradient><linearGradient id="w77" gradientUnits="userSpaceOnUse" x1="1468.8" y1="791.8" x2="1297.7" y2="937.9"><stop offset="0" stop-color="#ffffff"/><stop offset=".067" stop-color="#fbfcff"/><stop offset=".133" stop-color="#eef2ff"/><stop offset=".2" stop-color="#dbe4ff"/><stop offset=".267" stop-color="#bfd0ff"/><stop offset=".333" stop-color="#97b5ff"/><stop offset=".437" stop-color="#78a3ff"/><stop offset=".545" stop-color="#5392ff"/><stop offset=".649" stop-color="#0083ff"/><stop offset=".737" stop-color="#0083ff"/><stop offset=".825" stop-color="#0083ff"/><stop offset=".912" stop-color="#0083ff"/><stop offset="1" stop-color="#0083ff"/></linearGradient><linearGradient id="w78" gradientUnits="userSpaceOnUse" x1="1468.8" y1="791.8" x2="1293.9" y2="931.9"><stop offset="0" stop-color="#ffffff"/><stop offset=".068" stop-color="#fafcff"/><stop offset=".135" stop-color="#eef3ff"/><stop offset=".203" stop-color="#d9e4ff"/><stop offset=".271" stop-color="#bcd1ff"/><stop offset=".339" stop-color="#92b8ff"/><stop offset=".43" stop-color="#74a9ff"/><stop offset=".524" stop-color="#519bff"/><stop offset=".615" stop-color="#008eff"/><stop offset=".711" stop-color="#008eff"/><stop offset=".807" stop-color="#008eff"/><stop offset=".904" stop-color="#008eff"/><stop offset="1" stop-color="#008eff"/></linearGradient><linearGradient id="w79" gradientUnits="userSpaceOnUse" x1="1468.8" y1="791.8" x2="1290.2" y2="925.9"><stop offset="0" stop-color="#ffffff"/><stop offset=".069" stop-color="#fafcff"/><stop offset=".138" stop-color="#edf3ff"/><stop offset=".206" stop-color="#d8e5ff"/><stop offset=".275" stop-color="#b9d2ff"/><stop offset=".344" stop-color="#8cbaff"/><stop offset=".423" stop-color="#71aeff"/><stop offset=".505" stop-color="#4fa2ff"/><stop offset=".584" stop-color="#0097ff"/><stop offset=".688" stop-color="#0097ff"/><stop offset=".792" stop-color="#0097ff"/><stop offset=".896" stop-color="#0097ff"/><stop offset="1" stop-color="#0097ff"/></linearGradient><linearGradient id="w80" gradientUnits="userSpaceOnUse" x1="1468.8" y1="791.8" x2="1286.8" y2="919.7"><stop offset="0" stop-color="#ffffff"/><stop offset=".07" stop-color="#fafcff"/><stop offset=".14" stop-color="#ecf3ff"/><stop offset=".21" stop-color="#d6e6ff"/><stop offset=".28" stop-color="#b6d4ff"/><stop offset=".349" stop-color="#86bdff"/><stop offset=".418" stop-color="#6cb3ff"/><stop offset=".489" stop-color="#4ca9ff"/><stop offset=".558" stop-color="#00a0ff"/><stop offset=".668" stop-color="#00a0ff"/><stop offset=".779" stop-color="#00a0ff"/><stop offset=".889" stop-color="#00a0ff"/><stop offset="1" stop-color="#00a0ff"/></linearGradient><linearGradient id="w81" gradientUnits="userSpaceOnUse" x1="1468.8" y1="791.8" x2="1283.4" y2="913.6"><stop offset="0" stop-color="#ffffff"/><stop offset=".071" stop-color="#fafcff"/><stop offset=".142" stop-color="#ecf4ff"/><stop offset=".213" stop-color="#d5e7ff"/><stop offset=".284" stop-color="#b3d6ff"/><stop offset=".355" stop-color="#7fbfff"/><stop offset=".414" stop-color="#68b7ff"/><stop offset=".474" stop-color="#49afff"/><stop offset=".533" stop-color="#00a8ff"/><stop offset=".65" stop-color="#00a8ff"/><stop offset=".767" stop-color="#00a8ff"/><stop offset=".883" stop-color="#00a8ff"/><stop offset="1" stop-color="#00a8ff"/></linearGradient><linearGradient id="w82" gradientUnits="userSpaceOnUse" x1="1468.8" y1="791.8" x2="1280.1" y2="907.4"><stop offset="0" stop-color="#ffffff"/><stop offset=".072" stop-color="#fafcff"/><stop offset=".144" stop-color="#ebf4ff"/><stop offset=".216" stop-color="#d3e8ff"/><stop offset=".288" stop-color="#b0d7ff"/><stop offset=".36" stop-color="#79c2ff"/><stop offset=".41" stop-color="#62bbff"/><stop offset=".462" stop-color="#46b5ff"/><stop offset=".512" stop-color="#00afff"/><stop offset=".634" stop-color="#00afff"/><stop offset=".756" stop-color="#00afff"/><stop offset=".878" stop-color="#00afff"/><stop offset="1" stop-color="#00afff"/></linearGradient><linearGradient id="w83" gradientUnits="userSpaceOnUse" x1="1468.8" y1="791.8" x2="1276.8" y2="901.3"><stop offset="0" stop-color="#ffffff"/><stop offset=".073" stop-color="#fafcff"/><stop offset=".146" stop-color="#ebf5ff"/><stop offset=".219" stop-color="#d2e9ff"/><stop offset=".292" stop-color="#add9ff"/><stop offset=".365" stop-color="#71c5ff"/><stop offset=".407" stop-color="#5dc0ff"/><stop offset=".45" stop-color="#42bbff"/><stop offset=".492" stop-color="#00b6ff"/><stop offset=".619" stop-color="#00b6ff"/><stop offset=".746" stop-color="#00b6ff"/><stop offset=".873" stop-color="#00b6ff"/><stop offset="1" stop-color="#00b6ff"/></linearGradient><linearGradient id="w84" gradientUnits="userSpaceOnUse" x1="1468.8" y1="791.8" x2="1273.6" y2="895.2"><stop offset="0" stop-color="#ffffff"/><stop offset=".074" stop-color="#f9fcff"/><stop offset=".148" stop-color="#eaf5ff"/><stop offset=".222" stop-color="#d0eaff"/><stop offset=".296" stop-color="#aadbff"/><stop offset=".37" stop-color="#69c7ff"/><stop offset=".404" stop-color="#57c4ff"/><stop offset=".439" stop-color="#3ec0ff"/><stop offset=".473" stop-color="#00bcff"/><stop offset=".605" stop-color="#00bcff"/><stop offset=".737" stop-color="#00bcff"/><stop offset=".868" stop-color="#00bcff"/><stop offset="1" stop-color="#00bcff"/></linearGradient><linearGradient id="w85" gradientUnits="userSpaceOnUse" x1="1468.8" y1="791.8" x2="1270.3" y2="889.0"><stop offset="0" stop-color="#ffffff"/><stop offset=".075" stop-color="#f9fcff"/><stop offset=".15" stop-color="#e9f5ff"/><stop offset=".224" stop-color="#cfebff"/><stop offset=".299" stop-color="#a7dcff"/><stop offset=".374" stop-color="#61caff"/><stop offset=".401" stop-color="#50c8ff"/><stop offset=".429" stop-color="#39c5ff"/><stop offset=".456" stop-color="#00c2ff"/><stop offset=".592" stop-color="#00c2ff"/><stop offset=".728" stop-color="#00c2ff"/><stop offset=".864" stop-color="#00c2ff"/><stop offset="1" stop-color="#00c2ff"/></linearGradient><linearGradient id="w86" gradientUnits="userSpaceOnUse" x1="1468.8" y1="791.8" x2="1267.1" y2="882.9"><stop offset="0" stop-color="#ffffff"/><stop offset=".076" stop-color="#f9fdff"/><stop offset=".151" stop-color="#e9f6ff"/><stop offset=".227" stop-color="#ceecff"/><stop offset=".302" stop-color="#a4deff"/><stop offset=".378" stop-color="#57cdff"/><stop offset=".398" stop-color="#48cbff"/><stop offset=".419" stop-color="#34c9ff"/><stop offset=".44" stop-color="#00c7ff"/><stop offset=".58" stop-color="#00c7ff"/><stop offset=".72" stop-color="#00c7ff"/><stop offset=".86" stop-color="#00c7ff"/><stop offset="1" stop-color="#00c7ff"/></linearGradient><linearGradient id="w87" gradientUnits="userSpaceOnUse" x1="1468.8" y1="791.8" x2="1263.9" y2="876.7"><stop offset="0" stop-color="#ffffff"/><stop offset=".076" stop-color="#f9fdff"/><stop offset=".152" stop-color="#e8f7ff"/><stop offset=".229" stop-color="#ccedff"/><stop offset=".305" stop-color="#a0e0ff"/><stop offset=".381" stop-color="#4bd1ff"/><stop offset=".396" stop-color="#3fcfff"/><stop offset=".411" stop-color="#2dceff"/><stop offset=".425" stop-color="#00cdff"/><stop offset=".569" stop-color="#00cdff"/><stop offset=".713" stop-color="#00cdff"/><stop offset=".856" stop-color="#00cdff"/><stop offset="1" stop-color="#00cdff"/></linearGradient><linearGradient id="w88" gradientUnits="userSpaceOnUse" x1="1468.8" y1="791.8" x2="1260.7" y2="870.4"><stop offset="0" stop-color="#ffffff"/><stop offset=".077" stop-color="#f9fdff"/><stop offset=".154" stop-color="#e8f7ff"/><stop offset=".23" stop-color="#cbeeff"/><stop offset=".307" stop-color="#9de2ff"/><stop offset=".384" stop-color="#3ed4ff"/><stop offset=".393" stop-color="#33d3ff"/><stop offset=".402" stop-color="#25d2ff"/><stop offset=".411" stop-color="#00d2ff"/><stop offset=".559" stop-color="#00d2ff"/><stop offset=".706" stop-color="#00d2ff"/><stop offset=".853" stop-color="#00d2ff"/><stop offset="1" stop-color="#00d2ff"/></linearGradient><linearGradient id="w89" gradientUnits="userSpaceOnUse" x1="1468.8" y1="791.8" x2="1258.1" y2="864.0"><stop offset="0" stop-color="#ffffff"/><stop offset=".078" stop-color="#f9fdff"/><stop offset=".155" stop-color="#e7f8ff"/><stop offset=".232" stop-color="#c9efff"/><stop offset=".31" stop-color="#9ae5ff"/><stop offset=".387" stop-color="#2bd7ff"/><stop offset=".541" stop-color="#00d6ff"/><stop offset=".694" stop-color="#00d6ff"/><stop offset=".847" stop-color="#00d6ff"/><stop offset="1" stop-color="#00d6ff"/></linearGradient><linearGradient id="w90" gradientUnits="userSpaceOnUse" x1="1468.8" y1="791.8" x2="1255.4" y2="857.5"><stop offset="0" stop-color="#ffffff"/><stop offset=".078" stop-color="#f9fdff"/><stop offset=".156" stop-color="#e6f8ff"/><stop offset=".234" stop-color="#c8f1ff"/><stop offset=".312" stop-color="#96e7ff"/><stop offset=".39" stop-color="#00dbff"/><stop offset=".543" stop-color="#00dbff"/><stop offset=".695" stop-color="#00dbff"/><stop offset=".848" stop-color="#00dbff"/><stop offset="1" stop-color="#00dbff"/></linearGradient><linearGradient id="w91" gradientUnits="userSpaceOnUse" x1="1468.8" y1="791.8" x2="1252.7" y2="850.9"><stop offset="0" stop-color="#ffffff"/><stop offset=".078" stop-color="#f8fdff"/><stop offset=".157" stop-color="#e6f9ff"/><stop offset=".235" stop-color="#c6f2ff"/><stop offset=".314" stop-color="#93e9ff"/><stop offset=".392" stop-color="#00dfff"/><stop offset=".544" stop-color="#00dfff"/><stop offset=".696" stop-color="#00dfff"/><stop offset=".848" stop-color="#00dfff"/><stop offset="1" stop-color="#00dfff"/></linearGradient><linearGradient id="w92" gradientUnits="userSpaceOnUse" x1="1468.8" y1="791.8" x2="1250.0" y2="844.3"><stop offset="0" stop-color="#ffffff"/><stop offset=".079" stop-color="#f8feff"/><stop offset=".158" stop-color="#e5faff"/><stop offset=".236" stop-color="#c5f3ff"/><stop offset=".315" stop-color="#90ebff"/><stop offset=".394" stop-color="#03e3ff"/><stop offset=".545" stop-color="#00e3ff"/><stop offset=".697" stop-color="#00e3ff"/><stop offset=".848" stop-color="#00e3ff"/><stop offset="1" stop-color="#00e3ff"/></linearGradient><linearGradient id="w93" gradientUnits="userSpaceOnUse" x1="1468.8" y1="791.8" x2="1247.4" y2="837.7"><stop offset="0" stop-color="#ffffff"/><stop offset=".079" stop-color="#f8feff"/><stop offset=".158" stop-color="#e5faff"/><stop offset=".237" stop-color="#c4f5ff"/><stop offset=".316" stop-color="#8ceeff"/><stop offset=".395" stop-color="#02e7ff"/><stop offset=".546" stop-color="#00e7ff"/><stop offset=".697" stop-color="#00e7ff"/><stop offset=".849" stop-color="#00e7ff"/><stop offset="1" stop-color="#00e7ff"/></linearGradient><linearGradient id="w94" gradientUnits="userSpaceOnUse" x1="1468.8" y1="791.8" x2="1244.8" y2="830.9"><stop offset="0" stop-color="#ffffff"/><stop offset=".079" stop-color="#f8feff"/><stop offset=".158" stop-color="#e5fbff"/><stop offset=".237" stop-color="#c3f6ff"/><stop offset=".316" stop-color="#89f0ff"/><stop offset=".395" stop-color="#00ebff"/><stop offset=".546" stop-color="#00ebff"/><stop offset=".698" stop-color="#00ebff"/><stop offset=".849" stop-color="#00ebff"/><stop offset="1" stop-color="#00ebff"/></linearGradient><linearGradient id="w95" gradientUnits="userSpaceOnUse" x1="1468.8" y1="791.8" x2="1242.2" y2="824.1"><stop offset="0" stop-color="#ffffff"/><stop offset=".079" stop-color="#f8feff"/><stop offset=".158" stop-color="#e4fcff"/><stop offset=".237" stop-color="#c1f8ff"/><stop offset=".316" stop-color="#86f3ff"/><stop offset=".395" stop-color="#00efff"/><stop offset=".546" stop-color="#00efff"/><stop offset=".697" stop-color="#00efff"/><stop offset=".849" stop-color="#00efff"/><stop offset="1" stop-color="#00efff"/></linearGradient><linearGradient id="w96" gradientUnits="userSpaceOnUse" x1="1468.8" y1="791.8" x2="1239.6" y2="817.1"><stop offset="0" stop-color="#ffffff"/><stop offset=".079" stop-color="#f8feff"/><stop offset=".157" stop-color="#e4fcff"/><stop offset=".236" stop-color="#c0f9ff"/><stop offset=".315" stop-color="#83f6ff"/><stop offset=".394" stop-color="#00f3ff"/><stop offset=".545" stop-color="#00f3ff"/><stop offset=".697" stop-color="#00f3ff"/><stop offset=".848" stop-color="#00f3ff"/><stop offset="1" stop-color="#00f3ff"/></linearGradient><linearGradient id="w97" gradientUnits="userSpaceOnUse" x1="1468.8" y1="791.8" x2="1236.9" y2="810.1"><stop offset="0" stop-color="#ffffff"/><stop offset=".078" stop-color="#f8feff"/><stop offset=".157" stop-color="#e4fdff"/><stop offset=".235" stop-color="#c0fbff"/><stop offset=".313" stop-color="#80f8ff"/><stop offset=".391" stop-color="#01f6ff"/><stop offset=".544" stop-color="#00f6ff"/><stop offset=".696" stop-color="#00f6ff"/><stop offset=".848" stop-color="#00f6ff"/><stop offset="1" stop-color="#00f6ff"/></linearGradient><linearGradient id="w98" gradientUnits="userSpaceOnUse" x1="1468.8" y1="791.8" x2="1234.4" y2="802.9"><stop offset="0" stop-color="#ffffff"/><stop offset=".078" stop-color="#f8ffff"/><stop offset=".156" stop-color="#e3feff"/><stop offset=".233" stop-color="#bffdff"/><stop offset=".311" stop-color="#7dfbff"/><stop offset=".389" stop-color="#00faff"/><stop offset=".542" stop-color="#00faff"/><stop offset=".694" stop-color="#00faff"/><stop offset=".847" stop-color="#00faff"/><stop offset="1" stop-color="#00faff"/></linearGradient><linearGradient id="w99" gradientUnits="userSpaceOnUse" x1="1468.8" y1="791.8" x2="1231.8" y2="795.6"><stop offset="0" stop-color="#ffffff"/><stop offset=".077" stop-color="#f8ffff"/><stop offset=".154" stop-color="#e3ffff"/><stop offset=".231" stop-color="#befeff"/><stop offset=".308" stop-color="#7bfeff"/><stop offset=".385" stop-color="#00fdff"/><stop offset=".539" stop-color="#00fdff"/><stop offset=".693" stop-color="#00fdff"/><stop offset=".846" stop-color="#00fdff"/><stop offset="1" stop-color="#00fdff"/></linearGradient><linearGradient id="w100" gradientUnits="userSpaceOnUse" x1="1468.8" y1="791.8" x2="1229.2" y2="788.1"><stop offset="0" stop-color="#ffffff"/><stop offset=".076" stop-color="#f8ffff"/><stop offset=".153" stop-color="#e3ffff"/><stop offset=".229" stop-color="#bdfffe"/><stop offset=".305" stop-color="#7bfffd"/><stop offset=".381" stop-color="#00fffd"/><stop offset=".536" stop-color="#00fffd"/><stop offset=".691" stop-color="#00fffd"/><stop offset=".845" stop-color="#00fffd"/><stop offset="1" stop-color="#00fffd"/></linearGradient><linearGradient id="w101" gradientUnits="userSpaceOnUse" x1="1468.8" y1="791.8" x2="1226.8" y2="780.4"><stop offset="0" stop-color="#ffffff"/><stop offset=".075" stop-color="#f8ffff"/><stop offset=".151" stop-color="#e2fffe"/><stop offset=".226" stop-color="#bcfffc"/><stop offset=".301" stop-color="#7bfffb"/><stop offset=".377" stop-color="#00fffa"/><stop offset=".533" stop-color="#00fffa"/><stop offset=".688" stop-color="#00fffa"/><stop offset=".844" stop-color="#00fffa"/><stop offset="1" stop-color="#00fffa"/></linearGradient><linearGradient id="w102" gradientUnits="userSpaceOnUse" x1="1468.8" y1="791.8" x2="1224.7" y2="772.6"><stop offset="0" stop-color="#ffffff"/><stop offset=".074" stop-color="#f8fffe"/><stop offset=".149" stop-color="#e2fffd"/><stop offset=".223" stop-color="#bbfffb"/><stop offset=".297" stop-color="#7bfff8"/><stop offset=".372" stop-color="#01fff6"/><stop offset=".529" stop-color="#00fff6"/><stop offset=".686" stop-color="#00fff6"/><stop offset=".843" stop-color="#00fff6"/><stop offset="1" stop-color="#00fff6"/></linearGradient><linearGradient id="w103" gradientUnits="userSpaceOnUse" x1="1468.8" y1="791.8" x2="1222.5" y2="764.6"><stop offset="0" stop-color="#ffffff"/><stop offset=".073" stop-color="#f7fffe"/><stop offset=".146" stop-color="#e2fffc"/><stop offset=".22" stop-color="#bbfff9"/><stop offset=".293" stop-color="#7bfff6"/><stop offset=".366" stop-color="#00fff3"/><stop offset=".525" stop-color="#00fff3"/><stop offset=".683" stop-color="#00fff3"/><stop offset=".842" stop-color="#00fff3"/><stop offset="1" stop-color="#00fff3"/></linearGradient><linearGradient id="w104" gradientUnits="userSpaceOnUse" x1="1468.8" y1="791.8" x2="1220.3" y2="756.5"><stop offset="0" stop-color="#ffffff"/><stop offset=".072" stop-color="#f7fffe"/><stop offset=".144" stop-color="#e1fffc"/><stop offset=".216" stop-color="#bafff8"/><stop offset=".288" stop-color="#7bfff3"/><stop offset=".36" stop-color="#00fff0"/><stop offset=".52" stop-color="#00fff0"/><stop offset=".68" stop-color="#00fff0"/><stop offset=".84" stop-color="#00fff0"/><stop offset="1" stop-color="#00fff0"/></linearGradient><linearGradient id="w105" gradientUnits="userSpaceOnUse" x1="1468.8" y1="791.8" x2="1218.2" y2="748.1"><stop offset="0" stop-color="#ffffff"/><stop offset=".071" stop-color="#f7fffe"/><stop offset=".141" stop-color="#e1fffb"/><stop offset=".212" stop-color="#bafff6"/><stop offset=".283" stop-color="#7bfff1"/><stop offset=".353" stop-color="#00ffed"/><stop offset=".515" stop-color="#00ffed"/><stop offset=".677" stop-color="#00ffed"/><stop offset=".838" stop-color="#00ffed"/><stop offset="1" stop-color="#00ffed"/></linearGradient><linearGradient id="w106" gradientUnits="userSpaceOnUse" x1="1468.8" y1="791.8" x2="1216.4" y2="739.6"><stop offset="0" stop-color="#ffffff"/><stop offset=".069" stop-color="#f7fffe"/><stop offset=".139" stop-color="#e1fffa"/><stop offset=".208" stop-color="#bafff5"/><stop offset=".277" stop-color="#7bffef"/><stop offset=".346" stop-color="#02ffea"/><stop offset=".51" stop-color="#00ffea"/><stop offset=".673" stop-color="#00ffea"/><stop offset=".837" stop-color="#00ffea"/><stop offset="1" stop-color="#00ffea"/></linearGradient><linearGradient id="w107" gradientUnits="userSpaceOnUse" x1="1468.8" y1="791.8" x2="1214.6" y2="730.8"><stop offset="0" stop-color="#ffffff"/><stop offset=".068" stop-color="#f7fffe"/><stop offset=".136" stop-color="#e1fffa"/><stop offset=".203" stop-color="#bafff4"/><stop offset=".271" stop-color="#7bffed"/><stop offset=".339" stop-color="#03ffe8"/><stop offset=".504" stop-color="#00ffe8"/><stop offset=".669" stop-color="#00ffe8"/><stop offset=".835" stop-color="#00ffe8"/><stop offset="1" stop-color="#00ffe8"/></linearGradient><linearGradient id="w108" gradientUnits="userSpaceOnUse" x1="1468.8" y1="791.8" x2="1212.7" y2="721.8"><stop offset="0" stop-color="#ffffff"/><stop offset=".066" stop-color="#f7fffd"/><stop offset=".132" stop-color="#e1fff9"/><stop offset=".199" stop-color="#bafff2"/><stop offset=".265" stop-color="#7bffea"/><stop offset=".331" stop-color="#00ffe5"/><stop offset=".498" stop-color="#00ffe5"/><stop offset=".666" stop-color="#00ffe5"/><stop offset=".833" stop-color="#00ffe5"/><stop offset="1" stop-color="#00ffe5"/></linearGradient><linearGradient id="w109" gradientUnits="userSpaceOnUse" x1="1468.8" y1="791.8" x2="1211.3" y2="712.6"><stop offset="0" stop-color="#ffffff"/><stop offset=".065" stop-color="#f7fffd"/><stop offset=".129" stop-color="#e1fff8"/><stop offset=".194" stop-color="#bafff1"/><stop offset=".259" stop-color="#7bffe8"/><stop offset=".323" stop-color="#00ffe2"/><stop offset=".493" stop-color="#00ffe2"/><stop offset=".662" stop-color="#00ffe2"/><stop offset=".831" stop-color="#00ffe2"/><stop offset="1" stop-color="#00ffe2"/></linearGradient><linearGradient id="w110" gradientUnits="userSpaceOnUse" x1="1468.8" y1="791.8" x2="1210.0" y2="703.2"><stop offset="0" stop-color="#ffffff"/><stop offset=".063" stop-color="#f7fffd"/><stop offset=".126" stop-color="#e1fff8"/><stop offset=".189" stop-color="#bafff0"/><stop offset=".252" stop-color="#7bffe6"/><stop offset=".316" stop-color="#00ffdf"/><stop offset=".487" stop-color="#00ffdf"/><stop offset=".658" stop-color="#00ffdf"/><stop offset=".829" stop-color="#00ffdf"/><stop offset="1" stop-color="#00ffdf"/></linearGradient><linearGradient id="w111" gradientUnits="userSpaceOnUse" x1="1468.8" y1="791.8" x2="1208.7" y2="693.6"><stop offset="0" stop-color="#ffffff"/><stop offset=".061" stop-color="#f7fffd"/><stop offset=".123" stop-color="#e1fff7"/><stop offset=".184" stop-color="#bbffef"/><stop offset=".246" stop-color="#7bffe4"/><stop offset=".307" stop-color="#02ffdd"/><stop offset=".48" stop-color="#00ffdd"/><stop offset=".654" stop-color="#00ffdd"/><stop offset=".827" stop-color="#00ffdd"/><stop offset="1" stop-color="#00ffdd"/></linearGradient><linearGradient id="w112" gradientUnits="userSpaceOnUse" x1="1468.8" y1="791.8" x2="1207.5" y2="683.6"><stop offset="0" stop-color="#ffffff"/><stop offset=".06" stop-color="#f7fffd"/><stop offset=".12" stop-color="#e1fff7"/><stop offset=".179" stop-color="#bbffee"/><stop offset=".239" stop-color="#7bffe2"/><stop offset=".299" stop-color="#02ffda"/><stop offset=".474" stop-color="#00ffda"/><stop offset=".649" stop-color="#00ffda"/><stop offset=".825" stop-color="#00ffda"/><stop offset="1" stop-color="#00ffda"/></linearGradient><linearGradient id="w113" gradientUnits="userSpaceOnUse" x1="1468.8" y1="791.8" x2="1206.4" y2="673.4"><stop offset="0" stop-color="#ffffff"/><stop offset=".058" stop-color="#f7fffd"/><stop offset=".116" stop-color="#e1fff6"/><stop offset=".174" stop-color="#bcffed"/><stop offset=".232" stop-color="#7bffe0"/><stop offset=".29" stop-color="#03ffd7"/><stop offset=".468" stop-color="#00ffd7"/><stop offset=".645" stop-color="#00ffd7"/><stop offset=".823" stop-color="#00ffd7"/><stop offset="1" stop-color="#00ffd7"/></linearGradient><linearGradient id="w114" gradientUnits="userSpaceOnUse" x1="1468.8" y1="791.8" x2="1205.4" y2="662.8"><stop offset="0" stop-color="#ffffff"/><stop offset=".056" stop-color="#f7fffc"/><stop offset=".113" stop-color="#e1fff6"/><stop offset=".169" stop-color="#bcffec"/><stop offset=".225" stop-color="#7dffde"/><stop offset=".282" stop-color="#00ffd5"/><stop offset=".461" stop-color="#00ffd5"/><stop offset=".641" stop-color="#00ffd5"/><stop offset=".82" stop-color="#00ffd5"/><stop offset="1" stop-color="#00ffd5"/></linearGradient><linearGradient id="w115" gradientUnits="userSpaceOnUse" x1="1468.8" y1="791.8" x2="1205.1" y2="652.3"><stop offset="0" stop-color="#ffffff"/><stop offset=".055" stop-color="#f7fffc"/><stop offset=".109" stop-color="#e2fff5"/><stop offset=".164" stop-color="#bdffeb"/><stop offset=".219" stop-color="#7fffdd"/><stop offset=".274" stop-color="#03ffd2"/><stop offset=".455" stop-color="#00ffd2"/><stop offset=".637" stop-color="#00ffd2"/><stop offset=".818" stop-color="#00ffd2"/><stop offset="1" stop-color="#00ffd2"/></linearGradient><linearGradient id="w116" gradientUnits="userSpaceOnUse" x1="1468.8" y1="791.8" x2="1204.9" y2="641.3"><stop offset="0" stop-color="#ffffff"/><stop offset=".053" stop-color="#f7fffc"/><stop offset=".106" stop-color="#e2fff5"/><stop offset=".159" stop-color="#beffea"/><stop offset=".212" stop-color="#81ffdb"/><stop offset=".266" stop-color="#00ffd0"/><stop offset=".449" stop-color="#00ffd0"/><stop offset=".633" stop-color="#00ffd0"/><stop offset=".816" stop-color="#00ffd0"/><stop offset="1" stop-color="#00ffd0"/></linearGradient><linearGradient id="w117" gradientUnits="userSpaceOnUse" x1="1468.8" y1="791.8" x2="1204.8" y2="630.1"><stop offset="0" stop-color="#ffffff"/><stop offset=".051" stop-color="#f7fffc"/><stop offset=".103" stop-color="#e2fff4"/><stop offset=".154" stop-color="#bfffe9"/><stop offset=".206" stop-color="#83ffda"/><stop offset=".257" stop-color="#00ffcd"/><stop offset=".443" stop-color="#00ffcd"/><stop offset=".629" stop-color="#00ffcd"/><stop offset=".814" stop-color="#00ffcd"/><stop offset="1" stop-color="#00ffcd"/></linearGradient><linearGradient id="w118" gradientUnits="userSpaceOnUse" x1="1468.8" y1="791.8" x2="1205.0" y2="618.6"><stop offset="0" stop-color="#ffffff"/><stop offset=".05" stop-color="#f7fffc"/><stop offset=".1" stop-color="#e2fff4"/><stop offset=".15" stop-color="#bfffe8"/><stop offset=".199" stop-color="#86ffd9"/><stop offset=".249" stop-color="#03ffca"/><stop offset=".437" stop-color="#00ffca"/><stop offset=".625" stop-color="#00ffca"/><stop offset=".812" stop-color="#00ffca"/><stop offset="1" stop-color="#00ffca"/></linearGradient><linearGradient id="w119" gradientUnits="userSpaceOnUse" x1="1468.8" y1="791.8" x2="1205.2" y2="606.6"><stop offset="0" stop-color="#ffffff"/><stop offset=".048" stop-color="#f7fffc"/><stop offset=".097" stop-color="#e3fff4"/><stop offset=".145" stop-color="#c0ffe7"/><stop offset=".193" stop-color="#88ffd7"/><stop offset=".241" stop-color="#00ffc8"/><stop offset=".431" stop-color="#00ffc8"/><stop offset=".621" stop-color="#00ffc8"/><stop offset=".81" stop-color="#00ffc8"/><stop offset="1" stop-color="#00ffc8"/></linearGradient><linearGradient id="w120" gradientUnits="userSpaceOnUse" x1="1468.8" y1="791.8" x2="1205.7" y2="594.3"><stop offset="0" stop-color="#ffffff"/><stop offset=".047" stop-color="#f8fffc"/><stop offset=".093" stop-color="#e3fff3"/><stop offset=".14" stop-color="#c1ffe7"/><stop offset=".187" stop-color="#8affd6"/><stop offset=".233" stop-color="#00ffc5"/><stop offset=".425" stop-color="#00ffc5"/><stop offset=".617" stop-color="#00ffc5"/><stop offset=".808" stop-color="#00ffc5"/><stop offset="1" stop-color="#00ffc5"/></linearGradient><linearGradient id="w121" gradientUnits="userSpaceOnUse" x1="1468.8" y1="791.8" x2="1206.2" y2="581.5"><stop offset="0" stop-color="#ffffff"/><stop offset=".045" stop-color="#f8fffc"/><stop offset=".09" stop-color="#e3fff3"/><stop offset=".135" stop-color="#c2ffe6"/><stop offset=".18" stop-color="#8cffd5"/><stop offset=".225" stop-color="#03ffc3"/><stop offset=".419" stop-color="#00ffc3"/><stop offset=".613" stop-color="#00ffc3"/><stop offset=".806" stop-color="#00ffc3"/><stop offset="1" stop-color="#00ffc3"/></linearGradient><linearGradient id="w122" gradientUnits="userSpaceOnUse" x1="1468.8" y1="791.8" x2="1207.8" y2="568.9"><stop offset="0" stop-color="#ffffff"/><stop offset=".044" stop-color="#f8fffc"/><stop offset=".087" stop-color="#e4fff3"/><stop offset=".131" stop-color="#c3ffe5"/><stop offset=".175" stop-color="#8effd4"/><stop offset=".218" stop-color="#02ffc0"/><stop offset=".414" stop-color="#00ffc0"/><stop offset=".609" stop-color="#00ffc0"/><stop offset=".805" stop-color="#00ffc0"/><stop offset="1" stop-color="#00ffc0"/></linearGradient><linearGradient id="w123" gradientUnits="userSpaceOnUse" x1="1468.8" y1="791.8" x2="1210.0" y2="556.4"><stop offset="0" stop-color="#ffffff"/><stop offset=".042" stop-color="#f8fffc"/><stop offset=".085" stop-color="#e4fff2"/><stop offset=".127" stop-color="#c4ffe5"/><stop offset=".169" stop-color="#91ffd3"/><stop offset=".212" stop-color="#02ffbd"/><stop offset=".409" stop-color="#00ffbd"/><stop offset=".606" stop-color="#00ffbd"/><stop offset=".803" stop-color="#00ffbd"/><stop offset="1" stop-color="#00ffbd"/></linearGradient><linearGradient id="w124" gradientUnits="userSpaceOnUse" x1="1468.8" y1="791.8" x2="1212.7" y2="543.7"><stop offset="0" stop-color="#ffffff"/><stop offset=".041" stop-color="#f8fffb"/><stop offset=".082" stop-color="#e5fff2"/><stop offset=".123" stop-color="#c5ffe4"/><stop offset=".164" stop-color="#93ffd2"/><stop offset=".205" stop-color="#00ffba"/><stop offset=".404" stop-color="#00ffba"/><stop offset=".603" stop-color="#00ffba"/><stop offset=".801" stop-color="#00ffba"/><stop offset="1" stop-color="#00ffba"/></linearGradient><linearGradient id="w125" gradientUnits="userSpaceOnUse" x1="1468.8" y1="791.8" x2="1216.8" y2="531.9"><stop offset="0" stop-color="#ffffff"/><stop offset=".04" stop-color="#f8fffb"/><stop offset=".08" stop-color="#e5fff2"/><stop offset=".12" stop-color="#c6ffe4"/><stop offset=".16" stop-color="#95ffd1"/><stop offset=".2" stop-color="#1bffb8"/><stop offset=".4" stop-color="#00ffb7"/><stop offset=".6" stop-color="#00ffb7"/><stop offset=".8" stop-color="#00ffb7"/><stop offset="1" stop-color="#00ffb7"/></linearGradient><linearGradient id="w126" gradientUnits="userSpaceOnUse" x1="1468.8" y1="791.8" x2="1222.1" y2="520.8"><stop offset="0" stop-color="#ffffff"/><stop offset=".039" stop-color="#f8fffb"/><stop offset=".078" stop-color="#e5fff2"/><stop offset=".117" stop-color="#c7ffe3"/><stop offset=".156" stop-color="#97ffd0"/><stop offset=".195" stop-color="#2dffb6"/><stop offset=".396" stop-color="#00ffb4"/><stop offset=".598" stop-color="#00ffb4"/><stop offset=".799" stop-color="#00ffb4"/><stop offset="1" stop-color="#00ffb4"/></linearGradient><linearGradient id="w127" gradientUnits="userSpaceOnUse" x1="1468.8" y1="791.8" x2="1230.3" y2="512.6"><stop offset="0" stop-color="#ffffff"/><stop offset=".039" stop-color="#f8fffb"/><stop offset=".077" stop-color="#e6fff1"/><stop offset=".116" stop-color="#c8ffe3"/><stop offset=".154" stop-color="#9affcf"/><stop offset=".193" stop-color="#39ffb5"/><stop offset=".197" stop-color="#2fffb4"/><stop offset=".201" stop-color="#22ffb3"/><stop offset=".206" stop-color="#00ffb1"/><stop offset=".404" stop-color="#00ffb1"/><stop offset=".603" stop-color="#00ffb1"/><stop offset=".801" stop-color="#00ffb1"/><stop offset="1" stop-color="#00ffb1"/></linearGradient><linearGradient id="w128" gradientUnits="userSpaceOnUse" x1="1468.8" y1="791.8" x2="1239.8" y2="506.1"><stop offset="0" stop-color="#ffffff"/><stop offset=".038" stop-color="#f8fffb"/><stop offset=".076" stop-color="#e6fff1"/><stop offset=".115" stop-color="#c9ffe2"/><stop offset=".153" stop-color="#9cffce"/><stop offset=".191" stop-color="#42ffb4"/><stop offset=".197" stop-color="#37ffb2"/><stop offset=".204" stop-color="#27ffb0"/><stop offset=".21" stop-color="#00ffae"/><stop offset=".407" stop-color="#00ffae"/><stop offset=".605" stop-color="#00ffae"/><stop offset=".802" stop-color="#00ffae"/><stop offset="1" stop-color="#00ffae"/></linearGradient><linearGradient id="w129" gradientUnits="userSpaceOnUse" x1="1468.8" y1="791.8" x2="1250.3" y2="500.8"><stop offset="0" stop-color="#ffffff"/><stop offset=".038" stop-color="#f8fffb"/><stop offset=".076" stop-color="#e7fff1"/><stop offset=".114" stop-color="#caffe2"/><stop offset=".152" stop-color="#9effcd"/><stop offset=".19" stop-color="#4affb2"/><stop offset=".199" stop-color="#3dffb0"/><stop offset=".207" stop-color="#2cffad"/><stop offset=".215" stop-color="#00ffab"/><stop offset=".411" stop-color="#00ffab"/><stop offset=".607" stop-color="#00ffab"/><stop offset=".804" stop-color="#00ffab"/><stop offset="1" stop-color="#00ffab"/></linearGradient><linearGradient id="w130" gradientUnits="userSpaceOnUse" x1="1468.8" y1="791.8" x2="1261.3" y2="496.6"><stop offset="0" stop-color="#ffffff"/><stop offset=".038" stop-color="#f9fffb"/><stop offset=".076" stop-color="#e7fff1"/><stop offset=".114" stop-color="#cbffe1"/><stop offset=".152" stop-color="#a0ffcc"/><stop offset=".19" stop-color="#52ffb1"/><stop offset=".2" stop-color="#43ffae"/><stop offset=".211" stop-color="#30ffab"/><stop offset=".221" stop-color="#00ffa8"/><stop offset=".416" stop-color="#00ffa8"/><stop offset=".61" stop-color="#00ffa8"/><stop offset=".805" stop-color="#00ffa8"/><stop offset="1" stop-color="#00ffa8"/></linearGradient><linearGradient id="w131" gradientUnits="userSpaceOnUse" x1="1468.8" y1="791.8" x2="1273.4" y2="494.4"><stop offset="0" stop-color="#ffffff"/><stop offset=".038" stop-color="#f9fffb"/><stop offset=".076" stop-color="#e7fff1"/><stop offset=".115" stop-color="#ccffe1"/><stop offset=".153" stop-color="#a2ffcc"/><stop offset=".191" stop-color="#58ffb0"/><stop offset=".203" stop-color="#49ffac"/><stop offset=".216" stop-color="#34ffa8"/><stop offset=".229" stop-color="#00ffa4"/><stop offset=".422" stop-color="#00ffa4"/><stop offset=".614" stop-color="#00ffa4"/><stop offset=".807" stop-color="#00ffa4"/><stop offset="1" stop-color="#00ffa4"/></linearGradient><linearGradient id="w132" gradientUnits="userSpaceOnUse" x1="1468.8" y1="791.8" x2="1286.4" y2="494.2"><stop offset="0" stop-color="#ffffff"/><stop offset=".039" stop-color="#f9fffb"/><stop offset=".077" stop-color="#e8fff1"/><stop offset=".116" stop-color="#cdffe1"/><stop offset=".154" stop-color="#a4ffcb"/><stop offset=".193" stop-color="#5effae"/><stop offset=".208" stop-color="#4dffaa"/><stop offset=".223" stop-color="#37ffa5"/><stop offset=".238" stop-color="#00ffa1"/><stop offset=".429" stop-color="#00ffa1"/><stop offset=".619" stop-color="#00ffa1"/><stop offset=".81" stop-color="#00ffa1"/><stop offset="1" stop-color="#00ffa1"/></linearGradient><linearGradient id="w133" gradientUnits="userSpaceOnUse" x1="1468.8" y1="791.8" x2="1300.3" y2="496.5"><stop offset="0" stop-color="#ffffff"/><stop offset=".039" stop-color="#f9fffb"/><stop offset=".079" stop-color="#e8fff0"/><stop offset=".118" stop-color="#ceffe0"/><stop offset=".157" stop-color="#a6ffca"/><stop offset=".197" stop-color="#64ffad"/><stop offset=".214" stop-color="#52ffa8"/><stop offset=".233" stop-color="#3affa2"/><stop offset=".251" stop-color="#00ff9d"/><stop offset=".438" stop-color="#00ff9d"/><stop offset=".625" stop-color="#00ff9d"/><stop offset=".813" stop-color="#00ff9d"/><stop offset="1" stop-color="#00ff9d"/></linearGradient><linearGradient id="w134" gradientUnits="userSpaceOnUse" x1="1468.8" y1="791.8" x2="1314.5" y2="500.6"><stop offset="0" stop-color="#ffffff"/><stop offset=".04" stop-color="#f9fffb"/><stop offset=".08" stop-color="#e9fff0"/><stop offset=".121" stop-color="#cfffe0"/><stop offset=".161" stop-color="#a9ffca"/><stop offset=".201" stop-color="#69ffac"/><stop offset=".222" stop-color="#56ffa6"/><stop offset=".244" stop-color="#3dff9f"/><stop offset=".265" stop-color="#00ff99"/><stop offset=".449" stop-color="#00ff99"/><stop offset=".633" stop-color="#00ff99"/><stop offset=".816" stop-color="#00ff99"/><stop offset="1" stop-color="#00ff99"/></linearGradient><linearGradient id="w135" gradientUnits="userSpaceOnUse" x1="1468.8" y1="791.8" x2="1328.7" y2="505.9"><stop offset="0" stop-color="#ffffff"/><stop offset=".041" stop-color="#f9fffb"/><stop offset=".083" stop-color="#e9fff0"/><stop offset=".124" stop-color="#d0ffdf"/><stop offset=".165" stop-color="#abffc9"/><stop offset=".207" stop-color="#6effab"/><stop offset=".232" stop-color="#5affa3"/><stop offset=".257" stop-color="#40ff9c"/><stop offset=".282" stop-color="#00ff95"/><stop offset=".462" stop-color="#00ff95"/><stop offset=".641" stop-color="#00ff95"/><stop offset=".821" stop-color="#00ff95"/><stop offset="1" stop-color="#00ff95"/></linearGradient><linearGradient id="w136" gradientUnits="userSpaceOnUse" x1="1468.8" y1="791.8" x2="1341.9" y2="510.9"><stop offset="0" stop-color="#ffffff"/><stop offset=".042" stop-color="#f9fffb"/><stop offset=".085" stop-color="#eafff0"/><stop offset=".127" stop-color="#d1ffdf"/><stop offset=".169" stop-color="#adffc8"/><stop offset=".212" stop-color="#73ffaa"/><stop offset=".241" stop-color="#5effa1"/><stop offset=".271" stop-color="#42ff98"/><stop offset=".3" stop-color="#00ff90"/><stop offset=".475" stop-color="#00ff90"/><stop offset=".65" stop-color="#00ff90"/><stop offset=".825" stop-color="#00ff90"/><stop offset="1" stop-color="#00ff90"/></linearGradient><linearGradient id="w137" gradientUnits="userSpaceOnUse" x1="1468.8" y1="791.8" x2="1354.3" y2="515.5"><stop offset="0" stop-color="#ffffff"/><stop offset=".043" stop-color="#f9fffb"/><stop offset=".087" stop-color="#eafff0"/><stop offset=".13" stop-color="#d2ffdf"/><stop offset=".173" stop-color="#afffc8"/><stop offset=".217" stop-color="#78ffa9"/><stop offset=".25" stop-color="#61ff9f"/><stop offset=".285" stop-color="#44ff95"/><stop offset=".319" stop-color="#02ff8b"/><stop offset=".489" stop-color="#00ff8b"/><stop offset=".659" stop-color="#00ff8b"/><stop offset=".83" stop-color="#00ff8b"/><stop offset="1" stop-color="#00ff8b"/></linearGradient><linearGradient id="w138" gradientUnits="userSpaceOnUse" x1="1468.8" y1="791.8" x2="1366.6" y2="521.4"><stop offset="0" stop-color="#ffffff"/><stop offset=".045" stop-color="#f9fffb"/><stop offset=".089" stop-color="#ebfff0"/><stop offset=".134" stop-color="#d3ffdf"/><stop offset=".178" stop-color="#b1ffc7"/><stop offset=".223" stop-color="#7cffa8"/><stop offset=".262" stop-color="#64ff9c"/><stop offset=".302" stop-color="#47ff91"/><stop offset=".341" stop-color="#02ff86"/><stop offset=".506" stop-color="#00ff86"/><stop offset=".67" stop-color="#00ff86"/><stop offset=".835" stop-color="#00ff86"/><stop offset="1" stop-color="#00ff86"/></linearGradient><linearGradient id="w139" gradientUnits="userSpaceOnUse" x1="1468.8" y1="791.8" x2="1378.2" y2="527.5"><stop offset="0" stop-color="#ffffff"/><stop offset=".046" stop-color="#fafffb"/><stop offset=".092" stop-color="#ebfff0"/><stop offset=".138" stop-color="#d4ffde"/><stop offset=".184" stop-color="#b3ffc7"/><stop offset=".229" stop-color="#80ffa7"/><stop offset=".274" stop-color="#67ff9a"/><stop offset=".32" stop-color="#49ff8d"/><stop offset=".365" stop-color="#00ff81"/><stop offset=".524" stop-color="#00ff81"/><stop offset=".683" stop-color="#00ff81"/><stop offset=".841" stop-color="#00ff81"/><stop offset="1" stop-color="#00ff81"/></linearGradient><linearGradient id="w140" gradientUnits="userSpaceOnUse" x1="1468.8" y1="791.8" x2="1389.2" y2="533.2"><stop offset="0" stop-color="#ffffff"/><stop offset=".047" stop-color="#fafffb"/><stop offset=".094" stop-color="#ebfff0"/><stop offset=".141" stop-color="#d5ffde"/><stop offset=".189" stop-color="#b5ffc6"/><stop offset=".236" stop-color="#85ffa6"/><stop offset=".287" stop-color="#6aff97"/><stop offset=".34" stop-color="#4aff88"/><stop offset=".392" stop-color="#00ff7b"/><stop offset=".544" stop-color="#00ff7b"/><stop offset=".696" stop-color="#00ff7b"/><stop offset=".848" stop-color="#00ff7b"/><stop offset="1" stop-color="#00ff7b"/></linearGradient><linearGradient id="w141" gradientUnits="userSpaceOnUse" x1="1468.8" y1="791.8" x2="1399.5" y2="538.7"><stop offset="0" stop-color="#ffffff"/><stop offset=".048" stop-color="#fafffb"/><stop offset=".097" stop-color="#ecffef"/><stop offset=".145" stop-color="#d6ffde"/><stop offset=".193" stop-color="#b7ffc6"/><stop offset=".242" stop-color="#89ffa5"/><stop offset=".301" stop-color="#6dff94"/><stop offset=".361" stop-color="#4cff84"/><stop offset=".42" stop-color="#00ff74"/><stop offset=".565" stop-color="#00ff74"/><stop offset=".71" stop-color="#00ff74"/><stop offset=".855" stop-color="#00ff74"/><stop offset="1" stop-color="#00ff74"/></linearGradient><linearGradient id="w142" gradientUnits="userSpaceOnUse" x1="1468.8" y1="791.8" x2="1409.2" y2="543.8"><stop offset="0" stop-color="#ffffff"/><stop offset=".05" stop-color="#fafffb"/><stop offset=".099" stop-color="#ecffef"/><stop offset=".149" stop-color="#d7ffde"/><stop offset=".198" stop-color="#b9ffc5"/><stop offset=".248" stop-color="#8dffa4"/><stop offset=".315" stop-color="#70ff91"/><stop offset=".384" stop-color="#4eff7e"/><stop offset=".451" stop-color="#00ff6c"/><stop offset=".588" stop-color="#00ff6c"/><stop offset=".725" stop-color="#00ff6c"/><stop offset=".863" stop-color="#00ff6c"/><stop offset="1" stop-color="#00ff6c"/></linearGradient><linearGradient id="w143" gradientUnits="userSpaceOnUse" x1="1468.8" y1="791.8" x2="1418.5" y2="549.4"><stop offset="0" stop-color="#ffffff"/><stop offset=".051" stop-color="#fafffb"/><stop offset=".102" stop-color="#edffef"/><stop offset=".153" stop-color="#d8ffdd"/><stop offset=".203" stop-color="#bbffc5"/><stop offset=".254" stop-color="#91ffa4"/><stop offset=".331" stop-color="#72ff8e"/><stop offset=".409" stop-color="#4fff79"/><stop offset=".486" stop-color="#00ff64"/><stop offset=".614" stop-color="#00ff64"/><stop offset=".743" stop-color="#00ff64"/><stop offset=".871" stop-color="#00ff64"/><stop offset="1" stop-color="#00ff64"/></linearGradient><linearGradient id="w144" gradientUnits="userSpaceOnUse" x1="1468.8" y1="791.8" x2="1427.4" y2="554.6"><stop offset="0" stop-color="#ffffff"/><stop offset=".052" stop-color="#fafffb"/><stop offset=".104" stop-color="#edffef"/><stop offset=".156" stop-color="#d9ffdd"/><stop offset=".209" stop-color="#bdffc5"/><stop offset=".261" stop-color="#94ffa3"/><stop offset=".348" stop-color="#75ff8b"/><stop offset=".437" stop-color="#50ff72"/><stop offset=".524" stop-color="#00ff59"/><stop offset=".643" stop-color="#00ff59"/><stop offset=".762" stop-color="#00ff59"/><stop offset=".881" stop-color="#00ff59"/><stop offset="1" stop-color="#00ff59"/></linearGradient><linearGradient id="w145" gradientUnits="userSpaceOnUse" x1="1468.8" y1="791.8" x2="1435.7" y2="559.6"><stop offset="0" stop-color="#ffffff"/><stop offset=".053" stop-color="#fafffb"/><stop offset=".107" stop-color="#eeffef"/><stop offset=".16" stop-color="#daffdd"/><stop offset=".213" stop-color="#bfffc4"/><stop offset=".267" stop-color="#98ffa2"/><stop offset=".366" stop-color="#77ff87"/><stop offset=".468" stop-color="#52ff6b"/><stop offset=".567" stop-color="#00ff4d"/><stop offset=".675" stop-color="#00ff4d"/><stop offset=".784" stop-color="#00ff4d"/><stop offset=".892" stop-color="#00ff4d"/><stop offset="1" stop-color="#00ff4d"/></linearGradient><linearGradient id="w146" gradientUnits="userSpaceOnUse" x1="1468.8" y1="791.8" x2="1443.7" y2="564.5"><stop offset="0" stop-color="#ffffff"/><stop offset=".055" stop-color="#fafffb"/><stop offset=".109" stop-color="#eeffef"/><stop offset=".164" stop-color="#dbffdd"/><stop offset=".219" stop-color="#c1ffc4"/><stop offset=".273" stop-color="#9cffa1"/><stop offset=".386" stop-color="#79ff82"/><stop offset=".502" stop-color="#53ff62"/><stop offset=".615" stop-color="#01ff3c"/><stop offset=".711" stop-color="#00ff3c"/><stop offset=".807" stop-color="#00ff3c"/><stop offset=".904" stop-color="#00ff3c"/><stop offset="1" stop-color="#00ff3c"/></linearGradient><linearGradient id="w147" gradientUnits="userSpaceOnUse" x1="1468.8" y1="791.8" x2="1451.2" y2="569.2"><stop offset="0" stop-color="#ffffff"/><stop offset=".056" stop-color="#fbfffb"/><stop offset=".112" stop-color="#efffef"/><stop offset=".168" stop-color="#dcffdd"/><stop offset=".223" stop-color="#c3ffc4"/><stop offset=".279" stop-color="#9fffa1"/><stop offset=".408" stop-color="#7bff7e"/><stop offset=".54" stop-color="#54ff58"/><stop offset=".669" stop-color="#00ff20"/><stop offset=".752" stop-color="#00ff20"/><stop offset=".835" stop-color="#00ff20"/><stop offset=".917" stop-color="#00ff20"/><stop offset="1" stop-color="#00ff20"/></linearGradient><linearGradient id="w148" gradientUnits="userSpaceOnUse" x1="1468.8" y1="791.8" x2="1458.5" y2="573.8"><stop offset="0" stop-color="#ffffff"/><stop offset=".057" stop-color="#fbfffb"/><stop offset=".114" stop-color="#efffef"/><stop offset=".171" stop-color="#ddffdd"/><stop offset=".228" stop-color="#c5ffc3"/><stop offset=".285" stop-color="#a3ffa0"/><stop offset=".419" stop-color="#81ff7c"/><stop offset=".556" stop-color="#5cff54"/><stop offset=".689" stop-color="#2dff02"/><stop offset=".767" stop-color="#2dff00"/><stop offset=".844" stop-color="#2dff00"/><stop offset=".922" stop-color="#2dff00"/><stop offset="1" stop-color="#2dff00"/></linearGradient><linearGradient id="w149" gradientUnits="userSpaceOnUse" x1="1468.8" y1="791.8" x2="1465.4" y2="578.1"><stop offset="0" stop-color="#ffffff"/><stop offset=".058" stop-color="#fbfffb"/><stop offset=".117" stop-color="#f0ffef"/><stop offset=".175" stop-color="#dfffdc"/><stop offset=".233" stop-color="#c7ffc3"/><stop offset=".291" stop-color="#a7ffa0"/><stop offset=".423" stop-color="#87ff7c"/><stop offset=".559" stop-color="#67ff54"/><stop offset=".691" stop-color="#44ff01"/><stop offset=".768" stop-color="#44ff00"/><stop offset=".845" stop-color="#44ff00"/><stop offset=".923" stop-color="#44ff00"/><stop offset="1" stop-color="#44ff00"/></linearGradient><linearGradient id="w150" gradientUnits="userSpaceOnUse" x1="1468.8" y1="791.8" x2="1472.0" y2="582.3"><stop offset="0" stop-color="#ffffff"/><stop offset=".059" stop-color="#fbfffb"/><stop offset=".119" stop-color="#f0ffef"/><stop offset=".178" stop-color="#e0ffdc"/><stop offset=".238" stop-color="#c9ffc3"/><stop offset=".297" stop-color="#aaff9f"/><stop offset=".428" stop-color="#8dff7c"/><stop offset=".562" stop-color="#71ff54"/><stop offset=".693" stop-color="#55ff01"/><stop offset=".77" stop-color="#55ff00"/><stop offset=".846" stop-color="#55ff00"/><stop offset=".923" stop-color="#55ff00"/><stop offset="1" stop-color="#55ff00"/></linearGradient><linearGradient id="w151" gradientUnits="userSpaceOnUse" x1="1468.8" y1="791.8" x2="1478.4" y2="586.3"><stop offset="0" stop-color="#ffffff"/><stop offset=".061" stop-color="#fbfffb"/><stop offset=".121" stop-color="#f1ffef"/><stop offset=".182" stop-color="#e1ffdc"/><stop offset=".242" stop-color="#cbffc2"/><stop offset=".303" stop-color="#aeff9e"/><stop offset=".432" stop-color="#93ff7b"/><stop offset=".565" stop-color="#7aff54"/><stop offset=".695" stop-color="#62ff01"/><stop offset=".771" stop-color="#62ff00"/><stop offset=".847" stop-color="#62ff00"/><stop offset=".924" stop-color="#62ff00"/><stop offset="1" stop-color="#62ff00"/></linearGradient><linearGradient id="w152" gradientUnits="userSpaceOnUse" x1="1468.8" y1="791.8" x2="1484.6" y2="590.2"><stop offset="0" stop-color="#ffffff"/><stop offset=".062" stop-color="#fbfffb"/><stop offset=".123" stop-color="#f1ffef"/><stop offset=".185" stop-color="#e2ffdc"/><stop offset=".247" stop-color="#cdffc2"/><stop offset=".308" stop-color="#b1ff9e"/><stop offset=".436" stop-color="#99ff7b"/><stop offset=".568" stop-color="#82ff54"/><stop offset=".696" stop-color="#6dff01"/><stop offset=".772" stop-color="#6dff00"/><stop offset=".848" stop-color="#6dff00"/><stop offset=".924" stop-color="#6dff00"/><stop offset="1" stop-color="#6dff00"/></linearGradient><linearGradient id="w153" gradientUnits="userSpaceOnUse" x1="1468.8" y1="791.8" x2="1490.6" y2="594.0"><stop offset="0" stop-color="#ffffff"/><stop offset=".063" stop-color="#fbfffb"/><stop offset=".126" stop-color="#f2ffef"/><stop offset=".188" stop-color="#e3ffdc"/><stop offset=".251" stop-color="#cfffc2"/><stop offset=".314" stop-color="#b5ff9d"/><stop offset=".441" stop-color="#9eff7b"/><stop offset=".571" stop-color="#8aff54"/><stop offset=".698" stop-color="#77ff01"/><stop offset=".774" stop-color="#77ff00"/><stop offset=".849" stop-color="#77ff00"/><stop offset=".925" stop-color="#77ff00"/><stop offset="1" stop-color="#77ff00"/></linearGradient><linearGradient id="w154" gradientUnits="userSpaceOnUse" x1="1468.8" y1="791.8" x2="1496.4" y2="597.7"><stop offset="0" stop-color="#ffffff"/><stop offset=".064" stop-color="#fcfffb"/><stop offset=".128" stop-color="#f2ffef"/><stop offset=".192" stop-color="#e4ffdc"/><stop offset=".255" stop-color="#d1ffc2"/><stop offset=".319" stop-color="#b8ff9d"/><stop offset=".445" stop-color="#a4ff7b"/><stop offset=".574" stop-color="#91ff54"/><stop offset=".7" stop-color="#80ff02"/><stop offset=".775" stop-color="#80ff00"/><stop offset=".85" stop-color="#80ff00"/><stop offset=".925" stop-color="#80ff00"/><stop offset="1" stop-color="#80ff00"/></linearGradient><linearGradient id="w155" gradientUnits="userSpaceOnUse" x1="1468.8" y1="791.8" x2="1502.0" y2="601.2"><stop offset="0" stop-color="#ffffff"/><stop offset=".065" stop-color="#fcfffb"/><stop offset=".13" stop-color="#f3ffef"/><stop offset=".195" stop-color="#e5ffdc"/><stop offset=".26" stop-color="#d3ffc2"/><stop offset=".324" stop-color="#bcff9c"/><stop offset=".449" stop-color="#a9ff7b"/><stop offset=".577" stop-color="#98ff54"/><stop offset=".702" stop-color="#89ff02"/><stop offset=".776" stop-color="#89ff00"/><stop offset=".851" stop-color="#89ff00"/><stop offset=".925" stop-color="#89ff00"/><stop offset="1" stop-color="#89ff00"/></linearGradient><linearGradient id="w156" gradientUnits="userSpaceOnUse" x1="1468.8" y1="791.8" x2="1507.5" y2="604.7"><stop offset="0" stop-color="#ffffff"/><stop offset=".066" stop-color="#fcfffb"/><stop offset=".132" stop-color="#f4ffef"/><stop offset=".198" stop-color="#e7ffdc"/><stop offset=".264" stop-color="#d5ffc1"/><stop offset=".33" stop-color="#bfff9c"/><stop offset=".453" stop-color="#aeff7b"/><stop offset=".58" stop-color="#9eff54"/><stop offset=".703" stop-color="#91ff02"/><stop offset=".778" stop-color="#91ff00"/><stop offset=".852" stop-color="#91ff00"/><stop offset=".926" stop-color="#91ff00"/><stop offset="1" stop-color="#91ff00"/></linearGradient><linearGradient id="w157" gradientUnits="userSpaceOnUse" x1="1468.8" y1="791.8" x2="1512.9" y2="608.1"><stop offset="0" stop-color="#ffffff"/><stop offset=".067" stop-color="#fcfffb"/><stop offset=".134" stop-color="#f4ffef"/><stop offset=".201" stop-color="#e8ffdc"/><stop offset=".268" stop-color="#d8ffc1"/><stop offset=".334" stop-color="#c3ff9c"/><stop offset=".457" stop-color="#b3ff7b"/><stop offset=".583" stop-color="#a5ff55"/><stop offset=".705" stop-color="#98ff02"/><stop offset=".779" stop-color="#98ff00"/><stop offset=".853" stop-color="#98ff00"/><stop offset=".926" stop-color="#98ff00"/><stop offset="1" stop-color="#98ff00"/></linearGradient><linearGradient id="w158" gradientUnits="userSpaceOnUse" x1="1468.8" y1="791.8" x2="1518.1" y2="611.4"><stop offset="0" stop-color="#ffffff"/><stop offset=".068" stop-color="#fcfffb"/><stop offset=".136" stop-color="#f5ffef"/><stop offset=".204" stop-color="#e9ffdc"/><stop offset=".271" stop-color="#daffc1"/><stop offset=".339" stop-color="#c6ff9b"/><stop offset=".461" stop-color="#b8ff7b"/><stop offset=".586" stop-color="#abff55"/><stop offset=".707" stop-color="#a0ff02"/><stop offset=".78" stop-color="#a0ff00"/><stop offset=".853" stop-color="#a0ff00"/><stop offset=".927" stop-color="#a0ff00"/><stop offset="1" stop-color="#a0ff00"/></linearGradient><linearGradient id="w159" gradientUnits="userSpaceOnUse" x1="1468.8" y1="791.8" x2="1523.2" y2="614.7"><stop offset="0" stop-color="#ffffff"/><stop offset=".069" stop-color="#fcfffb"/><stop offset=".138" stop-color="#f5ffef"/><stop offset=".206" stop-color="#eaffdc"/><stop offset=".275" stop-color="#dcffc1"/><stop offset=".344" stop-color="#caff9b"/><stop offset=".464" stop-color="#bdff7b"/><stop offset=".588" stop-color="#b1ff55"/><stop offset=".709" stop-color="#a7ff02"/><stop offset=".781" stop-color="#a7ff00"/><stop offset=".854" stop-color="#a7ff00"/><stop offset=".927" stop-color="#a7ff00"/><stop offset="1" stop-color="#a7ff00"/></linearGradient><linearGradient id="w160" gradientUnits="userSpaceOnUse" x1="1468.8" y1="791.8" x2="1528.3" y2="618.0"><stop offset="0" stop-color="#ffffff"/><stop offset=".07" stop-color="#fdfffb"/><stop offset=".14" stop-color="#f6ffef"/><stop offset=".209" stop-color="#ecffdc"/><stop offset=".279" stop-color="#deffc1"/><stop offset=".349" stop-color="#cdff9b"/><stop offset=".468" stop-color="#c1ff7b"/><stop offset=".591" stop-color="#b7ff55"/><stop offset=".71" stop-color="#aeff02"/><stop offset=".783" stop-color="#aeff00"/><stop offset=".855" stop-color="#aeff00"/><stop offset=".928" stop-color="#aeff00"/><stop offset="1" stop-color="#aeff00"/></linearGradient><linearGradient id="w161" gradientUnits="userSpaceOnUse" x1="1468.8" y1="791.8" x2="1533.2" y2="621.2"><stop offset="0" stop-color="#ffffff"/><stop offset=".071" stop-color="#fdfffb"/><stop offset=".141" stop-color="#f7ffef"/><stop offset=".212" stop-color="#edffdc"/><stop offset=".283" stop-color="#e0ffc1"/><stop offset=".353" stop-color="#d1ff9b"/><stop offset=".472" stop-color="#c6ff7b"/><stop offset=".594" stop-color="#bcff55"/><stop offset=".712" stop-color="#b4ff02"/><stop offset=".784" stop-color="#b4ff00"/><stop offset=".856" stop-color="#b4ff00"/><stop offset=".928" stop-color="#b4ff00"/><stop offset="1" stop-color="#b4ff00"/></linearGradient><linearGradient id="w162" gradientUnits="userSpaceOnUse" x1="1468.8" y1="791.8" x2="1538.1" y2="624.3"><stop offset="0" stop-color="#ffffff"/><stop offset=".072" stop-color="#fdfffb"/><stop offset=".143" stop-color="#f7ffef"/><stop offset=".215" stop-color="#eeffdc"/><stop offset=".286" stop-color="#e3ffc1"/><stop offset=".358" stop-color="#d4ff9a"/><stop offset=".475" stop-color="#cbff7b"/><stop offset=".596" stop-color="#c2ff55"/><stop offset=".714" stop-color="#bbff01"/><stop offset=".785" stop-color="#bbff00"/><stop offset=".857" stop-color="#bbff00"/><stop offset=".928" stop-color="#bbff00"/><stop offset="1" stop-color="#bbff00"/></linearGradient><linearGradient id="w163" gradientUnits="userSpaceOnUse" x1="1468.8" y1="791.8" x2="1543.0" y2="627.5"><stop offset="0" stop-color="#ffffff"/><stop offset=".072" stop-color="#fdfffb"/><stop offset=".145" stop-color="#f8ffef"/><stop offset=".217" stop-color="#f0ffdc"/><stop offset=".29" stop-color="#e5ffc1"/><stop offset=".362" stop-color="#d8ff9a"/><stop offset=".479" stop-color="#cfff7b"/><stop offset=".599" stop-color="#c8ff55"/><stop offset=".716" stop-color="#c1ff02"/><stop offset=".787" stop-color="#c1ff00"/><stop offset=".858" stop-color="#c1ff00"/><stop offset=".929" stop-color="#c1ff00"/><stop offset="1" stop-color="#c1ff00"/></linearGradient><linearGradient id="w164" gradientUnits="userSpaceOnUse" x1="1468.8" y1="791.8" x2="1547.7" y2="630.6"><stop offset="0" stop-color="#ffffff"/><stop offset=".073" stop-color="#fdfffb"/><stop offset=".147" stop-color="#f8ffef"/><stop offset=".22" stop-color="#f1ffdc"/><stop offset=".293" stop-color="#e8ffc1"/><stop offset=".366" stop-color="#dcff9a"/><stop offset=".482" stop-color="#d4ff7b"/><stop offset=".602" stop-color="#cdff56"/><stop offset=".718" stop-color="#c8ff02"/><stop offset=".788" stop-color="#c8ff00"/><stop offset=".859" stop-color="#c8ff00"/><stop offset=".929" stop-color="#c8ff00"/><stop offset="1" stop-color="#c8ff00"/></linearGradient><linearGradient id="w165" gradientUnits="userSpaceOnUse" x1="1468.8" y1="791.8" x2="1552.5" y2="633.7"><stop offset="0" stop-color="#ffffff"/><stop offset=".074" stop-color="#fdfffb"/><stop offset=".148" stop-color="#f9ffef"/><stop offset=".222" stop-color="#f3ffdc"/><stop offset=".296" stop-color="#eaffc1"/><stop offset=".37" stop-color="#e0ff9a"/><stop offset=".486" stop-color="#d9ff7b"/><stop offset=".604" stop-color="#d3ff56"/><stop offset=".72" stop-color="#ceff02"/><stop offset=".79" stop-color="#ceff00"/><stop offset=".86" stop-color="#ceff00"/><stop offset=".93" stop-color="#ceff00"/><stop offset="1" stop-color="#ceff00"/></linearGradient><linearGradient id="w166" gradientUnits="userSpaceOnUse" x1="1468.8" y1="791.8" x2="1557.2" y2="636.8"><stop offset="0" stop-color="#ffffff"/><stop offset=".075" stop-color="#fefffb"/><stop offset=".15" stop-color="#faffef"/><stop offset=".225" stop-color="#f4ffdc"/><stop offset=".299" stop-color="#edffc1"/><stop offset=".374" stop-color="#e3ff9a"/><stop offset=".489" stop-color="#deff7b"/><stop offset=".607" stop-color="#d9ff56"/><stop offset=".721" stop-color="#d4ff01"/><stop offset=".791" stop-color="#d4ff00"/><stop offset=".861" stop-color="#d4ff00"/><stop offset=".93" stop-color="#d4ff00"/><stop offset="1" stop-color="#d4ff00"/></linearGradient><linearGradient id="w167" gradientUnits="userSpaceOnUse" x1="1468.8" y1="791.8" x2="1561.9" y2="639.9"><stop offset="0" stop-color="#ffffff"/><stop offset=".076" stop-color="#fefffb"/><stop offset=".151" stop-color="#fbffef"/><stop offset=".227" stop-color="#f6ffdc"/><stop offset=".303" stop-color="#efffc1"/><stop offset=".378" stop-color="#e7ff9a"/><stop offset=".492" stop-color="#e3ff7c"/><stop offset=".61" stop-color="#deff56"/><stop offset=".723" stop-color="#dbff02"/><stop offset=".793" stop-color="#dbff00"/><stop offset=".862" stop-color="#dbff00"/><stop offset=".931" stop-color="#dbff00"/><stop offset="1" stop-color="#dbff00"/></linearGradient><linearGradient id="w168" gradientUnits="userSpaceOnUse" x1="1468.8" y1="791.8" x2="1566.5" y2="643.0"><stop offset="0" stop-color="#ffffff"/><stop offset=".076" stop-color="#fefffb"/><stop offset=".153" stop-color="#fbffef"/><stop offset=".229" stop-color="#f7ffdd"/><stop offset=".306" stop-color="#f2ffc2"/><stop offset=".382" stop-color="#ebff9b"/><stop offset=".495" stop-color="#e7ff7c"/><stop offset=".612" stop-color="#e4ff57"/><stop offset=".726" stop-color="#e1ff02"/><stop offset=".794" stop-color="#e1ff00"/><stop offset=".863" stop-color="#e1ff00"/><stop offset=".931" stop-color="#e1ff00"/><stop offset="1" stop-color="#e1ff00"/></linearGradient><linearGradient id="w169" gradientUnits="userSpaceOnUse" x1="1468.8" y1="791.8" x2="1571.2" y2="646.1"><stop offset="0" stop-color="#ffffff"/><stop offset=".077" stop-color="#fefffb"/><stop offset=".154" stop-color="#fcffef"/><stop offset=".231" stop-color="#f9ffdd"/><stop offset=".308" stop-color="#f5ffc2"/><stop offset=".385" stop-color="#efff9b"/><stop offset=".498" stop-color="#ecff7c"/><stop offset=".615" stop-color="#eaff57"/><stop offset=".728" stop-color="#e7ff03"/><stop offset=".796" stop-color="#e7ff00"/><stop offset=".864" stop-color="#e7ff00"/><stop offset=".932" stop-color="#e7ff00"/><stop offset="1" stop-color="#e7ff00"/></linearGradient><linearGradient id="w170" gradientUnits="userSpaceOnUse" x1="1468.8" y1="791.8" x2="1575.8" y2="649.2"><stop offset="0" stop-color="#ffffff"/><stop offset=".078" stop-color="#fefffb"/><stop offset=".156" stop-color="#fdfff0"/><stop offset=".233" stop-color="#faffdd"/><stop offset=".311" stop-color="#f7ffc2"/><stop offset=".389" stop-color="#f4ff9b"/><stop offset=".501" stop-color="#f1ff7d"/><stop offset=".617" stop-color="#efff57"/><stop offset=".73" stop-color="#eeff03"/><stop offset=".797" stop-color="#eeff00"/><stop offset=".865" stop-color="#eeff00"/><stop offset=".932" stop-color="#eeff00"/><stop offset="1" stop-color="#eeff00"/></linearGradient><linearGradient id="w171" gradientUnits="userSpaceOnUse" x1="1468.8" y1="791.8" x2="1580.5" y2="652.4"><stop offset="0" stop-color="#ffffff"/><stop offset=".078" stop-color="#fffffb"/><stop offset=".157" stop-color="#fefff0"/><stop offset=".235" stop-color="#fcffdd"/><stop offset=".314" stop-color="#faffc2"/><stop offset=".392" stop-color="#f8ff9b"/><stop offset=".504" stop-color="#f7ff7d"/><stop offset=".62" stop-color="#f5ff58"/><stop offset=".732" stop-color="#f4ff03"/><stop offset=".799" stop-color="#f4ff00"/><stop offset=".866" stop-color="#f4ff00"/><stop offset=".933" stop-color="#f4ff00"/><stop offset="1" stop-color="#f4ff00"/></linearGradient><linearGradient id="w172" gradientUnits="userSpaceOnUse" x1="1468.8" y1="791.8" x2="1585.2" y2="655.5"><stop offset="0" stop-color="#ffffff"/><stop offset=".079" stop-color="#fffffb"/><stop offset=".158" stop-color="#fefff0"/><stop offset=".237" stop-color="#feffde"/><stop offset=".316" stop-color="#fdffc3"/><stop offset=".395" stop-color="#fcff9c"/><stop offset=".507" stop-color="#fcff7e"/><stop offset=".622" stop-color="#fbff58"/><stop offset=".734" stop-color="#fbff02"/><stop offset=".801" stop-color="#fbff00"/><stop offset=".867" stop-color="#fbff00"/><stop offset=".934" stop-color="#fbff00"/><stop offset="1" stop-color="#fbff00"/></linearGradient><linearGradient id="w173" gradientUnits="userSpaceOnUse" x1="1468.8" y1="791.8" x2="1589.9" y2="658.7"><stop offset="0" stop-color="#ffffff"/><stop offset=".08" stop-color="#fffffb"/><stop offset=".159" stop-color="#fffff0"/><stop offset=".239" stop-color="#fffedd"/><stop offset=".318" stop-color="#fffec3"/><stop offset=".398" stop-color="#fffd9b"/><stop offset=".51" stop-color="#fffd7d"/><stop offset=".625" stop-color="#fffd58"/><stop offset=".737" stop-color="#fffc03"/><stop offset=".803" stop-color="#fffc00"/><stop offset=".868" stop-color="#fffc00"/><stop offset=".934" stop-color="#fffc00"/><stop offset="1" stop-color="#fffc00"/></linearGradient><linearGradient id="w174" gradientUnits="userSpaceOnUse" x1="1468.8" y1="791.8" x2="1594.6" y2="662.0"><stop offset="0" stop-color="#ffffff"/><stop offset=".08" stop-color="#fffffb"/><stop offset=".16" stop-color="#fffeef"/><stop offset=".24" stop-color="#fffcdd"/><stop offset=".32" stop-color="#fffbc1"/><stop offset=".4" stop-color="#fff999"/><stop offset=".512" stop-color="#fff87b"/><stop offset=".627" stop-color="#fff757"/><stop offset=".739" stop-color="#fff603"/><stop offset=".805" stop-color="#fff600"/><stop offset=".87" stop-color="#fff600"/><stop offset=".935" stop-color="#fff600"/><stop offset="1" stop-color="#fff600"/></linearGradient><linearGradient id="w175" gradientUnits="userSpaceOnUse" x1="1468.8" y1="791.8" x2="1599.4" y2="665.2"><stop offset="0" stop-color="#ffffff"/><stop offset=".08" stop-color="#fffefb"/><stop offset=".161" stop-color="#fffdef"/><stop offset=".241" stop-color="#fffbdc"/><stop offset=".322" stop-color="#fff8c0"/><stop offset=".402" stop-color="#fff498"/><stop offset=".514" stop-color="#fff27a"/><stop offset=".63" stop-color="#fff155"/><stop offset=".742" stop-color="#ffef02"/><stop offset=".806" stop-color="#ffef00"/><stop offset=".871" stop-color="#ffef00"/><stop offset=".935" stop-color="#ffef00"/><stop offset="1" stop-color="#ffef00"/></linearGradient><linearGradient id="w176" gradientUnits="userSpaceOnUse" x1="1468.8" y1="791.8" x2="1604.2" y2="668.5"><stop offset="0" stop-color="#ffffff"/><stop offset=".081" stop-color="#fffefb"/><stop offset=".162" stop-color="#fffcee"/><stop offset=".243" stop-color="#fff9db"/><stop offset=".323" stop-color="#fff5bf"/><stop offset=".404" stop-color="#fff096"/><stop offset=".517" stop-color="#ffed78"/><stop offset=".632" stop-color="#ffeb54"/><stop offset=".744" stop-color="#ffe902"/><stop offset=".808" stop-color="#ffe900"/><stop offset=".872" stop-color="#ffe900"/><stop offset=".936" stop-color="#ffe900"/><stop offset="1" stop-color="#ffe900"/></linearGradient><linearGradient id="w177" gradientUnits="userSpaceOnUse" x1="1468.8" y1="791.8" x2="1609.2" y2="671.9"><stop offset="0" stop-color="#ffffff"/><stop offset=".081" stop-color="#fffefb"/><stop offset=".162" stop-color="#fffbee"/><stop offset=".243" stop-color="#fff7da"/><stop offset=".325" stop-color="#fff2be"/><stop offset=".406" stop-color="#ffec94"/><stop offset=".518" stop-color="#ffe876"/><stop offset=".634" stop-color="#ffe553"/><stop offset=".747" stop-color="#ffe302"/><stop offset=".81" stop-color="#ffe300"/><stop offset=".873" stop-color="#ffe300"/><stop offset=".937" stop-color="#ffe300"/><stop offset="1" stop-color="#ffe300"/></linearGradient><linearGradient id="w178" gradientUnits="userSpaceOnUse" x1="1468.8" y1="791.8" x2="1614.2" y2="675.3"><stop offset="0" stop-color="#ffffff"/><stop offset=".081" stop-color="#fffefa"/><stop offset=".163" stop-color="#fffaee"/><stop offset=".244" stop-color="#fff5d9"/><stop offset=".326" stop-color="#ffefbc"/><stop offset=".407" stop-color="#ffe792"/><stop offset=".52" stop-color="#ffe375"/><stop offset=".637" stop-color="#ffdf51"/><stop offset=".75" stop-color="#ffdc02"/><stop offset=".812" stop-color="#ffdc00"/><stop offset=".875" stop-color="#ffdc00"/><stop offset=".937" stop-color="#ffdc00"/><stop offset="1" stop-color="#ffdc00"/></linearGradient><linearGradient id="w179" gradientUnits="userSpaceOnUse" x1="1468.8" y1="791.8" x2="1619.3" y2="678.8"><stop offset="0" stop-color="#ffffff"/><stop offset=".082" stop-color="#fffefa"/><stop offset=".163" stop-color="#fffaed"/><stop offset=".245" stop-color="#fff4d9"/><stop offset=".326" stop-color="#ffecbb"/><stop offset=".408" stop-color="#ffe391"/><stop offset=".522" stop-color="#ffde74"/><stop offset=".639" stop-color="#ffda50"/><stop offset=".753" stop-color="#ffd602"/><stop offset=".814" stop-color="#ffd600"/><stop offset=".876" stop-color="#ffd600"/><stop offset=".938" stop-color="#ffd600"/><stop offset="1" stop-color="#ffd600"/></linearGradient><linearGradient id="w180" gradientUnits="userSpaceOnUse" x1="1468.8" y1="791.8" x2="1624.5" y2="682.4"><stop offset="0" stop-color="#ffffff"/><stop offset=".082" stop-color="#fffdfa"/><stop offset=".163" stop-color="#fff9ed"/><stop offset=".245" stop-color="#fff2d8"/><stop offset=".327" stop-color="#ffe9bb"/><stop offset=".408" stop-color="#ffdf90"/><stop offset=".523" stop-color="#ffd972"/><stop offset=".641" stop-color="#ffd44f"/><stop offset=".755" stop-color="#ffd003"/><stop offset=".817" stop-color="#ffd000"/><stop offset=".878" stop-color="#ffd000"/><stop offset=".939" stop-color="#ffd000"/><stop offset="1" stop-color="#ffd000"/></linearGradient><linearGradient id="w181" gradientUnits="userSpaceOnUse" x1="1468.8" y1="791.8" x2="1629.8" y2="686.0"><stop offset="0" stop-color="#ffffff"/><stop offset=".082" stop-color="#fffdfa"/><stop offset=".163" stop-color="#fff8ed"/><stop offset=".245" stop-color="#fff0d7"/><stop offset=".327" stop-color="#ffe6ba"/><stop offset=".408" stop-color="#ffda8e"/><stop offset=".524" stop-color="#ffd471"/><stop offset=".643" stop-color="#ffcf4e"/><stop offset=".758" stop-color="#ffca02"/><stop offset=".819" stop-color="#ffca00"/><stop offset=".879" stop-color="#ffca00"/><stop offset=".94" stop-color="#ffca00"/><stop offset="1" stop-color="#ffca00"/></linearGradient><linearGradient id="w182" gradientUnits="userSpaceOnUse" x1="1468.8" y1="791.8" x2="1635.2" y2="689.8"><stop offset="0" stop-color="#ffffff"/><stop offset=".082" stop-color="#fffdfa"/><stop offset=".163" stop-color="#fff7ec"/><stop offset=".245" stop-color="#ffeed7"/><stop offset=".327" stop-color="#ffe3b9"/><stop offset=".408" stop-color="#ffd68d"/><stop offset=".525" stop-color="#ffcf70"/><stop offset=".645" stop-color="#ffc94d"/><stop offset=".762" stop-color="#ffc402"/><stop offset=".821" stop-color="#ffc400"/><stop offset=".881" stop-color="#ffc400"/><stop offset=".94" stop-color="#ffc400"/><stop offset="1" stop-color="#ffc400"/></linearGradient><linearGradient id="w183" gradientUnits="userSpaceOnUse" x1="1468.8" y1="791.8" x2="1640.6" y2="693.8"><stop offset="0" stop-color="#ffffff"/><stop offset=".082" stop-color="#fffdfa"/><stop offset=".163" stop-color="#fff6ec"/><stop offset=".245" stop-color="#ffedd6"/><stop offset=".326" stop-color="#ffe1b8"/><stop offset=".408" stop-color="#ffd28c"/><stop offset=".526" stop-color="#ffca6f"/><stop offset=".648" stop-color="#ffc44d"/><stop offset=".766" stop-color="#ffbe02"/><stop offset=".825" stop-color="#ffbe00"/><stop offset=".883" stop-color="#ffbe00"/><stop offset=".941" stop-color="#ffbe00"/><stop offset="1" stop-color="#ffbe00"/></linearGradient><linearGradient id="w184" gradientUnits="userSpaceOnUse" x1="1468.8" y1="791.8" x2="1646.2" y2="697.9"><stop offset="0" stop-color="#ffffff"/><stop offset=".081" stop-color="#fffcfa"/><stop offset=".163" stop-color="#fff5ec"/><stop offset=".244" stop-color="#ffebd6"/><stop offset=".325" stop-color="#ffdeb7"/><stop offset=".407" stop-color="#ffce8b"/><stop offset=".527" stop-color="#ffc56e"/><stop offset=".65" stop-color="#ffbe4c"/><stop offset=".77" stop-color="#ffb802"/><stop offset=".828" stop-color="#ffb800"/><stop offset=".885" stop-color="#ffb800"/><stop offset=".943" stop-color="#ffb800"/><stop offset="1" stop-color="#ffb800"/></linearGradient><linearGradient id="w185" gradientUnits="userSpaceOnUse" x1="1468.8" y1="791.8" x2="1652.0" y2="702.1"><stop offset="0" stop-color="#ffffff"/><stop offset=".081" stop-color="#fffcfa"/><stop offset=".162" stop-color="#fff4eb"/><stop offset=".243" stop-color="#ffe9d5"/><stop offset=".324" stop-color="#ffdbb7"/><stop offset=".405" stop-color="#ffca8b"/><stop offset=".527" stop-color="#ffc06d"/><stop offset=".653" stop-color="#ffb84b"/><stop offset=".775" stop-color="#ffb202"/><stop offset=".831" stop-color="#ffb200"/><stop offset=".887" stop-color="#ffb200"/><stop offset=".944" stop-color="#ffb200"/><stop offset="1" stop-color="#ffb200"/></linearGradient><linearGradient id="w186" gradientUnits="userSpaceOnUse" x1="1468.8" y1="791.8" x2="1657.9" y2="706.4"><stop offset="0" stop-color="#ffffff"/><stop offset=".081" stop-color="#fffcf9"/><stop offset=".161" stop-color="#fff4eb"/><stop offset=".242" stop-color="#ffe8d5"/><stop offset=".322" stop-color="#ffd8b6"/><stop offset=".403" stop-color="#ffc58a"/><stop offset=".527" stop-color="#ffbb6c"/><stop offset=".655" stop-color="#ffb34a"/><stop offset=".779" stop-color="#ffab02"/><stop offset=".835" stop-color="#ffab00"/><stop offset=".89" stop-color="#ffab00"/><stop offset=".945" stop-color="#ffab00"/><stop offset="1" stop-color="#ffab00"/></linearGradient><linearGradient id="w187" gradientUnits="userSpaceOnUse" x1="1468.8" y1="791.8" x2="1664.0" y2="710.9"><stop offset="0" stop-color="#ffffff"/><stop offset=".08" stop-color="#fffcf9"/><stop offset=".16" stop-color="#fff3eb"/><stop offset=".24" stop-color="#ffe6d5"/><stop offset=".32" stop-color="#ffd6b6"/><stop offset=".4" stop-color="#ffc18a"/><stop offset=".527" stop-color="#ffb66c"/><stop offset=".657" stop-color="#ffad4a"/><stop offset=".784" stop-color="#ffa502"/><stop offset=".838" stop-color="#ffa500"/><stop offset=".892" stop-color="#ffa500"/><stop offset=".946" stop-color="#ffa500"/><stop offset="1" stop-color="#ffa500"/></linearGradient><linearGradient id="w188" gradientUnits="userSpaceOnUse" x1="1468.8" y1="791.8" x2="1670.4" y2="715.6"><stop offset="0" stop-color="#ffffff"/><stop offset=".079" stop-color="#fffbf9"/><stop offset=".158" stop-color="#fff2eb"/><stop offset=".238" stop-color="#ffe4d4"/><stop offset=".317" stop-color="#ffd3b6"/><stop offset=".396" stop-color="#ffbd8a"/><stop offset=".526" stop-color="#ffb16b"/><stop offset=".66" stop-color="#ffa749"/><stop offset=".79" stop-color="#ff9e02"/><stop offset=".842" stop-color="#ff9e00"/><stop offset=".895" stop-color="#ff9e00"/><stop offset=".947" stop-color="#ff9e00"/><stop offset="1" stop-color="#ff9e00"/></linearGradient><linearGradient id="w189" gradientUnits="userSpaceOnUse" x1="1468.8" y1="791.8" x2="1677.1" y2="720.5"><stop offset="0" stop-color="#ffffff"/><stop offset=".078" stop-color="#fffbf9"/><stop offset=".157" stop-color="#fff1ea"/><stop offset=".235" stop-color="#ffe3d4"/><stop offset=".313" stop-color="#ffd0b5"/><stop offset=".392" stop-color="#ffb98a"/><stop offset=".525" stop-color="#ffac6b"/><stop offset=".662" stop-color="#ffa149"/><stop offset=".795" stop-color="#ff9802"/><stop offset=".846" stop-color="#ff9800"/><stop offset=".897" stop-color="#ff9800"/><stop offset=".949" stop-color="#ff9800"/><stop offset="1" stop-color="#ff9800"/></linearGradient><linearGradient id="w190" gradientUnits="userSpaceOnUse" x1="1468.8" y1="791.8" x2="1684.1" y2="725.6"><stop offset="0" stop-color="#ffffff"/><stop offset=".077" stop-color="#fffbf9"/><stop offset=".155" stop-color="#fff0ea"/><stop offset=".232" stop-color="#ffe1d4"/><stop offset=".309" stop-color="#ffceb5"/><stop offset=".387" stop-color="#ffb58a"/><stop offset=".523" stop-color="#ffa66b"/><stop offset=".664" stop-color="#ff9a48"/><stop offset=".801" stop-color="#ff9102"/><stop offset=".851" stop-color="#ff9100"/><stop offset=".9" stop-color="#ff9100"/><stop offset=".95" stop-color="#ff9100"/><stop offset="1" stop-color="#ff9100"/></linearGradient><linearGradient id="w191" gradientUnits="userSpaceOnUse" x1="1468.8" y1="791.8" x2="1691.4" y2="730.9"><stop offset="0" stop-color="#ffffff"/><stop offset=".076" stop-color="#fffbf9"/><stop offset=".152" stop-color="#fff0ea"/><stop offset=".228" stop-color="#ffe0d4"/><stop offset=".305" stop-color="#ffcbb5"/><stop offset=".381" stop-color="#ffb18a"/><stop offset=".521" stop-color="#ffa16a"/><stop offset=".666" stop-color="#ff9448"/><stop offset=".807" stop-color="#ff8902"/><stop offset=".855" stop-color="#ff8900"/><stop offset=".903" stop-color="#ff8900"/><stop offset=".952" stop-color="#ff8900"/><stop offset="1" stop-color="#ff8900"/></linearGradient><linearGradient id="w192" gradientUnits="userSpaceOnUse" x1="1468.8" y1="791.8" x2="1699.1" y2="736.5"><stop offset="0" stop-color="#ffffff"/><stop offset=".075" stop-color="#fffaf9"/><stop offset=".15" stop-color="#ffefea"/><stop offset=".224" stop-color="#ffded4"/><stop offset=".299" stop-color="#ffc9b5"/><stop offset=".374" stop-color="#ffad8a"/><stop offset=".519" stop-color="#ff9c6a"/><stop offset=".668" stop-color="#ff8d48"/><stop offset=".813" stop-color="#ff8102"/><stop offset=".86" stop-color="#ff8100"/><stop offset=".907" stop-color="#ff8100"/><stop offset=".953" stop-color="#ff8100"/><stop offset="1" stop-color="#ff8100"/></linearGradient><linearGradient id="w193" gradientUnits="userSpaceOnUse" x1="1468.8" y1="791.8" x2="1707.2" y2="742.5"><stop offset="0" stop-color="#ffffff"/><stop offset=".073" stop-color="#fffaf9"/><stop offset=".147" stop-color="#ffeeea"/><stop offset=".22" stop-color="#ffddd4"/><stop offset=".293" stop-color="#ffc6b5"/><stop offset=".367" stop-color="#ffa98b"/><stop offset=".516" stop-color="#ff966a"/><stop offset=".671" stop-color="#ff8647"/><stop offset=".82" stop-color="#ff7902"/><stop offset=".865" stop-color="#ff7900"/><stop offset=".91" stop-color="#ff7900"/><stop offset=".955" stop-color="#ff7900"/><stop offset="1" stop-color="#ff7900"/></linearGradient><linearGradient id="w194" gradientUnits="userSpaceOnUse" x1="1468.8" y1="791.8" x2="1715.8" y2="748.7"><stop offset="0" stop-color="#ffffff"/><stop offset=".072" stop-color="#fffaf9"/><stop offset=".143" stop-color="#ffeeea"/><stop offset=".215" stop-color="#ffdcd4"/><stop offset=".287" stop-color="#ffc4b6"/><stop offset=".358" stop-color="#ffa58c"/><stop offset=".513" stop-color="#ff906a"/><stop offset=".673" stop-color="#ff7e47"/><stop offset=".828" stop-color="#ff7002"/><stop offset=".871" stop-color="#ff7000"/><stop offset=".914" stop-color="#ff7000"/><stop offset=".957" stop-color="#ff7000"/><stop offset="1" stop-color="#ff7000"/></linearGradient><linearGradient id="w195" gradientUnits="userSpaceOnUse" x1="1468.8" y1="791.8" x2="1724.9" y2="755.4"><stop offset="0" stop-color="#ffffff"/><stop offset=".07" stop-color="#fffaf9"/><stop offset=".14" stop-color="#ffedea"/><stop offset=".209" stop-color="#ffdad4"/><stop offset=".279" stop-color="#ffc2b6"/><stop offset=".349" stop-color="#ffa28c"/><stop offset=".51" stop-color="#ff8a6a"/><stop offset=".675" stop-color="#ff7647"/><stop offset=".836" stop-color="#ff6602"/><stop offset=".877" stop-color="#ff6600"/><stop offset=".918" stop-color="#ff6600"/><stop offset=".959" stop-color="#ff6600"/><stop offset="1" stop-color="#ff6600"/></linearGradient><linearGradient id="w196" gradientUnits="userSpaceOnUse" x1="1468.8" y1="791.8" x2="1734.7" y2="762.5"><stop offset="0" stop-color="#ffffff"/><stop offset=".068" stop-color="#fffaf9"/><stop offset=".136" stop-color="#ffecea"/><stop offset=".203" stop-color="#ffd9d4"/><stop offset=".271" stop-color="#ffbfb6"/><stop offset=".339" stop-color="#ff9e8d"/><stop offset=".506" stop-color="#ff836a"/><stop offset=".678" stop-color="#ff6d46"/><stop offset=".844" stop-color="#ff5b02"/><stop offset=".883" stop-color="#ff5b00"/><stop offset=".922" stop-color="#ff5b00"/><stop offset=".961" stop-color="#ff5b00"/><stop offset="1" stop-color="#ff5b00"/></linearGradient><linearGradient id="w197" gradientUnits="userSpaceOnUse" x1="1468.8" y1="791.8" x2="1745.2" y2="770.1"><stop offset="0" stop-color="#ffffff"/><stop offset=".066" stop-color="#fff9f9"/><stop offset=".131" stop-color="#ffecea"/><stop offset=".197" stop-color="#ffd8d4"/><stop offset=".263" stop-color="#ffbdb7"/><stop offset=".328" stop-color="#ff9a8f"/><stop offset=".502" stop-color="#ff7d6a"/><stop offset=".68" stop-color="#ff6446"/><stop offset=".854" stop-color="#ff4e02"/><stop offset=".89" stop-color="#ff4e00"/><stop offset=".927" stop-color="#ff4e00"/><stop offset=".963" stop-color="#ff4e00"/><stop offset="1" stop-color="#ff4e00"/></linearGradient><linearGradient id="w198" gradientUnits="userSpaceOnUse" x1="1468.8" y1="791.8" x2="1756.5" y2="778.3"><stop offset="0" stop-color="#ffffff"/><stop offset=".063" stop-color="#fff9f9"/><stop offset=".127" stop-color="#ffebea"/><stop offset=".19" stop-color="#ffd6d4"/><stop offset=".253" stop-color="#ffbbb7"/><stop offset=".317" stop-color="#ff9790"/><stop offset=".497" stop-color="#ff756a"/><stop offset=".684" stop-color="#ff5945"/><stop offset=".864" stop-color="#ff3d02"/><stop offset=".898" stop-color="#ff3d00"/><stop offset=".932" stop-color="#ff3d00"/><stop offset=".966" stop-color="#ff3d00"/><stop offset="1" stop-color="#ff3d00"/></linearGradient><linearGradient id="w199" gradientUnits="userSpaceOnUse" x1="1468.8" y1="791.8" x2="1768.8" y2="787.1"><stop offset="0" stop-color="#ffffff"/><stop offset=".061" stop-color="#fff9f9"/><stop offset=".122" stop-color="#ffebea"/><stop offset=".183" stop-color="#ffd5d5"/><stop offset=".244" stop-color="#ffb9b8"/><stop offset=".304" stop-color="#ff9391"/><stop offset=".493" stop-color="#ff6d6a"/><stop offset=".687" stop-color="#ff4b45"/><stop offset=".876" stop-color="#ff2402"/><stop offset=".907" stop-color="#ff2400"/><stop offset=".938" stop-color="#ff2400"/><stop offset=".969" stop-color="#ff2400"/><stop offset="1" stop-color="#ff2400"/></linearGradient><clipPath id="cloc"><path d="M1215.0 640.0 1215.0 615.0 1215.6 585.0 1218.8 565.0 1222.5 546.2 1230.6 528.8 1241.2 518.8 1253.8 511.9 1266.2 506.9 1277.5 504.4 1292.5 504.4 1312.5 508.1 1337.5 518.1 1361.2 527.5 1377.5 536.2 1411.2 555.0 1440.0 573.1 1518.5 625.4 1590.0 673.1 1622.5 694.4 1659.4 720.0 1705.6 751.9 1762.5 791.2 1794.2 813.3 1806.7 821.7 1720.0 849.2 1410.0 947.9 1375.0 959.0 1348.3 967.5 1342.5 968.6 1338.3 967.5 1333.3 964.2 1325.0 955.0 1315.0 942.5 1308.3 932.5 1300.8 920.4 1295.0 910.0 1272.5 867.5 1260.0 837.5 1248.8 808.8 1240.0 785.0 1230.5 752.5 1223.8 722.5 1219.5 695.0 1216.2 670.0z"/></clipPath><clipPath id="cdim"><path clip-rule="evenodd" d="M1215.0 640.0 1215.0 615.0 1215.6 585.0 1218.8 565.0 1222.5 546.2 1230.6 528.8 1241.2 518.8 1253.8 511.9 1266.2 506.9 1277.5 504.4 1292.5 504.4 1312.5 508.1 1337.5 518.1 1361.2 527.5 1377.5 536.2 1411.2 555.0 1440.0 573.1 1518.5 625.4 1590.0 673.1 1622.5 694.4 1659.4 720.0 1705.6 751.9 1762.5 791.2 1794.2 813.3 1806.7 821.7 1720.0 849.2 1410.0 947.9 1375.0 959.0 1348.3 967.5 1342.5 968.6 1338.3 967.5 1333.3 964.2 1325.0 955.0 1315.0 942.5 1308.3 932.5 1300.8 920.4 1295.0 910.0 1272.5 867.5 1260.0 837.5 1248.8 808.8 1240.0 785.0 1230.5 752.5 1223.8 722.5 1219.5 695.0 1216.2 670.0z M1790.0 810.6 1408.9 566.8 1329.9 946.7z"/></clipPath><filter id="bl" filterUnits="userSpaceOnUse" x="1150" y="443" width="740" height="562"><feGaussianBlur stdDeviation="2.5"/></filter></defs><rect x="1150" y="443" width="740" height="562" fill="#03090a"/><path d="M1211.4 443V1005M1293.7 443V1005M1376.0 443V1005M1458.3 443V1005M1540.6 443V1005M1622.9 443V1005M1705.2 443V1005M1787.5 443V1005M1150 920.3H1890M1150 864.2H1890M1150 808.1H1890M1150 752.0H1890M1150 695.9H1890M1150 639.8H1890M1150 583.7H1890M1150 527.6H1890M1150 471.5H1890" stroke="#454545" stroke-width="1" fill="none"/><g clip-path="url(#cloc)"><g shape-rendering="crispEdges" filter="url(#bl)"><path d="M1468.8 791.8L1784.3 788.0 1784.0 805.5z" fill="url(#w0)"/><path d="M1468.8 791.8L1799.2 798.2 1798.3 816.5z" fill="url(#w1)"/><path d="M1468.8 791.8L1815.9 809.5 1814.4 828.7z" fill="url(#w2)"/><path d="M1468.8 791.8L1804.2 819.5 1802.2 838.0z" fill="url(#w3)"/><path d="M1468.8 791.8L1782.1 827.6 1779.7 844.9z" fill="url(#w4)"/><path d="M1468.8 791.8L1762.7 834.8 1759.9 851.0z" fill="url(#w5)"/><path d="M1468.8 791.8L1745.5 841.2 1742.3 856.4z" fill="url(#w6)"/><path d="M1468.8 791.8L1730.1 847.0 1726.6 861.3z" fill="url(#w7)"/><path d="M1468.8 791.8L1716.2 852.2 1712.4 865.8z" fill="url(#w8)"/><path d="M1468.8 791.8L1703.5 857.0 1699.6 869.9z" fill="url(#w9)"/><path d="M1468.8 791.8L1692.0 861.4 1687.8 873.7z" fill="url(#w10)"/><path d="M1468.8 791.8L1681.3 865.5 1676.9 877.2z" fill="url(#w11)"/><path d="M1468.8 791.8L1671.5 869.3 1666.9 880.4z" fill="url(#w12)"/><path d="M1468.8 791.8L1662.3 872.9 1657.5 883.4z" fill="url(#w13)"/><path d="M1468.8 791.8L1653.7 876.2 1648.8 886.3z" fill="url(#w14)"/><path d="M1468.8 791.8L1645.7 879.3 1640.6 889.0z" fill="url(#w15)"/><path d="M1468.8 791.8L1638.1 882.3 1632.8 891.5z" fill="url(#w16)"/><path d="M1468.8 791.8L1630.9 885.1 1625.5 894.0z" fill="url(#w17)"/><path d="M1468.8 791.8L1624.1 887.8 1618.5 896.3z" fill="url(#w18)"/><path d="M1468.8 791.8L1617.6 890.4 1611.9 898.5z" fill="url(#w19)"/><path d="M1468.8 791.8L1611.3 892.8 1605.5 900.6z" fill="url(#w20)"/><path d="M1468.8 791.8L1605.3 895.2 1599.4 902.6z" fill="url(#w21)"/><path d="M1468.8 791.8L1599.6 897.4 1593.5 904.5z" fill="url(#w22)"/><path d="M1468.8 791.8L1594.0 899.6 1587.9 906.4z" fill="url(#w23)"/><path d="M1468.8 791.8L1588.6 901.7 1582.4 908.2z" fill="url(#w24)"/><path d="M1468.8 791.8L1583.4 903.8 1577.0 909.9z" fill="url(#w25)"/><path d="M1468.8 791.8L1578.3 905.7 1571.8 911.6z" fill="url(#w26)"/><path d="M1468.8 791.8L1573.4 907.7 1566.8 913.3z" fill="url(#w27)"/><path d="M1468.8 791.8L1568.5 909.5 1561.9 914.9z" fill="url(#w28)"/><path d="M1468.8 791.8L1563.8 911.3 1557.0 916.4z" fill="url(#w29)"/><path d="M1468.8 791.8L1559.1 913.1 1552.3 917.9z" fill="url(#w30)"/><path d="M1468.8 791.8L1554.5 914.9 1547.6 919.4z" fill="url(#w31)"/><path d="M1468.8 791.8L1550.0 916.6 1543.0 920.9z" fill="url(#w32)"/><path d="M1468.8 791.8L1545.6 918.2 1538.4 922.3z" fill="url(#w33)"/><path d="M1468.8 791.8L1541.1 919.8 1533.9 923.7z" fill="url(#w34)"/><path d="M1468.8 791.8L1536.8 921.4 1529.5 925.0z" fill="url(#w35)"/><path d="M1468.8 791.8L1532.4 923.0 1525.1 926.4z" fill="url(#w36)"/><path d="M1468.8 791.8L1528.1 924.6 1520.7 927.7z" fill="url(#w37)"/><path d="M1468.8 791.8L1523.8 926.1 1516.3 929.0z" fill="url(#w38)"/><path d="M1468.8 791.8L1519.5 927.6 1511.9 930.2z" fill="url(#w39)"/><path d="M1468.8 791.8L1515.2 929.1 1507.5 931.5z" fill="url(#w40)"/><path d="M1468.8 791.8L1510.9 930.6 1503.1 932.8z" fill="url(#w41)"/><path d="M1468.8 791.8L1506.6 932.1 1498.7 934.0z" fill="url(#w42)"/><path d="M1468.8 791.8L1502.2 933.6 1494.3 935.2z" fill="url(#w43)"/><path d="M1468.8 791.8L1497.9 935.1 1489.9 936.4z" fill="url(#w44)"/><path d="M1468.8 791.8L1493.5 936.5 1485.4 937.7z" fill="url(#w45)"/><path d="M1468.8 791.8L1489.0 938.0 1480.9 938.9z" fill="url(#w46)"/><path d="M1468.8 791.8L1484.5 939.5 1476.3 940.1z" fill="url(#w47)"/><path d="M1468.8 791.8L1479.9 941.0 1471.7 941.3z" fill="url(#w48)"/><path d="M1468.8 791.8L1475.3 942.4 1466.9 942.6z" fill="url(#w49)"/><path d="M1468.8 791.8L1470.6 943.9 1462.1 943.8z" fill="url(#w50)"/><path d="M1468.8 791.8L1465.8 945.5 1457.3 945.1z" fill="url(#w51)"/><path d="M1468.8 791.8L1460.9 947.0 1452.3 946.3z" fill="url(#w52)"/><path d="M1468.8 791.8L1455.8 948.6 1447.2 947.6z" fill="url(#w53)"/><path d="M1468.8 791.8L1450.7 950.2 1441.9 949.0z" fill="url(#w54)"/><path d="M1468.8 791.8L1445.4 951.8 1436.5 950.3z" fill="url(#w55)"/><path d="M1468.8 791.8L1439.9 953.5 1431.0 951.7z" fill="url(#w56)"/><path d="M1468.8 791.8L1434.3 955.3 1425.3 953.1z" fill="url(#w57)"/><path d="M1468.8 791.8L1428.4 957.0 1419.3 954.6z" fill="url(#w58)"/><path d="M1468.8 791.8L1422.4 958.9 1413.2 956.1z" fill="url(#w59)"/><path d="M1468.8 791.8L1416.1 960.8 1406.8 957.7z" fill="url(#w60)"/><path d="M1468.8 791.8L1409.5 962.8 1400.1 959.3z" fill="url(#w61)"/><path d="M1468.8 791.8L1402.6 965.0 1393.1 961.0z" fill="url(#w62)"/><path d="M1468.8 791.8L1395.4 967.2 1385.8 962.8z" fill="url(#w63)"/><path d="M1468.8 791.8L1387.7 969.5 1378.0 964.7z" fill="url(#w64)"/><path d="M1468.8 791.8L1379.7 972.0 1369.8 966.8z" fill="url(#w65)"/><path d="M1468.8 791.8L1371.1 974.6 1361.1 968.9z" fill="url(#w66)"/><path d="M1468.8 791.8L1361.9 977.5 1351.8 971.3z" fill="url(#w67)"/><path d="M1468.8 791.8L1352.1 980.5 1341.9 973.8z" fill="url(#w68)"/><path d="M1468.8 791.8L1342.0 983.3 1331.6 976.0z" fill="url(#w69)"/><path d="M1468.8 791.8L1334.1 981.9 1323.8 974.2z" fill="url(#w70)"/><path d="M1468.8 791.8L1328.2 977.6 1318.1 969.5z" fill="url(#w71)"/><path d="M1468.8 791.8L1323.1 972.3 1313.3 964.0z" fill="url(#w72)"/><path d="M1468.8 791.8L1318.1 966.9 1308.6 958.3z" fill="url(#w73)"/><path d="M1468.8 791.8L1313.3 961.4 1304.2 952.5z" fill="url(#w74)"/><path d="M1468.8 791.8L1308.7 955.8 1299.8 946.7z" fill="url(#w75)"/><path d="M1468.8 791.8L1304.4 949.9 1295.9 940.6z" fill="url(#w76)"/><path d="M1468.8 791.8L1300.3 944.0 1292.1 934.4z" fill="url(#w77)"/><path d="M1468.8 791.8L1296.3 938.0 1288.4 928.3z" fill="url(#w78)"/><path d="M1468.8 791.8L1292.4 932.1 1284.9 922.1z" fill="url(#w79)"/><path d="M1468.8 791.8L1288.7 926.0 1281.6 915.8z" fill="url(#w80)"/><path d="M1468.8 791.8L1285.1 919.9 1278.3 909.5z" fill="url(#w81)"/><path d="M1468.8 791.8L1281.6 913.8 1275.2 903.2z" fill="url(#w82)"/><path d="M1468.8 791.8L1278.2 907.7 1272.0 896.9z" fill="url(#w83)"/><path d="M1468.8 791.8L1274.7 901.6 1268.9 890.7z" fill="url(#w84)"/><path d="M1468.8 791.8L1271.3 895.5 1265.8 884.4z" fill="url(#w85)"/><path d="M1468.8 791.8L1267.8 889.3 1262.7 878.1z" fill="url(#w86)"/><path d="M1468.8 791.8L1264.4 883.2 1259.6 871.7z" fill="url(#w87)"/><path d="M1468.8 791.8L1261.1 877.0 1256.7 865.3z" fill="url(#w88)"/><path d="M1468.8 791.8L1258.2 870.5 1254.1 858.7z" fill="url(#w89)"/><path d="M1468.8 791.8L1255.3 864.0 1251.6 852.1z" fill="url(#w90)"/><path d="M1468.8 791.8L1252.4 857.5 1249.1 845.4z" fill="url(#w91)"/><path d="M1468.8 791.8L1249.5 850.9 1246.6 838.7z" fill="url(#w92)"/><path d="M1468.8 791.8L1246.7 844.3 1244.1 831.9z" fill="url(#w93)"/><path d="M1468.8 791.8L1243.9 837.5 1241.7 825.0z" fill="url(#w94)"/><path d="M1468.8 791.8L1241.1 830.7 1239.3 818.0z" fill="url(#w95)"/><path d="M1468.8 791.8L1238.3 823.8 1236.9 810.9z" fill="url(#w96)"/><path d="M1468.8 791.8L1235.5 816.7 1234.4 803.8z" fill="url(#w97)"/><path d="M1468.8 791.8L1232.7 809.5 1232.1 796.4z" fill="url(#w98)"/><path d="M1468.8 791.8L1229.9 802.2 1229.7 789.0z" fill="url(#w99)"/><path d="M1468.8 791.8L1227.1 794.7 1227.3 781.3z" fill="url(#w100)"/><path d="M1468.8 791.8L1224.5 787.1 1225.2 773.6z" fill="url(#w101)"/><path d="M1468.8 791.8L1222.2 779.3 1223.2 765.6z" fill="url(#w102)"/><path d="M1468.8 791.8L1219.8 771.3 1221.3 757.5z" fill="url(#w103)"/><path d="M1468.8 791.8L1217.3 763.1 1219.3 749.2z" fill="url(#w104)"/><path d="M1468.8 791.8L1215.0 754.8 1217.4 740.8z" fill="url(#w105)"/><path d="M1468.8 791.8L1213.0 746.2 1215.9 732.1z" fill="url(#w106)"/><path d="M1468.8 791.8L1210.9 737.4 1214.3 723.2z" fill="url(#w107)"/><path d="M1468.8 791.8L1208.8 728.4 1212.8 714.1z" fill="url(#w108)"/><path d="M1468.8 791.8L1207.2 719.2 1211.6 704.9z" fill="url(#w109)"/><path d="M1468.8 791.8L1205.7 709.8 1210.6 695.4z" fill="url(#w110)"/><path d="M1468.8 791.8L1204.1 700.1 1209.6 685.6z" fill="url(#w111)"/><path d="M1468.8 791.8L1202.7 690.2 1208.7 675.6z" fill="url(#w112)"/><path d="M1468.8 791.8L1201.3 679.9 1207.9 665.2z" fill="url(#w113)"/><path d="M1468.8 791.8L1200.0 669.3 1207.2 654.6z" fill="url(#w114)"/><path d="M1468.8 791.8L1199.5 658.7 1207.3 644.0z" fill="url(#w115)"/><path d="M1468.8 791.8L1198.9 647.7 1207.3 633.0z" fill="url(#w116)"/><path d="M1468.8 791.8L1198.6 636.4 1207.6 621.7z" fill="url(#w117)"/><path d="M1468.8 791.8L1198.5 624.8 1208.1 610.1z" fill="url(#w118)"/><path d="M1468.8 791.8L1198.4 612.8 1208.7 598.1z" fill="url(#w119)"/><path d="M1468.8 791.8L1198.6 600.4 1209.6 585.8z" fill="url(#w120)"/><path d="M1468.8 791.8L1198.7 587.5 1210.5 572.9z" fill="url(#w121)"/><path d="M1468.8 791.8L1200.0 574.9 1212.5 560.4z" fill="url(#w122)"/><path d="M1468.8 791.8L1201.9 562.2 1215.1 547.8z" fill="url(#w123)"/><path d="M1468.8 791.8L1204.4 549.5 1218.2 535.2z" fill="url(#w124)"/><path d="M1468.8 791.8L1208.2 537.4 1222.7 523.4z" fill="url(#w125)"/><path d="M1468.8 791.8L1213.2 526.2 1228.3 512.4z" fill="url(#w126)"/><path d="M1468.8 791.8L1221.2 517.7 1236.8 504.4z" fill="url(#w127)"/><path d="M1468.8 791.8L1230.6 510.9 1246.5 498.1z" fill="url(#w128)"/><path d="M1468.8 791.8L1240.9 505.3 1257.2 493.1z" fill="url(#w129)"/><path d="M1468.8 791.8L1251.9 500.8 1268.4 489.2z" fill="url(#w130)"/><path d="M1468.8 791.8L1264.0 498.1 1280.5 487.3z" fill="url(#w131)"/><path d="M1468.8 791.8L1277.0 497.6 1293.6 487.4z" fill="url(#w132)"/><path d="M1468.8 791.8L1291.1 499.5 1307.6 490.1z" fill="url(#w133)"/><path d="M1468.8 791.8L1305.5 503.1 1321.7 494.5z" fill="url(#w134)"/><path d="M1468.8 791.8L1319.8 508.0 1335.8 500.2z" fill="url(#w135)"/><path d="M1468.8 791.8L1333.2 512.6 1348.9 505.5z" fill="url(#w136)"/><path d="M1468.8 791.8L1345.8 516.8 1361.2 510.4z" fill="url(#w137)"/><path d="M1468.8 791.8L1358.3 522.4 1373.4 516.7z" fill="url(#w138)"/><path d="M1468.8 791.8L1370.2 528.1 1385.0 523.0z" fill="url(#w139)"/><path d="M1468.8 791.8L1381.4 533.6 1395.8 529.1z" fill="url(#w140)"/><path d="M1468.8 791.8L1391.9 538.7 1406.0 534.8z" fill="url(#w141)"/><path d="M1468.8 791.8L1401.8 543.5 1415.7 540.2z" fill="url(#w142)"/><path d="M1468.8 791.8L1411.4 548.8 1424.9 546.0z" fill="url(#w143)"/><path d="M1468.8 791.8L1420.4 553.8 1433.6 551.5z" fill="url(#w144)"/><path d="M1468.8 791.8L1428.9 558.5 1441.9 556.7z" fill="url(#w145)"/><path d="M1468.8 791.8L1437.1 563.2 1449.8 561.8z" fill="url(#w146)"/><path d="M1468.8 791.8L1444.9 567.7 1457.3 566.8z" fill="url(#w147)"/><path d="M1468.8 791.8L1452.3 572.1 1464.5 571.5z" fill="url(#w148)"/><path d="M1468.8 791.8L1459.4 576.2 1471.3 576.1z" fill="url(#w149)"/><path d="M1468.8 791.8L1466.2 580.2 1477.9 580.4z" fill="url(#w150)"/><path d="M1468.8 791.8L1472.8 584.1 1484.3 584.6z" fill="url(#w151)"/><path d="M1468.8 791.8L1479.1 587.8 1490.4 588.7z" fill="url(#w152)"/><path d="M1468.8 791.8L1485.3 591.4 1496.3 592.6z" fill="url(#w153)"/><path d="M1468.8 791.8L1491.2 594.9 1502.1 596.5z" fill="url(#w154)"/><path d="M1468.8 791.8L1497.0 598.3 1507.7 600.2z" fill="url(#w155)"/><path d="M1468.8 791.8L1502.7 601.7 1513.2 603.8z" fill="url(#w156)"/><path d="M1468.8 791.8L1508.2 604.9 1518.5 607.4z" fill="url(#w157)"/><path d="M1468.8 791.8L1513.6 608.1 1523.7 610.9z" fill="url(#w158)"/><path d="M1468.8 791.8L1518.9 611.3 1528.8 614.4z" fill="url(#w159)"/><path d="M1468.8 791.8L1524.1 614.4 1533.8 617.8z" fill="url(#w160)"/><path d="M1468.8 791.8L1529.2 617.5 1538.7 621.1z" fill="url(#w161)"/><path d="M1468.8 791.8L1534.2 620.6 1543.6 624.4z" fill="url(#w162)"/><path d="M1468.8 791.8L1539.2 623.6 1548.4 627.7z" fill="url(#w163)"/><path d="M1468.8 791.8L1544.1 626.6 1553.1 631.0z" fill="url(#w164)"/><path d="M1468.8 791.8L1549.0 629.6 1557.8 634.3z" fill="url(#w165)"/><path d="M1468.8 791.8L1553.8 632.6 1562.5 637.6z" fill="url(#w166)"/><path d="M1468.8 791.8L1558.6 635.6 1567.2 640.8z" fill="url(#w167)"/><path d="M1468.8 791.8L1563.4 638.6 1571.8 644.1z" fill="url(#w168)"/><path d="M1468.8 791.8L1568.2 641.6 1576.4 647.3z" fill="url(#w169)"/><path d="M1468.8 791.8L1573.0 644.6 1581.0 650.6z" fill="url(#w170)"/><path d="M1468.8 791.8L1577.8 647.7 1585.6 653.9z" fill="url(#w171)"/><path d="M1468.8 791.8L1582.6 650.8 1590.3 657.3z" fill="url(#w172)"/><path d="M1468.8 791.8L1587.5 653.9 1594.9 660.7z" fill="url(#w173)"/><path d="M1468.8 791.8L1592.3 657.0 1599.6 664.1z" fill="url(#w174)"/><path d="M1468.8 791.8L1597.3 660.2 1604.4 667.5z" fill="url(#w175)"/><path d="M1468.8 791.8L1602.3 663.4 1609.2 671.0z" fill="url(#w176)"/><path d="M1468.8 791.8L1607.3 666.7 1614.1 674.5z" fill="url(#w177)"/><path d="M1468.8 791.8L1612.5 670.0 1619.0 678.1z" fill="url(#w178)"/><path d="M1468.8 791.8L1617.7 673.4 1624.1 681.8z" fill="url(#w179)"/><path d="M1468.8 791.8L1623.1 676.9 1629.2 685.6z" fill="url(#w180)"/><path d="M1468.8 791.8L1628.5 680.4 1634.4 689.4z" fill="url(#w181)"/><path d="M1468.8 791.8L1634.0 684.1 1639.8 693.5z" fill="url(#w182)"/><path d="M1468.8 791.8L1639.6 688.0 1645.1 697.6z" fill="url(#w183)"/><path d="M1468.8 791.8L1645.3 692.0 1650.6 701.9z" fill="url(#w184)"/><path d="M1468.8 791.8L1651.2 696.1 1656.3 706.3z" fill="url(#w185)"/><path d="M1468.8 791.8L1657.3 700.3 1662.1 710.9z" fill="url(#w186)"/><path d="M1468.8 791.8L1663.6 704.7 1668.2 715.6z" fill="url(#w187)"/><path d="M1468.8 791.8L1670.2 709.3 1674.4 720.6z" fill="url(#w188)"/><path d="M1468.8 791.8L1677.0 714.0 1681.0 725.7z" fill="url(#w189)"/><path d="M1468.8 791.8L1684.1 719.0 1687.8 731.0z" fill="url(#w190)"/><path d="M1468.8 791.8L1691.6 724.2 1695.0 736.6z" fill="url(#w191)"/><path d="M1468.8 791.8L1699.5 729.6 1702.6 742.5z" fill="url(#w192)"/><path d="M1468.8 791.8L1707.8 735.4 1710.5 748.7z" fill="url(#w193)"/><path d="M1468.8 791.8L1716.6 741.5 1719.0 755.3z" fill="url(#w194)"/><path d="M1468.8 791.8L1725.9 747.9 1727.9 762.2z" fill="url(#w195)"/><path d="M1468.8 791.8L1735.9 754.8 1737.5 769.7z" fill="url(#w196)"/><path d="M1468.8 791.8L1746.6 762.2 1747.8 777.6z" fill="url(#w197)"/><path d="M1468.8 791.8L1758.1 770.1 1758.9 786.2z" fill="url(#w198)"/><path d="M1468.8 791.8L1770.7 778.7 1770.9 795.5z" fill="url(#w199)"/></g></g><g clip-path="url(#cdim)"><rect x="1150" y="443" width="740" height="562" fill="#000" fill-opacity=".21"/><path d="M1211.4 443V1005M1293.7 443V1005M1376.0 443V1005M1458.3 443V1005M1540.6 443V1005M1622.9 443V1005M1705.2 443V1005M1787.5 443V1005M1150 920.3H1890M1150 864.2H1890M1150 808.1H1890M1150 752.0H1890M1150 695.9H1890M1150 639.8H1890M1150 583.7H1890M1150 527.6H1890M1150 471.5H1890" stroke="#383c3c" stroke-opacity=".8" stroke-width="1" fill="none"/></g><path d="M1215.0 640.0 1215.0 615.0 1215.6 585.0 1218.8 565.0 1222.5 546.2 1230.6 528.8 1241.2 518.8 1253.8 511.9 1266.2 506.9 1277.5 504.4 1292.5 504.4 1312.5 508.1 1337.5 518.1 1361.2 527.5 1377.5 536.2 1411.2 555.0 1440.0 573.1 1518.5 625.4 1590.0 673.1 1622.5 694.4 1659.4 720.0 1705.6 751.9 1762.5 791.2 1794.2 813.3 1806.7 821.7 1720.0 849.2 1410.0 947.9 1375.0 959.0 1348.3 967.5 1342.5 968.6 1338.3 967.5 1333.3 964.2 1325.0 955.0 1315.0 942.5 1308.3 932.5 1300.8 920.4 1295.0 910.0 1272.5 867.5 1260.0 837.5 1248.8 808.8 1240.0 785.0 1230.5 752.5 1223.8 722.5 1219.5 695.0 1216.2 670.0z" fill="none" stroke="#f0a000" stroke-width="1.2"/><path d="M1154 791.5H1886M1468.5 447V1001" stroke="#d4d4d4" stroke-width="1" stroke-dasharray="4 3" fill="none" shape-rendering="crispEdges"/><path d="M1429.5 589.3L1500.6 632.5" stroke="#008000" stroke-width="3"/><path d="M1500.6 632.5L1571.7 675.8" stroke="#808000" stroke-width="3"/><path d="M1571.7 675.8L1685.3 744.8" stroke="#808000" stroke-width="3"/><path d="M1685.3 744.8L1771.0 796.9" stroke="#800000" stroke-width="3"/><path d="M1771.0 796.9L1635.2 842.3" stroke="#800000" stroke-width="3"/><path d="M1635.2 842.3L1488.1 891.5" stroke="#800080" stroke-width="3"/><path d="M1488.1 891.5L1374.7 929.4" stroke="#800080" stroke-width="3"/><path d="M1374.7 929.4L1334.9 942.7" stroke="#000080" stroke-width="3"/><path d="M1334.9 942.7L1345.1 904.6" stroke="#000080" stroke-width="3"/><path d="M1345.1 904.6L1375.7 790.3" stroke="#008080" stroke-width="3"/><path d="M1375.7 790.3L1408.0 669.7" stroke="#008080" stroke-width="3"/><path d="M1408.0 669.7L1429.5 589.3" stroke="#008000" stroke-width="3"/><path d="M1790.0 810.6 1408.9 566.8 1329.9 946.7z" fill="none" stroke="#fff" stroke-width="3" stroke-linejoin="round"/><path d="M1468.8 791.8L1790.0 810.6M1468.8 791.8L1408.9 566.8M1468.8 791.8L1329.9 946.7M1468.8 791.8L1585.9 680.0M1468.8 791.8L1364.1 781.6M1468.8 791.8L1518.5 892.6" stroke="#3c3c3c" stroke-width=".9" stroke-dasharray="3 4" fill="none"/><path d="M1594.9 745.2 1589.4 746.0 1570.7 749.7 1554.6 754.0 1540.5 758.7 1524.5 765.1 1508.3 772.5 1495.3 779.2 1484.9 785.1 1476.4 790.3 1469.4 794.8 1458.6 802.3 1450.7 808.1 1444.8 812.7 1435.1 820.7 1428.4 826.5 1422.4 831.9 1419.2 834.9 1416.7 840.0" fill="none" stroke="#000" stroke-width="1.6"/><path d="M1416.7 840l6-2.500M1416.700 840l2.500-6" stroke="#000" stroke-width="1.600" fill="none"/><circle cx="1589.4" cy="746.0" r="2.800" fill="#fff" stroke="#000" stroke-width="1.200"/><circle cx="1570.7" cy="749.7" r="2.800" fill="#fff" stroke="#000" stroke-width="1.200"/><circle cx="1524.5" cy="765.1" r="2.800" fill="#fff" stroke="#000" stroke-width="1.200"/><circle cx="1484.9" cy="785.1" r="2.800" fill="#fff" stroke="#000" stroke-width="1.200"/><circle cx="1444.8" cy="812.7" r="2.800" fill="#fff" stroke="#000" stroke-width="1.200"/><circle cx="1579.2" cy="747.2" r="2.800" fill="#00d000" stroke="#004000" stroke-width=".8"/><circle cx="1497.5" cy="779.2" r="2.800" fill="#00d000" stroke="#004000" stroke-width=".8"/><text x="1546.5" y="739" font-family="Liberation Serif,serif" font-size="13" fill="#101010" text-anchor="start">3000</text><text x="1590" y="737" font-family="Liberation Serif,serif" font-size="13" fill="#101010" text-anchor="start">2700</text><text x="1577" y="762.5" font-family="Liberation Serif,serif" font-size="13" fill="#101010" text-anchor="start">A</text><text x="1498" y="755.5" font-family="Liberation Serif,serif" font-size="13" fill="#101010" text-anchor="start">4000</text><text x="1458" y="772" font-family="Liberation Serif,serif" font-size="13" fill="#101010" text-anchor="start">5500</text><text x="1417.5" y="805" font-family="Liberation Serif,serif" font-size="13" fill="#101010" text-anchor="start">9500</text><defs><radialGradient id="mbR" cx=".4" cy=".35" r=".7"><stop offset="0" stop-color="#ff4030"/><stop offset="1" stop-color="#d01810"/></radialGradient></defs><circle cx="1790.8" cy="811.8" r="6.200" fill="#000" fill-opacity=".35"/><circle cx="1790.0" cy="810.6" r="5.600" fill="url(#mbR)" stroke="#d01810" stroke-width="1"/><rect x="1789.5" y="810.1" width="1.200" height="2" fill="#101040"/><defs><radialGradient id="mbG" cx=".4" cy=".35" r=".7"><stop offset="0" stop-color="#40ff20"/><stop offset="1" stop-color="#00c400"/></radialGradient></defs><circle cx="1409.7" cy="568.0" r="6.200" fill="#000" fill-opacity=".35"/><circle cx="1408.9" cy="566.8" r="5.600" fill="url(#mbG)" stroke="#00c400" stroke-width="1"/><rect x="1408.4" y="566.3" width="1.200" height="2" fill="#101040"/><defs><radialGradient id="mbB" cx=".4" cy=".35" r=".7"><stop offset="0" stop-color="#4040f0"/><stop offset="1" stop-color="#2020b0"/></radialGradient></defs><circle cx="1330.7" cy="947.9" r="6.200" fill="#000" fill-opacity=".35"/><circle cx="1329.9" cy="946.7" r="5.600" fill="url(#mbB)" stroke="#2020b0" stroke-width="1"/><rect x="1329.4" y="946.2" width="1.200" height="2" fill="#101040"/><defs><radialGradient id="mbY" cx=".4" cy=".35" r=".7"><stop offset="0" stop-color="#ffffb0"/><stop offset="1" stop-color="#c8c860"/></radialGradient></defs><circle cx="1586.7" cy="681.2" r="6.200" fill="#000" fill-opacity=".35"/><circle cx="1585.9" cy="680.0" r="5.600" fill="url(#mbY)" stroke="#c8c860" stroke-width="1"/><rect x="1585.4" y="679.5" width="1.200" height="2" fill="#101040"/><defs><radialGradient id="mbC" cx=".4" cy=".35" r=".7"><stop offset="0" stop-color="#b0f8f8"/><stop offset="1" stop-color="#68b8b8"/></radialGradient></defs><circle cx="1364.9" cy="782.8" r="6.200" fill="#000" fill-opacity=".35"/><circle cx="1364.1" cy="781.6" r="5.600" fill="url(#mbC)" stroke="#68b8b8" stroke-width="1"/><rect x="1363.6" y="781.1" width="1.200" height="2" fill="#101040"/><defs><radialGradient id="mbM" cx=".4" cy=".35" r=".7"><stop offset="0" stop-color="#ff40ff"/><stop offset="1" stop-color="#b800b8"/></radialGradient></defs><circle cx="1519.3" cy="893.8" r="6.200" fill="#000" fill-opacity=".35"/><circle cx="1518.5" cy="892.6" r="5.600" fill="url(#mbM)" stroke="#b800b8" stroke-width="1"/><rect x="1518.0" y="892.1" width="1.200" height="2" fill="#101040"/><rect x="1453.9" y="791.2" width="11" height="11" fill="#00ffff" fill-opacity="0.28" stroke="#00ffff" stroke-width="2.6"/><path d="M1452.4 803.7V789.7H1466.4" stroke="#000078" stroke-width="1" fill="none"/><path d="M1466.4 789.7V803.7H1452.4" stroke="#e8002c" stroke-width="1" fill="none"/><rect x="1444.6" y="789.0" width="11" height="11" fill="#00ffff" fill-opacity="0.28" stroke="#00ffff" stroke-width="2.6"/><path d="M1443.1 801.5V787.5H1457.1" stroke="#000078" stroke-width="1" fill="none"/><path d="M1457.1 787.5V801.5H1443.1" stroke="#e8002c" stroke-width="1" fill="none"/><rect x="1435.3" y="784.9" width="11" height="11" fill="#00ffff" fill-opacity="0.28" stroke="#00ffff" stroke-width="2.6"/><path d="M1433.8 797.4V783.4H1447.8" stroke="#000078" stroke-width="1" fill="none"/><path d="M1447.8 783.4V797.4H1433.8" stroke="#e8002c" stroke-width="1" fill="none"/><rect x="1426.0" y="789.7" width="11" height="11" fill="#00ffff" fill-opacity="0.28" stroke="#00ffff" stroke-width="2.6"/><path d="M1424.5 802.2V788.2H1438.5" stroke="#000078" stroke-width="1" fill="none"/><path d="M1438.5 788.2V802.2H1424.5" stroke="#e8002c" stroke-width="1" fill="none"/><rect x="1416.7" y="783.6" width="11" height="11" fill="#00ffff" fill-opacity="0.28" stroke="#00ffff" stroke-width="2.6"/><path d="M1415.2 796.1V782.1H1429.2" stroke="#000078" stroke-width="1" fill="none"/><path d="M1429.2 782.1V796.1H1415.2" stroke="#e8002c" stroke-width="1" fill="none"/><rect x="1407.4" y="788.4" width="11" height="11" fill="#00ffff" fill-opacity="0.28" stroke="#00ffff" stroke-width="2.6"/><path d="M1405.9 800.9V786.9H1419.9" stroke="#000078" stroke-width="1" fill="none"/><path d="M1419.9 786.9V800.9H1405.9" stroke="#e8002c" stroke-width="1" fill="none"/><rect x="1398.1" y="780.2" width="11" height="11" fill="#00ffff" fill-opacity="0.28" stroke="#00ffff" stroke-width="2.6"/><path d="M1396.6 792.7V778.7H1410.6" stroke="#000078" stroke-width="1" fill="none"/><path d="M1410.6 778.7V792.7H1396.6" stroke="#e8002c" stroke-width="1" fill="none"/><rect x="1388.8" y="787.1" width="11" height="11" fill="#00ffff" fill-opacity="0.28" stroke="#00ffff" stroke-width="2.6"/><path d="M1387.3 799.6V785.6H1401.3" stroke="#000078" stroke-width="1" fill="none"/><path d="M1401.3 785.6V799.6H1387.3" stroke="#e8002c" stroke-width="1" fill="none"/><rect x="1379.5" y="785.9" width="11" height="11" fill="#00ffff" fill-opacity="0.28" stroke="#00ffff" stroke-width="2.6"/><path d="M1378.0 798.4V784.4H1392.0" stroke="#000078" stroke-width="1" fill="none"/><path d="M1392.0 784.4V798.4H1378.0" stroke="#e8002c" stroke-width="1" fill="none"/><rect x="1370.2" y="784.8" width="11" height="11" fill="#00ffff" fill-opacity="1" stroke="#00ffff" stroke-width="2.6"/><path d="M1368.7 797.3V783.3H1382.7" stroke="#000078" stroke-width="1" fill="none"/><path d="M1382.7 783.3V797.3H1368.7" stroke="#e8002c" stroke-width="1" fill="none"/><path d="M1372.2 789.8h7M1375.7 786.3v7" stroke="#000" stroke-width="1.400"/><rect x="1464.5" y="794.5" width="11" height="11" fill="#ff00e8" fill-opacity="0.28" stroke="#ff00e8" stroke-width="2.6"/><path d="M1463.0 807.0V793.0H1477.0" stroke="#000078" stroke-width="1" fill="none"/><path d="M1477.0 793.0V807.0H1463.0" stroke="#e8002c" stroke-width="1" fill="none"/><rect x="1466.2" y="803.5" width="11" height="11" fill="#ff00e8" fill-opacity="0.28" stroke="#ff00e8" stroke-width="2.6"/><path d="M1464.7 816.0V802.0H1478.7" stroke="#000078" stroke-width="1" fill="none"/><path d="M1478.7 802.0V816.0H1464.7" stroke="#e8002c" stroke-width="1" fill="none"/><rect x="1467.0" y="816.5" width="11" height="11" fill="#ff00e8" fill-opacity="0.28" stroke="#ff00e8" stroke-width="2.6"/><path d="M1465.5 829.0V815.0H1479.5" stroke="#000078" stroke-width="1" fill="none"/><path d="M1479.5 815.0V829.0H1465.5" stroke="#e8002c" stroke-width="1" fill="none"/><rect x="1471.2" y="826.5" width="11" height="11" fill="#ff00e8" fill-opacity="0.28" stroke="#ff00e8" stroke-width="2.6"/><path d="M1469.7 839.0V825.0H1483.7" stroke="#000078" stroke-width="1" fill="none"/><path d="M1483.7 825.0V839.0H1469.7" stroke="#e8002c" stroke-width="1" fill="none"/><rect x="1475.5" y="833.0" width="11" height="11" fill="#ff00e8" fill-opacity="0.28" stroke="#ff00e8" stroke-width="2.6"/><path d="M1474.0 845.5V831.5H1488.0" stroke="#000078" stroke-width="1" fill="none"/><path d="M1488.0 831.5V845.5H1474.0" stroke="#e8002c" stroke-width="1" fill="none"/><rect x="1477.5" y="842.0" width="11" height="11" fill="#ff00e8" fill-opacity="0.28" stroke="#ff00e8" stroke-width="2.6"/><path d="M1476.0 854.5V840.5H1490.0" stroke="#000078" stroke-width="1" fill="none"/><path d="M1490.0 840.5V854.5H1476.0" stroke="#e8002c" stroke-width="1" fill="none"/><rect x="1477.8" y="854.5" width="11" height="11" fill="#ff00e8" fill-opacity="0.28" stroke="#ff00e8" stroke-width="2.6"/><path d="M1476.3 867.0V853.0H1490.3" stroke="#000078" stroke-width="1" fill="none"/><path d="M1490.3 853.0V867.0H1476.3" stroke="#e8002c" stroke-width="1" fill="none"/><rect x="1477.0" y="865.5" width="11" height="11" fill="#ff00e8" fill-opacity="0.28" stroke="#ff00e8" stroke-width="2.6"/><path d="M1475.5 878.0V864.0H1489.5" stroke="#000078" stroke-width="1" fill="none"/><path d="M1489.5 864.0V878.0H1475.5" stroke="#e8002c" stroke-width="1" fill="none"/><rect x="1477.8" y="873.5" width="11" height="11" fill="#ff00e8" fill-opacity="0.28" stroke="#ff00e8" stroke-width="2.6"/><path d="M1476.3 886.0V872.0H1490.3" stroke="#000078" stroke-width="1" fill="none"/><path d="M1490.3 872.0V886.0H1476.3" stroke="#e8002c" stroke-width="1" fill="none"/><rect x="1481.0" y="886.2" width="11" height="11" fill="#ff00e8" fill-opacity="1" stroke="#ff00e8" stroke-width="2.6"/><path d="M1479.5 898.7V884.7H1493.5" stroke="#000078" stroke-width="1" fill="none"/><path d="M1493.5 884.7V898.7H1479.5" stroke="#e8002c" stroke-width="1" fill="none"/><path d="M1483.0 891.2h7M1486.5 887.7v7" stroke="#000" stroke-width="1.400"/><rect x="1473.6" y="774.7" width="11" height="11" fill="#ffe800" fill-opacity="0.28" stroke="#ffe800" stroke-width="2.6"/><path d="M1472.1 787.2V773.2H1486.1" stroke="#000078" stroke-width="1" fill="none"/><path d="M1486.1 773.2V787.2H1472.1" stroke="#e8002c" stroke-width="1" fill="none"/><rect x="1483.9" y="763.1" width="11" height="11" fill="#ffe800" fill-opacity="0.28" stroke="#ffe800" stroke-width="2.6"/><path d="M1482.4 775.6V761.6H1496.4" stroke="#000078" stroke-width="1" fill="none"/><path d="M1496.4 761.6V775.6H1482.4" stroke="#e8002c" stroke-width="1" fill="none"/><rect x="1494.1" y="751.5" width="11" height="11" fill="#ffe800" fill-opacity="0.28" stroke="#ffe800" stroke-width="2.6"/><path d="M1492.6 764.0V750.0H1506.6" stroke="#000078" stroke-width="1" fill="none"/><path d="M1506.6 750.0V764.0H1492.6" stroke="#e8002c" stroke-width="1" fill="none"/><rect x="1504.4" y="739.9" width="11" height="11" fill="#ffe800" fill-opacity="0.28" stroke="#ffe800" stroke-width="2.6"/><path d="M1502.9 752.4V738.4H1516.9" stroke="#000078" stroke-width="1" fill="none"/><path d="M1516.9 738.4V752.4H1502.9" stroke="#e8002c" stroke-width="1" fill="none"/><rect x="1514.7" y="728.3" width="11" height="11" fill="#ffe800" fill-opacity="0.28" stroke="#ffe800" stroke-width="2.6"/><path d="M1513.2 740.8V726.8H1527.2" stroke="#000078" stroke-width="1" fill="none"/><path d="M1527.2 726.8V740.8H1513.2" stroke="#e8002c" stroke-width="1" fill="none"/><rect x="1525.0" y="716.7" width="11" height="11" fill="#ffe800" fill-opacity="0.28" stroke="#ffe800" stroke-width="2.6"/><path d="M1523.5 729.2V715.2H1537.5" stroke="#000078" stroke-width="1" fill="none"/><path d="M1537.5 715.2V729.2H1523.5" stroke="#e8002c" stroke-width="1" fill="none"/><rect x="1535.3" y="705.1" width="11" height="11" fill="#ffe800" fill-opacity="0.28" stroke="#ffe800" stroke-width="2.6"/><path d="M1533.8 717.6V703.6H1547.8" stroke="#000078" stroke-width="1" fill="none"/><path d="M1547.8 703.6V717.6H1533.8" stroke="#e8002c" stroke-width="1" fill="none"/><rect x="1545.6" y="693.5" width="11" height="11" fill="#ffe800" fill-opacity="0.28" stroke="#ffe800" stroke-width="2.6"/><path d="M1544.1 706.0V692.0H1558.1" stroke="#000078" stroke-width="1" fill="none"/><path d="M1558.1 692.0V706.0H1544.1" stroke="#e8002c" stroke-width="1" fill="none"/><rect x="1555.9" y="681.9" width="11" height="11" fill="#ffe800" fill-opacity="0.28" stroke="#ffe800" stroke-width="2.6"/><path d="M1554.4 694.4V680.4H1568.4" stroke="#000078" stroke-width="1" fill="none"/><path d="M1568.4 680.4V694.4H1554.4" stroke="#e8002c" stroke-width="1" fill="none"/><rect x="1566.2" y="670.3" width="11" height="11" fill="#ffe800" fill-opacity="1" stroke="#ffe800" stroke-width="2.6"/><path d="M1564.7 682.8V668.8H1578.7" stroke="#000078" stroke-width="1" fill="none"/><path d="M1578.7 668.8V682.8H1564.7" stroke="#e8002c" stroke-width="1" fill="none"/><path d="M1568.2 675.3h7M1571.7 671.8v7" stroke="#000" stroke-width="1.400"/><rect x="1449.9" y="801.4" width="11" height="11" fill="#4800ff" fill-opacity="0.28" stroke="#4800ff" stroke-width="2.6"/><path d="M1448.4 813.9V799.9H1462.4" stroke="#000078" stroke-width="1" fill="none"/><path d="M1462.4 799.9V813.9H1448.4" stroke="#e8002c" stroke-width="1" fill="none"/><rect x="1436.5" y="816.5" width="11" height="11" fill="#4800ff" fill-opacity="0.28" stroke="#4800ff" stroke-width="2.6"/><path d="M1435.0 829.0V815.0H1449.0" stroke="#000078" stroke-width="1" fill="none"/><path d="M1449.0 815.0V829.0H1435.0" stroke="#e8002c" stroke-width="1" fill="none"/><rect x="1423.1" y="831.6" width="11" height="11" fill="#4800ff" fill-opacity="0.28" stroke="#4800ff" stroke-width="2.6"/><path d="M1421.6 844.1V830.1H1435.6" stroke="#000078" stroke-width="1" fill="none"/><path d="M1435.6 830.1V844.1H1421.6" stroke="#e8002c" stroke-width="1" fill="none"/><rect x="1409.7" y="846.7" width="11" height="11" fill="#4800ff" fill-opacity="0.28" stroke="#4800ff" stroke-width="2.6"/><path d="M1408.2 859.2V845.2H1422.2" stroke="#000078" stroke-width="1" fill="none"/><path d="M1422.2 845.2V859.2H1408.2" stroke="#e8002c" stroke-width="1" fill="none"/><rect x="1396.3" y="861.8" width="11" height="11" fill="#4800ff" fill-opacity="0.28" stroke="#4800ff" stroke-width="2.6"/><path d="M1394.8 874.3V860.3H1408.8" stroke="#000078" stroke-width="1" fill="none"/><path d="M1408.8 860.3V874.3H1394.8" stroke="#e8002c" stroke-width="1" fill="none"/><rect x="1382.9" y="876.9" width="11" height="11" fill="#4800ff" fill-opacity="0.28" stroke="#4800ff" stroke-width="2.6"/><path d="M1381.4 889.4V875.4H1395.4" stroke="#000078" stroke-width="1" fill="none"/><path d="M1395.4 875.4V889.4H1381.4" stroke="#e8002c" stroke-width="1" fill="none"/><rect x="1369.5" y="892.0" width="11" height="11" fill="#4800ff" fill-opacity="0.28" stroke="#4800ff" stroke-width="2.6"/><path d="M1368.0 904.5V890.5H1382.0" stroke="#000078" stroke-width="1" fill="none"/><path d="M1382.0 890.5V904.5H1368.0" stroke="#e8002c" stroke-width="1" fill="none"/><rect x="1356.1" y="907.1" width="11" height="11" fill="#4800ff" fill-opacity="0.28" stroke="#4800ff" stroke-width="2.6"/><path d="M1354.6 919.6V905.6H1368.6" stroke="#000078" stroke-width="1" fill="none"/><path d="M1368.6 905.6V919.6H1354.6" stroke="#e8002c" stroke-width="1" fill="none"/><rect x="1342.7" y="922.1" width="11" height="11" fill="#4800ff" fill-opacity="0.28" stroke="#4800ff" stroke-width="2.6"/><path d="M1341.2 934.6V920.6H1355.2" stroke="#000078" stroke-width="1" fill="none"/><path d="M1355.2 920.6V934.6H1341.2" stroke="#e8002c" stroke-width="1" fill="none"/><rect x="1329.4" y="937.2" width="11" height="11" fill="#4800ff" fill-opacity="1" stroke="#4800ff" stroke-width="2.6"/><path d="M1327.9 949.7V935.7H1341.9" stroke="#000078" stroke-width="1" fill="none"/><path d="M1341.9 935.7V949.7H1327.9" stroke="#e8002c" stroke-width="1" fill="none"/><path d="M1331.4 942.2h7M1334.9 938.7v7" stroke="#fff" stroke-width="1.400"/><rect x="1459.3" y="766.1" width="11" height="11" fill="#40ff00" fill-opacity="0.28" stroke="#40ff00" stroke-width="2.6"/><path d="M1457.8 778.6V764.6H1471.8" stroke="#000078" stroke-width="1" fill="none"/><path d="M1471.8 764.6V778.6H1457.8" stroke="#e8002c" stroke-width="1" fill="none"/><rect x="1455.4" y="745.8" width="11" height="11" fill="#40ff00" fill-opacity="0.28" stroke="#40ff00" stroke-width="2.6"/><path d="M1453.9 758.3V744.3H1467.9" stroke="#000078" stroke-width="1" fill="none"/><path d="M1467.9 744.3V758.3H1453.9" stroke="#e8002c" stroke-width="1" fill="none"/><rect x="1451.5" y="725.6" width="11" height="11" fill="#40ff00" fill-opacity="0.28" stroke="#40ff00" stroke-width="2.6"/><path d="M1450.0 738.1V724.1H1464.0" stroke="#000078" stroke-width="1" fill="none"/><path d="M1464.0 724.1V738.1H1450.0" stroke="#e8002c" stroke-width="1" fill="none"/><rect x="1447.5" y="705.3" width="11" height="11" fill="#40ff00" fill-opacity="0.28" stroke="#40ff00" stroke-width="2.6"/><path d="M1446.0 717.8V703.8H1460.0" stroke="#000078" stroke-width="1" fill="none"/><path d="M1460.0 703.8V717.8H1446.0" stroke="#e8002c" stroke-width="1" fill="none"/><rect x="1443.6" y="685.1" width="11" height="11" fill="#40ff00" fill-opacity="0.28" stroke="#40ff00" stroke-width="2.6"/><path d="M1442.1 697.6V683.6H1456.1" stroke="#000078" stroke-width="1" fill="none"/><path d="M1456.1 683.6V697.6H1442.1" stroke="#e8002c" stroke-width="1" fill="none"/><rect x="1439.7" y="664.8" width="11" height="11" fill="#40ff00" fill-opacity="0.28" stroke="#40ff00" stroke-width="2.6"/><path d="M1438.2 677.3V663.3H1452.2" stroke="#000078" stroke-width="1" fill="none"/><path d="M1452.2 663.3V677.3H1438.2" stroke="#e8002c" stroke-width="1" fill="none"/><rect x="1435.8" y="644.6" width="11" height="11" fill="#40ff00" fill-opacity="0.28" stroke="#40ff00" stroke-width="2.6"/><path d="M1434.3 657.1V643.1H1448.3" stroke="#000078" stroke-width="1" fill="none"/><path d="M1448.3 643.1V657.1H1434.3" stroke="#e8002c" stroke-width="1" fill="none"/><rect x="1431.8" y="624.3" width="11" height="11" fill="#40ff00" fill-opacity="0.28" stroke="#40ff00" stroke-width="2.6"/><path d="M1430.3 636.8V622.8H1444.3" stroke="#000078" stroke-width="1" fill="none"/><path d="M1444.3 622.8V636.8H1430.3" stroke="#e8002c" stroke-width="1" fill="none"/><rect x="1427.9" y="604.1" width="11" height="11" fill="#40ff00" fill-opacity="0.28" stroke="#40ff00" stroke-width="2.6"/><path d="M1426.4 616.6V602.6H1440.4" stroke="#000078" stroke-width="1" fill="none"/><path d="M1440.4 602.6V616.6H1426.4" stroke="#e8002c" stroke-width="1" fill="none"/><rect x="1424.0" y="583.8" width="11" height="11" fill="#40ff00" fill-opacity="1" stroke="#40ff00" stroke-width="2.6"/><path d="M1422.5 596.3V582.3H1436.5" stroke="#000078" stroke-width="1" fill="none"/><path d="M1436.5 582.3V596.3H1422.5" stroke="#e8002c" stroke-width="1" fill="none"/><path d="M1426.0 588.8h7M1429.5 585.3v7" stroke="#000" stroke-width="1.400"/><rect x="1493.5" y="786.8" width="11" height="11" fill="#ff0000" fill-opacity="0.28" stroke="#ff0000" stroke-width="2.6"/><path d="M1492.0 799.3V785.3H1506.0" stroke="#000078" stroke-width="1" fill="none"/><path d="M1506.0 785.3V799.3H1492.0" stroke="#e8002c" stroke-width="1" fill="none"/><rect x="1523.7" y="787.3" width="11" height="11" fill="#ff0000" fill-opacity="0.28" stroke="#ff0000" stroke-width="2.6"/><path d="M1522.2 799.8V785.8H1536.2" stroke="#000078" stroke-width="1" fill="none"/><path d="M1536.2 785.8V799.8H1522.2" stroke="#e8002c" stroke-width="1" fill="none"/><rect x="1553.9" y="787.8" width="11" height="11" fill="#ff0000" fill-opacity="0.28" stroke="#ff0000" stroke-width="2.6"/><path d="M1552.4 800.3V786.3H1566.4" stroke="#000078" stroke-width="1" fill="none"/><path d="M1566.4 786.3V800.3H1552.4" stroke="#e8002c" stroke-width="1" fill="none"/><rect x="1584.2" y="788.4" width="11" height="11" fill="#ff0000" fill-opacity="0.28" stroke="#ff0000" stroke-width="2.6"/><path d="M1582.7 800.9V786.9H1596.7" stroke="#000078" stroke-width="1" fill="none"/><path d="M1596.7 786.9V800.9H1582.7" stroke="#e8002c" stroke-width="1" fill="none"/><rect x="1614.4" y="788.9" width="11" height="11" fill="#ff0000" fill-opacity="0.28" stroke="#ff0000" stroke-width="2.6"/><path d="M1612.9 801.4V787.4H1626.9" stroke="#000078" stroke-width="1" fill="none"/><path d="M1626.9 787.4V801.4H1612.9" stroke="#e8002c" stroke-width="1" fill="none"/><rect x="1644.6" y="789.4" width="11" height="11" fill="#ff0000" fill-opacity="0.28" stroke="#ff0000" stroke-width="2.6"/><path d="M1643.1 801.9V787.9H1657.1" stroke="#000078" stroke-width="1" fill="none"/><path d="M1657.1 787.9V801.9H1643.1" stroke="#e8002c" stroke-width="1" fill="none"/><rect x="1674.9" y="789.9" width="11" height="11" fill="#ff0000" fill-opacity="0.28" stroke="#ff0000" stroke-width="2.6"/><path d="M1673.4 802.4V788.4H1687.4" stroke="#000078" stroke-width="1" fill="none"/><path d="M1687.4 788.4V802.4H1673.4" stroke="#e8002c" stroke-width="1" fill="none"/><rect x="1705.1" y="790.4" width="11" height="11" fill="#ff0000" fill-opacity="0.28" stroke="#ff0000" stroke-width="2.6"/><path d="M1703.6 802.9V788.9H1717.6" stroke="#000078" stroke-width="1" fill="none"/><path d="M1717.6 788.9V802.9H1703.6" stroke="#e8002c" stroke-width="1" fill="none"/><rect x="1735.3" y="790.9" width="11" height="11" fill="#ff0000" fill-opacity="0.28" stroke="#ff0000" stroke-width="2.6"/><path d="M1733.8 803.4V789.4H1747.8" stroke="#000078" stroke-width="1" fill="none"/><path d="M1747.8 789.4V803.4H1733.8" stroke="#e8002c" stroke-width="1" fill="none"/><rect x="1765.5" y="791.4" width="11" height="11" fill="#ff0000" fill-opacity="1" stroke="#ff0000" stroke-width="2.6"/><path d="M1764.0 803.9V789.9H1778.0" stroke="#000078" stroke-width="1" fill="none"/><path d="M1778.0 789.9V803.9H1764.0" stroke="#e8002c" stroke-width="1" fill="none"/><path d="M1767.5 796.4h7M1771.0 792.9v7" stroke="#fff" stroke-width="1.400"/><rect x="1456.7" y="689.0" width="14" height="14" fill="none" stroke="#c8903c" stroke-width="1.600"/><rect x="1459.2" y="691.5" width="9" height="9" fill="none" stroke="#5a6a4a" stroke-width="1"/><path d="M1456.7 689.0l3 3M1470.7 689.0l-3 3M1456.7 703.0l3-3M1470.7 703.0l-3-3" stroke="#f4ecd8" stroke-width="1"/><rect x="1517.0" y="693.0" width="14" height="14" fill="none" stroke="#c8903c" stroke-width="1.600"/><rect x="1519.5" y="695.5" width="9" height="9" fill="none" stroke="#5a6a4a" stroke-width="1"/><path d="M1517.0 693.0l3 3M1531.0 693.0l-3 3M1517.0 707.0l3-3M1531.0 707.0l-3-3" stroke="#f4ecd8" stroke-width="1"/><rect x="1572.3" y="702.3" width="14" height="14" fill="none" stroke="#c8903c" stroke-width="1.600"/><rect x="1574.8" y="704.8" width="9" height="9" fill="none" stroke="#5a6a4a" stroke-width="1"/><path d="M1572.3 702.3l3 3M1586.3 702.3l-3 3M1572.3 716.3l3-3M1586.3 716.3l-3-3" stroke="#f4ecd8" stroke-width="1"/><rect x="1593.7" y="722.3" width="14" height="14" fill="none" stroke="#c8903c" stroke-width="1.600"/><rect x="1596.2" y="724.8" width="9" height="9" fill="none" stroke="#5a6a4a" stroke-width="1"/><path d="M1593.7 722.3l3 3M1607.7 722.3l-3 3M1593.7 736.3l3-3M1607.7 736.3l-3-3" stroke="#f4ecd8" stroke-width="1"/><rect x="1623.0" y="739.0" width="14" height="14" fill="none" stroke="#c8903c" stroke-width="1.600"/><rect x="1625.5" y="741.5" width="9" height="9" fill="none" stroke="#5a6a4a" stroke-width="1"/><path d="M1623.0 739.0l3 3M1637.0 739.0l-3 3M1623.0 753.0l3-3M1637.0 753.0l-3-3" stroke="#f4ecd8" stroke-width="1"/><rect x="1482.7" y="724.0" width="14" height="14" fill="none" stroke="#c8903c" stroke-width="1.600"/><rect x="1485.2" y="726.5" width="9" height="9" fill="none" stroke="#5a6a4a" stroke-width="1"/><path d="M1482.7 724.0l3 3M1496.7 724.0l-3 3M1482.7 738.0l3-3M1496.7 738.0l-3-3" stroke="#f4ecd8" stroke-width="1"/><rect x="1415.8" y="765.2" width="14" height="14" fill="none" stroke="#c8903c" stroke-width="1.600"/><rect x="1418.3" y="767.7" width="9" height="9" fill="none" stroke="#5a6a4a" stroke-width="1"/><path d="M1415.8 765.2l3 3M1429.8 765.2l-3 3M1415.8 779.2l3-3M1429.8 779.2l-3-3" stroke="#f4ecd8" stroke-width="1"/><rect x="1518.7" y="766.5" width="14" height="14" fill="none" stroke="#c8903c" stroke-width="1.600"/><rect x="1521.2" y="769.0" width="9" height="9" fill="none" stroke="#5a6a4a" stroke-width="1"/><path d="M1518.7 766.5l3 3M1532.7 766.5l-3 3M1518.7 780.5l3-3M1532.7 780.5l-3-3" stroke="#f4ecd8" stroke-width="1"/><rect x="1537.3" y="760.7" width="14" height="14" fill="none" stroke="#c8903c" stroke-width="1.600"/><rect x="1539.8" y="763.2" width="9" height="9" fill="none" stroke="#5a6a4a" stroke-width="1"/><path d="M1537.3 760.7l3 3M1551.3 760.7l-3 3M1537.3 774.7l3-3M1551.3 774.7l-3-3" stroke="#f4ecd8" stroke-width="1"/><rect x="1586.7" y="796.8" width="14" height="14" fill="none" stroke="#c8903c" stroke-width="1.600"/><rect x="1589.2" y="799.3" width="9" height="9" fill="none" stroke="#5a6a4a" stroke-width="1"/><path d="M1586.7 796.8l3 3M1600.7 796.8l-3 3M1586.7 810.8l3-3M1600.7 810.8l-3-3" stroke="#f4ecd8" stroke-width="1"/><rect x="1653.0" y="790.0" width="14" height="14" fill="none" stroke="#c8903c" stroke-width="1.600"/><rect x="1655.5" y="792.5" width="9" height="9" fill="none" stroke="#5a6a4a" stroke-width="1"/><path d="M1653.0 790.0l3 3M1667.0 790.0l-3 3M1653.0 804.0l3-3M1667.0 804.0l-3-3" stroke="#f4ecd8" stroke-width="1"/><rect x="1376.0" y="817.7" width="14" height="14" fill="none" stroke="#c8903c" stroke-width="1.600"/><rect x="1378.5" y="820.2" width="9" height="9" fill="none" stroke="#5a6a4a" stroke-width="1"/><path d="M1376.0 817.7l3 3M1390.0 817.7l-3 3M1376.0 831.7l3-3M1390.0 831.7l-3-3" stroke="#f4ecd8" stroke-width="1"/><rect x="1407.2" y="821.8" width="14" height="14" fill="none" stroke="#c8903c" stroke-width="1.600"/><rect x="1409.7" y="824.3" width="9" height="9" fill="none" stroke="#5a6a4a" stroke-width="1"/><path d="M1407.2 821.8l3 3M1421.2 821.8l-3 3M1407.2 835.8l3-3M1421.2 835.8l-3-3" stroke="#f4ecd8" stroke-width="1"/><rect x="1421.3" y="824.3" width="14" height="14" fill="none" stroke="#c8903c" stroke-width="1.600"/><rect x="1423.8" y="826.8" width="9" height="9" fill="none" stroke="#5a6a4a" stroke-width="1"/><path d="M1421.3 824.3l3 3M1435.3 824.3l-3 3M1421.3 838.3l3-3M1435.3 838.3l-3-3" stroke="#f4ecd8" stroke-width="1"/><rect x="1508.8" y="833.5" width="14" height="14" fill="none" stroke="#c8903c" stroke-width="1.600"/><rect x="1511.3" y="836.0" width="9" height="9" fill="none" stroke="#5a6a4a" stroke-width="1"/><path d="M1508.8 833.5l3 3M1522.8 833.5l-3 3M1508.8 847.5l3-3M1522.8 847.5l-3-3" stroke="#f4ecd8" stroke-width="1"/><rect x="1440.5" y="849.5" width="14" height="14" fill="none" stroke="#c8903c" stroke-width="1.600"/><rect x="1443.0" y="852.0" width="9" height="9" fill="none" stroke="#5a6a4a" stroke-width="1"/><path d="M1440.5 849.5l3 3M1454.5 849.5l-3 3M1440.5 863.5l3-3M1454.5 863.5l-3-3" stroke="#f4ecd8" stroke-width="1"/><rect x="1381.2" y="863.7" width="14" height="14" fill="none" stroke="#c8903c" stroke-width="1.600"/><rect x="1383.7" y="866.2" width="9" height="9" fill="none" stroke="#5a6a4a" stroke-width="1"/><path d="M1381.2 863.7l3 3M1395.2 863.7l-3 3M1381.2 877.7l3-3M1395.2 877.7l-3-3" stroke="#f4ecd8" stroke-width="1"/><rect x="1354.0" y="896.0" width="14" height="14" fill="none" stroke="#c8903c" stroke-width="1.600"/><rect x="1356.5" y="898.5" width="9" height="9" fill="none" stroke="#5a6a4a" stroke-width="1"/><path d="M1354.0 896.0l3 3M1368.0 896.0l-3 3M1354.0 910.0l3-3M1368.0 910.0l-3-3" stroke="#f4ecd8" stroke-width="1"/><defs><radialGradient id="wb" cx=".4" cy=".35" r=".7"><stop offset="0" stop-color="#fff"/><stop offset=".6" stop-color="#f0f0f0"/><stop offset="1" stop-color="#b0b0b0"/></radialGradient></defs><circle cx="1472.3" cy="701" r="5.600" fill="#000" fill-opacity=".35"/><circle cx="1471.7" cy="700" r="5" fill="url(#wb)" stroke="#202020" stroke-width="1.100"/><circle cx="1524.6" cy="697" r="5.600" fill="#000" fill-opacity=".35"/><circle cx="1524" cy="696" r="5" fill="url(#wb)" stroke="#202020" stroke-width="1.100"/><circle cx="1588.8999999999999" cy="714.3" r="5.600" fill="#000" fill-opacity=".35"/><circle cx="1588.3" cy="713.3" r="5" fill="url(#wb)" stroke="#202020" stroke-width="1.100"/><circle cx="1607.3" cy="729.3" r="5.600" fill="#000" fill-opacity=".35"/><circle cx="1606.7" cy="728.3" r="5" fill="url(#wb)" stroke="#202020" stroke-width="1.100"/><circle cx="1637.6" cy="747" r="5.600" fill="#000" fill-opacity=".35"/><circle cx="1637" cy="746" r="5" fill="url(#wb)" stroke="#202020" stroke-width="1.100"/><circle cx="1497.3" cy="736" r="5.600" fill="#000" fill-opacity=".35"/><circle cx="1496.7" cy="735" r="5" fill="url(#wb)" stroke="#202020" stroke-width="1.100"/><circle cx="1431.3999999999999" cy="775.2" r="5.600" fill="#000" fill-opacity=".35"/><circle cx="1430.8" cy="774.2" r="5" fill="url(#wb)" stroke="#202020" stroke-width="1.100"/><circle cx="1532.3" cy="778.5" r="5.600" fill="#000" fill-opacity=".35"/><circle cx="1531.7" cy="777.5" r="5" fill="url(#wb)" stroke="#202020" stroke-width="1.100"/><circle cx="1553.8999999999999" cy="772.7" r="5.600" fill="#000" fill-opacity=".35"/><circle cx="1553.3" cy="771.7" r="5" fill="url(#wb)" stroke="#202020" stroke-width="1.100"/><circle cx="1597.3" cy="801.8" r="5.600" fill="#000" fill-opacity=".35"/><circle cx="1596.7" cy="800.8" r="5" fill="url(#wb)" stroke="#202020" stroke-width="1.100"/><circle cx="1663.6" cy="798" r="5.600" fill="#000" fill-opacity=".35"/><circle cx="1663" cy="797" r="5" fill="url(#wb)" stroke="#202020" stroke-width="1.100"/><circle cx="1375.6" cy="822.7" r="5.600" fill="#000" fill-opacity=".35"/><circle cx="1375" cy="821.7" r="5" fill="url(#wb)" stroke="#202020" stroke-width="1.100"/><circle cx="1419.8" cy="826.8" r="5.600" fill="#000" fill-opacity=".35"/><circle cx="1419.2" cy="825.8" r="5" fill="url(#wb)" stroke="#202020" stroke-width="1.100"/><circle cx="1433.8999999999999" cy="834.3" r="5.600" fill="#000" fill-opacity=".35"/><circle cx="1433.3" cy="833.3" r="5" fill="url(#wb)" stroke="#202020" stroke-width="1.100"/><circle cx="1521.3999999999999" cy="843.5" r="5.600" fill="#000" fill-opacity=".35"/><circle cx="1520.8" cy="842.5" r="5" fill="url(#wb)" stroke="#202020" stroke-width="1.100"/><circle cx="1453.1" cy="853.5" r="5.600" fill="#000" fill-opacity=".35"/><circle cx="1452.5" cy="852.5" r="5" fill="url(#wb)" stroke="#202020" stroke-width="1.100"/><circle cx="1389.8" cy="872.7" r="5.600" fill="#000" fill-opacity=".35"/><circle cx="1389.2" cy="871.7" r="5" fill="url(#wb)" stroke="#202020" stroke-width="1.100"/><circle cx="1365.6" cy="899" r="5.600" fill="#000" fill-opacity=".35"/><circle cx="1365" cy="898" r="5" fill="url(#wb)" stroke="#202020" stroke-width="1.100"/><circle cx="1455.6" cy="766.8" r="5.600" fill="#000" fill-opacity=".35"/><circle cx="1455" cy="765.8" r="5" fill="url(#wb)" stroke="#202020" stroke-width="1.100"/><circle cx="1473.2" cy="790.3" r="5.600" fill="url(#wb)" stroke="#101010" stroke-width="1.500"/><circle cx="1485.0" cy="789.2" r="5.600" fill="url(#wb)" stroke="#101010" stroke-width="1.500"/><text x="1303.7" y="486.9" font-family="Liberation Serif,serif" font-size="11" fill="#dcdcdc" text-anchor="start">520 nm</text><text x="1427.2" y="537.7" font-family="Liberation Serif,serif" font-size="11" fill="#dcdcdc" text-anchor="start">540 nm</text><text x="1540.2" y="611.6" font-family="Liberation Serif,serif" font-size="11" fill="#dcdcdc" text-anchor="start">560 nm</text><text x="1620.2" y="665.6" font-family="Liberation Serif,serif" font-size="11" fill="#dcdcdc" text-anchor="start">580 nm</text><text x="1675" y="703" font-family="Liberation Serif,serif" font-size="11" fill="#dcdcdc" text-anchor="start">600 nm</text><text x="1726.6" y="738" font-family="Liberation Serif,serif" font-size="11" fill="#dcdcdc" text-anchor="start">620 nm</text><text x="1783" y="776.2" font-family="Liberation Serif,serif" font-size="11" fill="#dcdcdc" text-anchor="start">640 nm</text><text x="1807" y="793" font-family="Liberation Serif,serif" font-size="11" fill="#dcdcdc" text-anchor="start">660 nm</text><text x="1817.5" y="800" font-family="Liberation Serif,serif" font-size="11" fill="#dcdcdc" text-anchor="start">680 nm</text><text x="1205" y="660" font-family="Liberation Serif,serif" font-size="11" fill="#dcdcdc" text-anchor="end">500 nm</text><text x="1267.2" y="893.5" font-family="Liberation Serif,serif" font-size="11" fill="#dcdcdc" text-anchor="end">480 nm</text><text x="1303.8" y="955.8" font-family="Liberation Serif,serif" font-size="11" fill="#dcdcdc" text-anchor="end">460 nm</text><text x="1315" y="971.2" font-family="Liberation Serif,serif" font-size="11" fill="#dcdcdc" text-anchor="end">440 nm</text><text x="1323.8" y="978.8" font-family="Liberation Serif,serif" font-size="11" fill="#dcdcdc" text-anchor="end">420 nm</text><path d="M1288.3 504.3L1304.5 482M1411.4 554.7L1427.6 531.6M1523.9 629L1540.2 605.9M1604.4 682.7L1620.6 659.5M1659.2 720.5L1675.4 697.3M1711.2 755.6L1727 732M1770 790L1783 772.5M1794.2 807.5L1806.7 790.4M1802 817.5L1817 796.7M1214.3 644.5L1200.1 649.4M1277.3 877.6L1261.9 882.5M1313.3 940.8L1298.3 946.2M1325 956.2L1310 961.7M1332.5 963.8L1318.3 968.8" stroke="#9a9a9a" stroke-width="1" fill="none"/><text x="1295.4" y="1000.8" font-family="Liberation Serif,serif" font-size="13" fill="#f4f4f4" text-anchor="start">0.1</text><text x="1377.7" y="1000.8" font-family="Liberation Serif,serif" font-size="13" fill="#f4f4f4" text-anchor="start">0.2</text><text x="1460.0000000000002" y="1000.8" font-family="Liberation Serif,serif" font-size="13" fill="#f4f4f4" text-anchor="start">0.3</text><text x="1542.3000000000002" y="1000.8" font-family="Liberation Serif,serif" font-size="13" fill="#f4f4f4" text-anchor="start">0.4</text><text x="1624.6000000000001" y="1000.8" font-family="Liberation Serif,serif" font-size="13" fill="#f4f4f4" text-anchor="start">0.5</text><text x="1706.9" y="1000.8" font-family="Liberation Serif,serif" font-size="13" fill="#f4f4f4" text-anchor="start">0.6</text><text x="1789.2" y="1000.8" font-family="Liberation Serif,serif" font-size="13" fill="#f4f4f4" text-anchor="start">0.7</text><text x="1152.2" y="915.6999999999999" font-family="Liberation Serif,serif" font-size="13" fill="#f4f4f4" text-anchor="start">0.1</text><text x="1152.2" y="859.5999999999999" font-family="Liberation Serif,serif" font-size="13" fill="#f4f4f4" text-anchor="start">0.2</text><text x="1152.2" y="803.4999999999999" font-family="Liberation Serif,serif" font-size="13" fill="#f4f4f4" text-anchor="start">0.3</text><text x="1152.2" y="747.4" font-family="Liberation Serif,serif" font-size="13" fill="#f4f4f4" text-anchor="start">0.4</text><text x="1152.2" y="691.3" font-family="Liberation Serif,serif" font-size="13" fill="#f4f4f4" text-anchor="start">0.5</text><text x="1152.2" y="635.1999999999999" font-family="Liberation Serif,serif" font-size="13" fill="#f4f4f4" text-anchor="start">0.6</text><text x="1152.2" y="579.1" font-family="Liberation Serif,serif" font-size="13" fill="#f4f4f4" text-anchor="start">0.7</text><text x="1152.2" y="522.9999999999999" font-family="Liberation Serif,serif" font-size="13" fill="#f4f4f4" text-anchor="start">0.8</text><text x="1880.500" y="943.800" font-family="Liberation Sans,sans-serif" font-size="16" font-weight="bold" fill="#4a4a4a" text-anchor="end" textLength="155" lengthAdjust="spacingAndGlyphs">hcfr.sourceforge.net</text></svg></body></html>
